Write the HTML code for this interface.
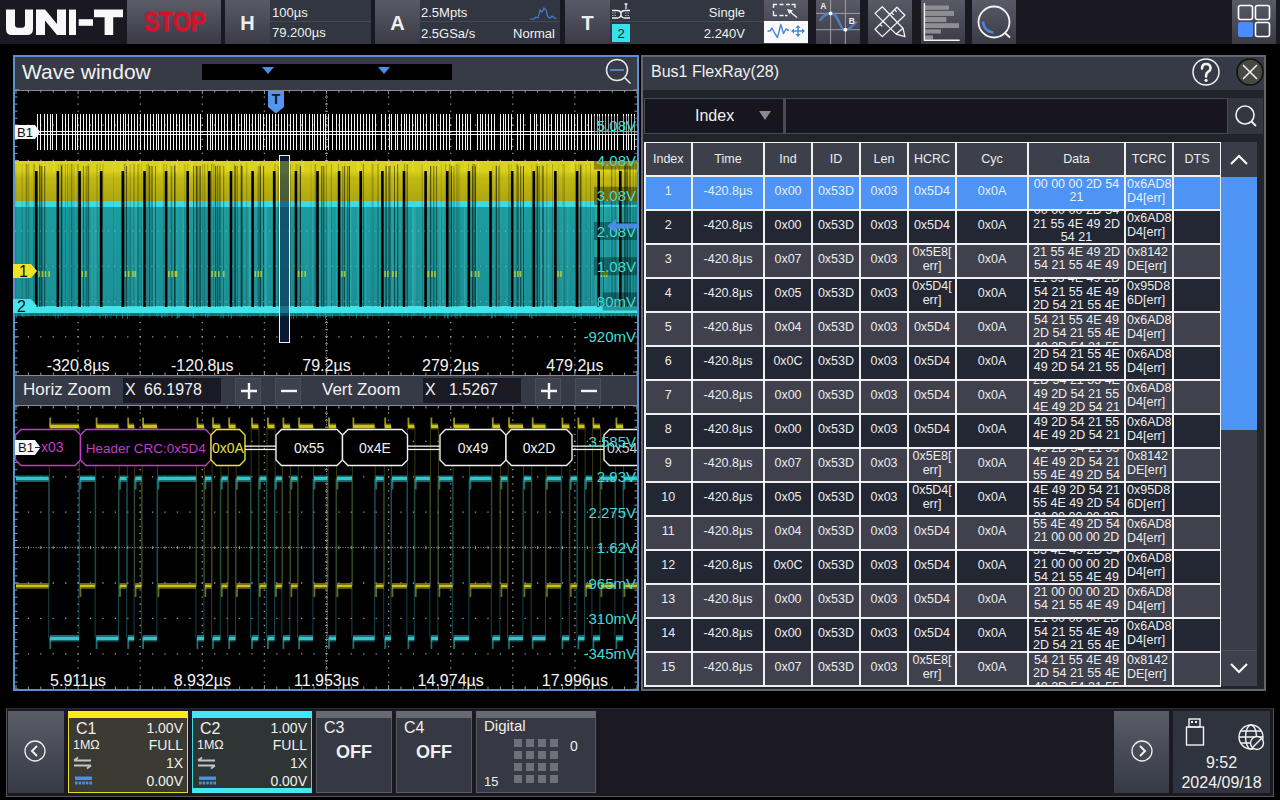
<!DOCTYPE html><html><head><meta charset="utf-8"><style>
*{margin:0;padding:0;box-sizing:border-box}
html,body{width:1280px;height:800px;overflow:hidden;background:#000;font-family:"Liberation Sans",sans-serif;color:#fff}
.a{position:absolute}
.t{position:absolute;white-space:nowrap;line-height:1}
</style></head><body>
<div class="a" style="left:0;top:0;width:1280px;height:44px;background:#1a1820"></div>
<svg class="a" style="left:0;top:0" width="130" height="44" viewBox="0 0 130 44">
<g fill="#f8f8f8">
<path d="M6 9.6h9v15q0 3.2 3 3.2h4q3 0 3-3.2V9.6h8V29q0 6-6 6H12q-6 0-6-6z"/>
<path d="M36 9.6h9l12 14.5V9.6h9V35h-9L45 20.5V35h-9z"/>
<rect x="69" y="9.6" width="7" height="25.4"/>
<rect x="78.7" y="19.2" width="14.3" height="6.6"/>
<path d="M94 9.6h29v7.6h-9.8V35h-8.6V17.2H94z"/>
</g></svg>
<div class="a" style="left:127px;top:0;width:94px;height:44px;background:linear-gradient(#5c5c68,#3a3a46)"></div>
<div class="t" style="left:144px;top:8.5px;font-size:27px;font-weight:bold;color:#d0142c;-webkit-text-stroke:0.9px #d0142c;transform:scaleX(0.85);transform-origin:0 0">STOP</div>
<div class="a" style="left:225px;top:0;width:45px;height:44px;background:linear-gradient(#5a5a66,#3a3b46)"></div>
<div class="t" style="left:225px;width:45px;text-align:center;top:13px;font-size:20px;font-weight:bold;color:#eee">H</div>
<div class="a" style="left:270px;top:0;width:101px;height:44px;background:#323641"></div>
<div class="a" style="left:270px;top:21px;width:101px;height:1px;background:#454954"></div>
<div class="t" style="left:272px;top:6px;font-size:13px;color:#f0f0f0">100µs</div>
<div class="t" style="left:272px;top:26px;font-size:13px;color:#f0f0f0">79.200µs</div>
<div class="a" style="left:375px;top:0;width:45px;height:44px;background:linear-gradient(#5a5a66,#3a3b46)"></div>
<div class="t" style="left:375px;width:45px;text-align:center;top:13px;font-size:20px;font-weight:bold;color:#eee">A</div>
<div class="a" style="left:420px;top:0;width:140px;height:44px;background:#323641"></div>
<div class="a" style="left:420px;top:21px;width:140px;height:1px;background:#454954"></div>
<div class="t" style="left:421px;top:6px;font-size:13px;color:#f0f0f0">2.5Mpts</div>
<div class="t" style="left:421px;top:27px;font-size:13px;color:#f0f0f0">2.5GSa/s</div>
<div class="t" style="left:484px;width:71px;text-align:right;top:27px;font-size:13px;color:#f0f0f0">Normal</div>
<svg class="a" style="left:529px;top:4px" width="28" height="16"><polyline points="1,15 5,15 7,13 9,14 11,6 13,8 15,4 17,6 19,13 21,14 23,12 27,15" fill="none" stroke="#3f7fd8" stroke-width="1.2"/></svg>
<div class="a" style="left:565px;top:0;width:45px;height:44px;background:linear-gradient(#5a5a66,#3a3b46)"></div>
<div class="t" style="left:565px;width:45px;text-align:center;top:13px;font-size:20px;font-weight:bold;color:#eee">T</div>
<div class="a" style="left:610px;top:0;width:184px;height:44px;background:#323641"></div>
<div class="a" style="left:610px;top:21px;width:184px;height:1px;background:#454954"></div>
<div class="t" style="left:560px;width:185px;text-align:right;top:6px;font-size:13px;color:#f0f0f0">Single</div>
<div class="t" style="left:560px;width:185px;text-align:right;top:27px;font-size:13px;color:#f0f0f0">2.240V</div>
<svg class="a" style="left:610px;top:0" width="22" height="22" viewBox="0 0 22 22"><g fill="none" stroke="#f0f0f0" stroke-width="1.3">
<path d="M2 10.5h5q4 0 4 3.75T7 18H2M20 10.5h-5q-4 0-4 3.75T15 18h5M14.5 4h3M16 4v5"/></g>
<path d="M2 13h5M2 15.5h5M15 13h5M15 15.5h5" stroke="#c8c8c8" stroke-width="0.8" stroke-dasharray="1.5,1"/></svg>
<div class="a" style="left:612px;top:24px;width:18px;height:18px;background:#38e0ec"></div>
<div class="t" style="left:612px;width:18px;text-align:center;top:27px;font-size:13px;color:#102020">2</div>
<div class="a" style="left:764px;top:0;width:44px;height:44px;background:linear-gradient(#5a5a66,#3a3b46)"></div>
<div class="a" style="left:816px;top:0;width:44px;height:44px;background:linear-gradient(#5a5a66,#3a3b46)"></div>
<div class="a" style="left:868px;top:0;width:44px;height:44px;background:linear-gradient(#5a5a66,#3a3b46)"></div>
<div class="a" style="left:921px;top:0;width:44px;height:44px;background:linear-gradient(#5a5a66,#3a3b46)"></div>
<div class="a" style="left:972px;top:0;width:44px;height:44px;background:linear-gradient(#5a5a66,#3a3b46)"></div>
<div class="a" style="left:764px;top:21px;width:44px;height:22px;background:#fafafa"></div>
<svg class="a" style="left:764px;top:0" width="44" height="44" viewBox="0 0 44 44"><g fill="none" stroke="#f4f4f4" stroke-width="1.3">
<path d="M9.5 8V4.5H13M15.5 4.5h4M22 4.5h4M27.5 4.5h3.5V8M9.5 11v4.5H13M15.5 15.5h4M21 15.5h2.5"/>
<path d="M24.5 10.5l8.5 7"/></g><path d="M23 9l6 1.2-3.8 3.8z" fill="#f4f4f4"/>
<g fill="none" stroke="#4a86d8" stroke-width="1.4" stroke-linejoin="round"><polyline points="3.5,31 6,31 8,28 10.5,33 13.5,37.5 16.8,24.5 19.5,33.5 22,29 25,30.5"/>
<path d="M28 31h12M34 26v10"/></g>
<g fill="#4a86d8"><path d="M27 31l3-2.5v5z"/><path d="M41 31l-3-2.5v5z"/><path d="M34 25l-2.5 3h5z"/><path d="M34 37l-2.5-3h5z"/></g></svg>
<svg class="a" style="left:816px;top:0" width="44" height="44" viewBox="0 0 44 44">
<g stroke="#a8a8b0" stroke-width="0.9"><path d="M14.6 0v44M29.4 0v44M0 13.4h44M0 29.7h44"/></g>
<path d="M3.8 20.7C7 16 10 13.4 14.6 13.4S21 18 24 24 27 29.7 29.4 29.7 36 27 40.7 21.5" fill="none" stroke="#4f86d0" stroke-width="2.6" opacity="0.85"/>
<circle cx="14.6" cy="13.4" r="1.9" fill="#fff"/><circle cx="29.4" cy="29.7" r="1.9" fill="#fff"/>
<text x="4.3" y="8.8" font-size="8.5" font-weight="bold" fill="#eee" font-family="Liberation Sans">A</text>
<text x="32.8" y="24.3" font-size="8.5" font-weight="bold" fill="#eee" font-family="Liberation Sans">B</text></svg>
<svg class="a" style="left:868px;top:0" width="44" height="44" viewBox="0 0 44 44"><g fill="none" stroke="#f2f2f2" stroke-width="1.3" stroke-linejoin="round">
<path d="M7 13.4L14.3 6.7 35 28.2 36.9 36.6 28.2 34.1 7 13.4z"/><path d="M28.2 34.1L35 28.2"/>
<path d="M7 29.3L28.9 7.3 36.9 15.2 14.3 36.6z"/>
<path d="M23.5 12.7l2.2 2.2M26.5 9.7l2.2 2.2M12 24.2l2.2 2.2M15 21.2l2.2 2.2"/></g></svg>
<svg class="a" style="left:921px;top:0" width="44" height="44" viewBox="0 0 44 44"><g fill="#8e8e94">
<rect x="4" y="5.5" width="24" height="4.3"/><rect x="4" y="11" width="29" height="4.9"/><rect x="4" y="17" width="21.3" height="5"/>
<rect x="4" y="23.2" width="34" height="4.8"/><rect x="4" y="29.3" width="16" height="4.2"/><rect x="4" y="35.4" width="8" height="4.2"/></g>
<path d="M3.4 3v37.2h35.3" fill="none" stroke="#f4f4f4" stroke-width="1.4"/></svg>
<svg class="a" style="left:972px;top:0" width="44" height="44" viewBox="0 0 44 44">
<circle cx="22" cy="22" r="15.5" fill="none" stroke="#f4f4f4" stroke-width="1.8"/>
<path d="M33 33l5 4.5" stroke="#f4f4f4" stroke-width="1.8"/>
<path d="M11 21.5A11 11 0 0 0 21.5 32.5" fill="none" stroke="#4a86d8" stroke-width="2.6"/></svg>
<div class="a" style="left:1232px;top:0;width:44px;height:44px;background:linear-gradient(#5a5a66,#3a3b46)"></div>
<svg class="a" style="left:1232px;top:0" width="44" height="44" viewBox="0 0 44 44"><g fill="none" stroke="#fff" stroke-width="1.6">
<rect x="6.5" y="5.5" width="14" height="14" rx="2"/><rect x="23.5" y="5.5" width="14" height="14" rx="2"/><rect x="23.5" y="22.5" width="14" height="14" rx="2"/></g>
<rect x="6" y="22" width="15" height="15" rx="2" fill="#4a8cff"/></svg>
<div class="a" style="left:13px;top:55px;width:626px;height:636px;border:2px solid #5a8fd6;background:#000"></div>
<div class="a" style="left:15px;top:57px;width:622px;height:33px;background:#373b45"></div>
<div class="t" style="left:22px;top:61px;font-size:21px;color:#f2f2f2">Wave window</div>
<div class="a" style="left:202px;top:64px;width:250px;height:16px;background:#000"></div>
<div class="a" style="left:15px;top:90px;width:622px;height:1px;background:#8a8a90"></div>
<svg class="a" style="left:0;top:0" width="640" height="100"><g fill="#4a8ee8"><path d="M262 67h12l-6 7z"/><path d="M378 67h12l-6 7z"/></g>
<circle cx="617" cy="70" r="10.5" fill="none" stroke="#e8e8e8" stroke-width="1.5"/><path d="M610 70h14" stroke="#6a9ae0" stroke-width="1.5"/><path d="M624.5 77.5l6 6" stroke="#e8e8e8" stroke-width="1.6"/></svg>
<svg class="a" style="left:0;top:0" width="640" height="380"><line x1="78.1" y1="90" x2="78.1" y2="375" stroke="#9a9a9a" stroke-width="1.3" stroke-dasharray="1.3,5.75" stroke-dashoffset="0.65"/><line x1="140.2" y1="90" x2="140.2" y2="375" stroke="#9a9a9a" stroke-width="1.3" stroke-dasharray="1.3,5.75" stroke-dashoffset="0.65"/><line x1="202.3" y1="90" x2="202.3" y2="375" stroke="#9a9a9a" stroke-width="1.3" stroke-dasharray="1.3,5.75" stroke-dashoffset="0.65"/><line x1="264.4" y1="90" x2="264.4" y2="375" stroke="#9a9a9a" stroke-width="1.3" stroke-dasharray="1.3,5.75" stroke-dashoffset="0.65"/><line x1="326.5" y1="90" x2="326.5" y2="375" stroke="#9a9a9a" stroke-width="1" stroke-dasharray="1,1.6"/><rect x="325.0" y="96.5" width="3" height="1" fill="#9a9a9a"/><rect x="325.0" y="103.6" width="3" height="1" fill="#9a9a9a"/><rect x="325.0" y="110.7" width="3" height="1" fill="#9a9a9a"/><rect x="325.0" y="117.7" width="3" height="1" fill="#9a9a9a"/><rect x="325.0" y="124.8" width="3" height="1" fill="#9a9a9a"/><rect x="325.0" y="131.8" width="3" height="1" fill="#9a9a9a"/><rect x="325.0" y="138.8" width="3" height="1" fill="#9a9a9a"/><rect x="325.0" y="145.9" width="3" height="1" fill="#9a9a9a"/><rect x="325.0" y="152.9" width="3" height="1" fill="#9a9a9a"/><rect x="325.0" y="160.0" width="3" height="1" fill="#9a9a9a"/><rect x="325.0" y="167.1" width="3" height="1" fill="#9a9a9a"/><rect x="325.0" y="174.1" width="3" height="1" fill="#9a9a9a"/><rect x="325.0" y="181.1" width="3" height="1" fill="#9a9a9a"/><rect x="325.0" y="188.2" width="3" height="1" fill="#9a9a9a"/><rect x="325.0" y="195.2" width="3" height="1" fill="#9a9a9a"/><rect x="325.0" y="202.3" width="3" height="1" fill="#9a9a9a"/><rect x="325.0" y="209.3" width="3" height="1" fill="#9a9a9a"/><rect x="325.0" y="216.4" width="3" height="1" fill="#9a9a9a"/><rect x="325.0" y="223.4" width="3" height="1" fill="#9a9a9a"/><rect x="325.0" y="230.5" width="3" height="1" fill="#9a9a9a"/><rect x="325.0" y="237.5" width="3" height="1" fill="#9a9a9a"/><rect x="325.0" y="244.6" width="3" height="1" fill="#9a9a9a"/><rect x="325.0" y="251.7" width="3" height="1" fill="#9a9a9a"/><rect x="325.0" y="258.7" width="3" height="1" fill="#9a9a9a"/><rect x="325.0" y="265.8" width="3" height="1" fill="#9a9a9a"/><rect x="325.0" y="272.8" width="3" height="1" fill="#9a9a9a"/><rect x="325.0" y="279.9" width="3" height="1" fill="#9a9a9a"/><rect x="325.0" y="286.9" width="3" height="1" fill="#9a9a9a"/><rect x="325.0" y="293.9" width="3" height="1" fill="#9a9a9a"/><rect x="325.0" y="301.0" width="3" height="1" fill="#9a9a9a"/><rect x="325.0" y="308.0" width="3" height="1" fill="#9a9a9a"/><rect x="325.0" y="315.1" width="3" height="1" fill="#9a9a9a"/><rect x="325.0" y="322.1" width="3" height="1" fill="#9a9a9a"/><rect x="325.0" y="329.2" width="3" height="1" fill="#9a9a9a"/><rect x="325.0" y="336.2" width="3" height="1" fill="#9a9a9a"/><rect x="325.0" y="343.3" width="3" height="1" fill="#9a9a9a"/><rect x="325.0" y="350.3" width="3" height="1" fill="#9a9a9a"/><rect x="325.0" y="357.4" width="3" height="1" fill="#9a9a9a"/><rect x="325.0" y="364.4" width="3" height="1" fill="#9a9a9a"/><rect x="325.0" y="371.5" width="3" height="1" fill="#9a9a9a"/><line x1="388.6" y1="90" x2="388.6" y2="375" stroke="#9a9a9a" stroke-width="1.3" stroke-dasharray="1.3,5.75" stroke-dashoffset="0.65"/><line x1="450.7" y1="90" x2="450.7" y2="375" stroke="#9a9a9a" stroke-width="1.3" stroke-dasharray="1.3,5.75" stroke-dashoffset="0.65"/><line x1="512.8" y1="90" x2="512.8" y2="375" stroke="#9a9a9a" stroke-width="1.3" stroke-dasharray="1.3,5.75" stroke-dashoffset="0.65"/><line x1="574.9" y1="90" x2="574.9" y2="375" stroke="#9a9a9a" stroke-width="1.3" stroke-dasharray="1.3,5.75" stroke-dashoffset="0.65"/><line x1="15" y1="125.2" x2="637" y2="125.2" stroke="#9a9a9a" stroke-width="1.3" stroke-dasharray="1.3,11.12" stroke-dashoffset="-12.77"/><line x1="15" y1="160.5" x2="637" y2="160.5" stroke="#9a9a9a" stroke-width="1.3" stroke-dasharray="1.3,11.12" stroke-dashoffset="-12.77"/><line x1="15" y1="195.8" x2="637" y2="195.8" stroke="#9a9a9a" stroke-width="1.3" stroke-dasharray="1.3,11.12" stroke-dashoffset="-12.77"/><line x1="15" y1="231.0" x2="637" y2="231.0" stroke="#9a9a9a" stroke-width="1" stroke-dasharray="1,1.6"/><rect x="27.9" y="229.5" width="1" height="3" fill="#9a9a9a"/><rect x="40.3" y="229.5" width="1" height="3" fill="#9a9a9a"/><rect x="52.8" y="229.5" width="1" height="3" fill="#9a9a9a"/><rect x="65.2" y="229.5" width="1" height="3" fill="#9a9a9a"/><rect x="77.6" y="229.5" width="1" height="3" fill="#9a9a9a"/><rect x="90.0" y="229.5" width="1" height="3" fill="#9a9a9a"/><rect x="102.4" y="229.5" width="1" height="3" fill="#9a9a9a"/><rect x="114.9" y="229.5" width="1" height="3" fill="#9a9a9a"/><rect x="127.3" y="229.5" width="1" height="3" fill="#9a9a9a"/><rect x="139.7" y="229.5" width="1" height="3" fill="#9a9a9a"/><rect x="152.1" y="229.5" width="1" height="3" fill="#9a9a9a"/><rect x="164.5" y="229.5" width="1" height="3" fill="#9a9a9a"/><rect x="177.0" y="229.5" width="1" height="3" fill="#9a9a9a"/><rect x="189.4" y="229.5" width="1" height="3" fill="#9a9a9a"/><rect x="201.8" y="229.5" width="1" height="3" fill="#9a9a9a"/><rect x="214.2" y="229.5" width="1" height="3" fill="#9a9a9a"/><rect x="226.6" y="229.5" width="1" height="3" fill="#9a9a9a"/><rect x="239.1" y="229.5" width="1" height="3" fill="#9a9a9a"/><rect x="251.5" y="229.5" width="1" height="3" fill="#9a9a9a"/><rect x="263.9" y="229.5" width="1" height="3" fill="#9a9a9a"/><rect x="276.3" y="229.5" width="1" height="3" fill="#9a9a9a"/><rect x="288.7" y="229.5" width="1" height="3" fill="#9a9a9a"/><rect x="301.2" y="229.5" width="1" height="3" fill="#9a9a9a"/><rect x="313.6" y="229.5" width="1" height="3" fill="#9a9a9a"/><rect x="326.0" y="229.5" width="1" height="3" fill="#9a9a9a"/><rect x="338.4" y="229.5" width="1" height="3" fill="#9a9a9a"/><rect x="350.8" y="229.5" width="1" height="3" fill="#9a9a9a"/><rect x="363.3" y="229.5" width="1" height="3" fill="#9a9a9a"/><rect x="375.7" y="229.5" width="1" height="3" fill="#9a9a9a"/><rect x="388.1" y="229.5" width="1" height="3" fill="#9a9a9a"/><rect x="400.5" y="229.5" width="1" height="3" fill="#9a9a9a"/><rect x="412.9" y="229.5" width="1" height="3" fill="#9a9a9a"/><rect x="425.4" y="229.5" width="1" height="3" fill="#9a9a9a"/><rect x="437.8" y="229.5" width="1" height="3" fill="#9a9a9a"/><rect x="450.2" y="229.5" width="1" height="3" fill="#9a9a9a"/><rect x="462.6" y="229.5" width="1" height="3" fill="#9a9a9a"/><rect x="475.0" y="229.5" width="1" height="3" fill="#9a9a9a"/><rect x="487.5" y="229.5" width="1" height="3" fill="#9a9a9a"/><rect x="499.9" y="229.5" width="1" height="3" fill="#9a9a9a"/><rect x="512.3" y="229.5" width="1" height="3" fill="#9a9a9a"/><rect x="524.7" y="229.5" width="1" height="3" fill="#9a9a9a"/><rect x="537.1" y="229.5" width="1" height="3" fill="#9a9a9a"/><rect x="549.6" y="229.5" width="1" height="3" fill="#9a9a9a"/><rect x="562.0" y="229.5" width="1" height="3" fill="#9a9a9a"/><rect x="574.4" y="229.5" width="1" height="3" fill="#9a9a9a"/><rect x="586.8" y="229.5" width="1" height="3" fill="#9a9a9a"/><rect x="599.2" y="229.5" width="1" height="3" fill="#9a9a9a"/><rect x="611.7" y="229.5" width="1" height="3" fill="#9a9a9a"/><rect x="624.1" y="229.5" width="1" height="3" fill="#9a9a9a"/><rect x="636.5" y="229.5" width="1" height="3" fill="#9a9a9a"/><line x1="15" y1="266.2" x2="637" y2="266.2" stroke="#9a9a9a" stroke-width="1.3" stroke-dasharray="1.3,11.12" stroke-dashoffset="-12.77"/><line x1="15" y1="301.5" x2="637" y2="301.5" stroke="#9a9a9a" stroke-width="1.3" stroke-dasharray="1.3,11.12" stroke-dashoffset="-12.77"/><line x1="15" y1="336.8" x2="637" y2="336.8" stroke="#9a9a9a" stroke-width="1.3" stroke-dasharray="1.3,11.12" stroke-dashoffset="-12.77"/><line x1="16.0" y1="90" x2="16.0" y2="94" stroke="#9a9a9a"/><line x1="16.0" y1="371" x2="16.0" y2="375" stroke="#9a9a9a"/><line x1="28.4" y1="90" x2="28.4" y2="92.5" stroke="#9a9a9a"/><line x1="28.4" y1="372.5" x2="28.4" y2="375" stroke="#9a9a9a"/><line x1="40.8" y1="90" x2="40.8" y2="92.5" stroke="#9a9a9a"/><line x1="40.8" y1="372.5" x2="40.8" y2="375" stroke="#9a9a9a"/><line x1="53.3" y1="90" x2="53.3" y2="92.5" stroke="#9a9a9a"/><line x1="53.3" y1="372.5" x2="53.3" y2="375" stroke="#9a9a9a"/><line x1="65.7" y1="90" x2="65.7" y2="92.5" stroke="#9a9a9a"/><line x1="65.7" y1="372.5" x2="65.7" y2="375" stroke="#9a9a9a"/><line x1="78.1" y1="90" x2="78.1" y2="94" stroke="#9a9a9a"/><line x1="78.1" y1="371" x2="78.1" y2="375" stroke="#9a9a9a"/><line x1="90.5" y1="90" x2="90.5" y2="92.5" stroke="#9a9a9a"/><line x1="90.5" y1="372.5" x2="90.5" y2="375" stroke="#9a9a9a"/><line x1="102.9" y1="90" x2="102.9" y2="92.5" stroke="#9a9a9a"/><line x1="102.9" y1="372.5" x2="102.9" y2="375" stroke="#9a9a9a"/><line x1="115.4" y1="90" x2="115.4" y2="92.5" stroke="#9a9a9a"/><line x1="115.4" y1="372.5" x2="115.4" y2="375" stroke="#9a9a9a"/><line x1="127.8" y1="90" x2="127.8" y2="92.5" stroke="#9a9a9a"/><line x1="127.8" y1="372.5" x2="127.8" y2="375" stroke="#9a9a9a"/><line x1="140.2" y1="90" x2="140.2" y2="94" stroke="#9a9a9a"/><line x1="140.2" y1="371" x2="140.2" y2="375" stroke="#9a9a9a"/><line x1="152.6" y1="90" x2="152.6" y2="92.5" stroke="#9a9a9a"/><line x1="152.6" y1="372.5" x2="152.6" y2="375" stroke="#9a9a9a"/><line x1="165.0" y1="90" x2="165.0" y2="92.5" stroke="#9a9a9a"/><line x1="165.0" y1="372.5" x2="165.0" y2="375" stroke="#9a9a9a"/><line x1="177.5" y1="90" x2="177.5" y2="92.5" stroke="#9a9a9a"/><line x1="177.5" y1="372.5" x2="177.5" y2="375" stroke="#9a9a9a"/><line x1="189.9" y1="90" x2="189.9" y2="92.5" stroke="#9a9a9a"/><line x1="189.9" y1="372.5" x2="189.9" y2="375" stroke="#9a9a9a"/><line x1="202.3" y1="90" x2="202.3" y2="94" stroke="#9a9a9a"/><line x1="202.3" y1="371" x2="202.3" y2="375" stroke="#9a9a9a"/><line x1="214.7" y1="90" x2="214.7" y2="92.5" stroke="#9a9a9a"/><line x1="214.7" y1="372.5" x2="214.7" y2="375" stroke="#9a9a9a"/><line x1="227.1" y1="90" x2="227.1" y2="92.5" stroke="#9a9a9a"/><line x1="227.1" y1="372.5" x2="227.1" y2="375" stroke="#9a9a9a"/><line x1="239.6" y1="90" x2="239.6" y2="92.5" stroke="#9a9a9a"/><line x1="239.6" y1="372.5" x2="239.6" y2="375" stroke="#9a9a9a"/><line x1="252.0" y1="90" x2="252.0" y2="92.5" stroke="#9a9a9a"/><line x1="252.0" y1="372.5" x2="252.0" y2="375" stroke="#9a9a9a"/><line x1="264.4" y1="90" x2="264.4" y2="94" stroke="#9a9a9a"/><line x1="264.4" y1="371" x2="264.4" y2="375" stroke="#9a9a9a"/><line x1="276.8" y1="90" x2="276.8" y2="92.5" stroke="#9a9a9a"/><line x1="276.8" y1="372.5" x2="276.8" y2="375" stroke="#9a9a9a"/><line x1="289.2" y1="90" x2="289.2" y2="92.5" stroke="#9a9a9a"/><line x1="289.2" y1="372.5" x2="289.2" y2="375" stroke="#9a9a9a"/><line x1="301.7" y1="90" x2="301.7" y2="92.5" stroke="#9a9a9a"/><line x1="301.7" y1="372.5" x2="301.7" y2="375" stroke="#9a9a9a"/><line x1="314.1" y1="90" x2="314.1" y2="92.5" stroke="#9a9a9a"/><line x1="314.1" y1="372.5" x2="314.1" y2="375" stroke="#9a9a9a"/><line x1="326.5" y1="90" x2="326.5" y2="94" stroke="#9a9a9a"/><line x1="326.5" y1="371" x2="326.5" y2="375" stroke="#9a9a9a"/><line x1="338.9" y1="90" x2="338.9" y2="92.5" stroke="#9a9a9a"/><line x1="338.9" y1="372.5" x2="338.9" y2="375" stroke="#9a9a9a"/><line x1="351.3" y1="90" x2="351.3" y2="92.5" stroke="#9a9a9a"/><line x1="351.3" y1="372.5" x2="351.3" y2="375" stroke="#9a9a9a"/><line x1="363.8" y1="90" x2="363.8" y2="92.5" stroke="#9a9a9a"/><line x1="363.8" y1="372.5" x2="363.8" y2="375" stroke="#9a9a9a"/><line x1="376.2" y1="90" x2="376.2" y2="92.5" stroke="#9a9a9a"/><line x1="376.2" y1="372.5" x2="376.2" y2="375" stroke="#9a9a9a"/><line x1="388.6" y1="90" x2="388.6" y2="94" stroke="#9a9a9a"/><line x1="388.6" y1="371" x2="388.6" y2="375" stroke="#9a9a9a"/><line x1="401.0" y1="90" x2="401.0" y2="92.5" stroke="#9a9a9a"/><line x1="401.0" y1="372.5" x2="401.0" y2="375" stroke="#9a9a9a"/><line x1="413.4" y1="90" x2="413.4" y2="92.5" stroke="#9a9a9a"/><line x1="413.4" y1="372.5" x2="413.4" y2="375" stroke="#9a9a9a"/><line x1="425.9" y1="90" x2="425.9" y2="92.5" stroke="#9a9a9a"/><line x1="425.9" y1="372.5" x2="425.9" y2="375" stroke="#9a9a9a"/><line x1="438.3" y1="90" x2="438.3" y2="92.5" stroke="#9a9a9a"/><line x1="438.3" y1="372.5" x2="438.3" y2="375" stroke="#9a9a9a"/><line x1="450.7" y1="90" x2="450.7" y2="94" stroke="#9a9a9a"/><line x1="450.7" y1="371" x2="450.7" y2="375" stroke="#9a9a9a"/><line x1="463.1" y1="90" x2="463.1" y2="92.5" stroke="#9a9a9a"/><line x1="463.1" y1="372.5" x2="463.1" y2="375" stroke="#9a9a9a"/><line x1="475.5" y1="90" x2="475.5" y2="92.5" stroke="#9a9a9a"/><line x1="475.5" y1="372.5" x2="475.5" y2="375" stroke="#9a9a9a"/><line x1="488.0" y1="90" x2="488.0" y2="92.5" stroke="#9a9a9a"/><line x1="488.0" y1="372.5" x2="488.0" y2="375" stroke="#9a9a9a"/><line x1="500.4" y1="90" x2="500.4" y2="92.5" stroke="#9a9a9a"/><line x1="500.4" y1="372.5" x2="500.4" y2="375" stroke="#9a9a9a"/><line x1="512.8" y1="90" x2="512.8" y2="94" stroke="#9a9a9a"/><line x1="512.8" y1="371" x2="512.8" y2="375" stroke="#9a9a9a"/><line x1="525.2" y1="90" x2="525.2" y2="92.5" stroke="#9a9a9a"/><line x1="525.2" y1="372.5" x2="525.2" y2="375" stroke="#9a9a9a"/><line x1="537.6" y1="90" x2="537.6" y2="92.5" stroke="#9a9a9a"/><line x1="537.6" y1="372.5" x2="537.6" y2="375" stroke="#9a9a9a"/><line x1="550.1" y1="90" x2="550.1" y2="92.5" stroke="#9a9a9a"/><line x1="550.1" y1="372.5" x2="550.1" y2="375" stroke="#9a9a9a"/><line x1="562.5" y1="90" x2="562.5" y2="92.5" stroke="#9a9a9a"/><line x1="562.5" y1="372.5" x2="562.5" y2="375" stroke="#9a9a9a"/><line x1="574.9" y1="90" x2="574.9" y2="94" stroke="#9a9a9a"/><line x1="574.9" y1="371" x2="574.9" y2="375" stroke="#9a9a9a"/><line x1="587.3" y1="90" x2="587.3" y2="92.5" stroke="#9a9a9a"/><line x1="587.3" y1="372.5" x2="587.3" y2="375" stroke="#9a9a9a"/><line x1="599.7" y1="90" x2="599.7" y2="92.5" stroke="#9a9a9a"/><line x1="599.7" y1="372.5" x2="599.7" y2="375" stroke="#9a9a9a"/><line x1="612.2" y1="90" x2="612.2" y2="92.5" stroke="#9a9a9a"/><line x1="612.2" y1="372.5" x2="612.2" y2="375" stroke="#9a9a9a"/><line x1="624.6" y1="90" x2="624.6" y2="92.5" stroke="#9a9a9a"/><line x1="624.6" y1="372.5" x2="624.6" y2="375" stroke="#9a9a9a"/><line x1="637.0" y1="90" x2="637.0" y2="94" stroke="#9a9a9a"/><line x1="637.0" y1="371" x2="637.0" y2="375" stroke="#9a9a9a"/><line x1="15" y1="90.0" x2="19" y2="90.0" stroke="#9a9a9a"/><line x1="633" y1="90.0" x2="637" y2="90.0" stroke="#9a9a9a"/><line x1="15" y1="97.0" x2="17.5" y2="97.0" stroke="#9a9a9a"/><line x1="634.5" y1="97.0" x2="637" y2="97.0" stroke="#9a9a9a"/><line x1="15" y1="104.1" x2="17.5" y2="104.1" stroke="#9a9a9a"/><line x1="634.5" y1="104.1" x2="637" y2="104.1" stroke="#9a9a9a"/><line x1="15" y1="111.2" x2="17.5" y2="111.2" stroke="#9a9a9a"/><line x1="634.5" y1="111.2" x2="637" y2="111.2" stroke="#9a9a9a"/><line x1="15" y1="118.2" x2="17.5" y2="118.2" stroke="#9a9a9a"/><line x1="634.5" y1="118.2" x2="637" y2="118.2" stroke="#9a9a9a"/><line x1="15" y1="125.2" x2="19" y2="125.2" stroke="#9a9a9a"/><line x1="633" y1="125.2" x2="637" y2="125.2" stroke="#9a9a9a"/><line x1="15" y1="132.3" x2="17.5" y2="132.3" stroke="#9a9a9a"/><line x1="634.5" y1="132.3" x2="637" y2="132.3" stroke="#9a9a9a"/><line x1="15" y1="139.3" x2="17.5" y2="139.3" stroke="#9a9a9a"/><line x1="634.5" y1="139.3" x2="637" y2="139.3" stroke="#9a9a9a"/><line x1="15" y1="146.4" x2="17.5" y2="146.4" stroke="#9a9a9a"/><line x1="634.5" y1="146.4" x2="637" y2="146.4" stroke="#9a9a9a"/><line x1="15" y1="153.4" x2="17.5" y2="153.4" stroke="#9a9a9a"/><line x1="634.5" y1="153.4" x2="637" y2="153.4" stroke="#9a9a9a"/><line x1="15" y1="160.5" x2="19" y2="160.5" stroke="#9a9a9a"/><line x1="633" y1="160.5" x2="637" y2="160.5" stroke="#9a9a9a"/><line x1="15" y1="167.6" x2="17.5" y2="167.6" stroke="#9a9a9a"/><line x1="634.5" y1="167.6" x2="637" y2="167.6" stroke="#9a9a9a"/><line x1="15" y1="174.6" x2="17.5" y2="174.6" stroke="#9a9a9a"/><line x1="634.5" y1="174.6" x2="637" y2="174.6" stroke="#9a9a9a"/><line x1="15" y1="181.6" x2="17.5" y2="181.6" stroke="#9a9a9a"/><line x1="634.5" y1="181.6" x2="637" y2="181.6" stroke="#9a9a9a"/><line x1="15" y1="188.7" x2="17.5" y2="188.7" stroke="#9a9a9a"/><line x1="634.5" y1="188.7" x2="637" y2="188.7" stroke="#9a9a9a"/><line x1="15" y1="195.8" x2="19" y2="195.8" stroke="#9a9a9a"/><line x1="633" y1="195.8" x2="637" y2="195.8" stroke="#9a9a9a"/><line x1="15" y1="202.8" x2="17.5" y2="202.8" stroke="#9a9a9a"/><line x1="634.5" y1="202.8" x2="637" y2="202.8" stroke="#9a9a9a"/><line x1="15" y1="209.8" x2="17.5" y2="209.8" stroke="#9a9a9a"/><line x1="634.5" y1="209.8" x2="637" y2="209.8" stroke="#9a9a9a"/><line x1="15" y1="216.9" x2="17.5" y2="216.9" stroke="#9a9a9a"/><line x1="634.5" y1="216.9" x2="637" y2="216.9" stroke="#9a9a9a"/><line x1="15" y1="223.9" x2="17.5" y2="223.9" stroke="#9a9a9a"/><line x1="634.5" y1="223.9" x2="637" y2="223.9" stroke="#9a9a9a"/><line x1="15" y1="231.0" x2="19" y2="231.0" stroke="#9a9a9a"/><line x1="633" y1="231.0" x2="637" y2="231.0" stroke="#9a9a9a"/><line x1="15" y1="238.0" x2="17.5" y2="238.0" stroke="#9a9a9a"/><line x1="634.5" y1="238.0" x2="637" y2="238.0" stroke="#9a9a9a"/><line x1="15" y1="245.1" x2="17.5" y2="245.1" stroke="#9a9a9a"/><line x1="634.5" y1="245.1" x2="637" y2="245.1" stroke="#9a9a9a"/><line x1="15" y1="252.2" x2="17.5" y2="252.2" stroke="#9a9a9a"/><line x1="634.5" y1="252.2" x2="637" y2="252.2" stroke="#9a9a9a"/><line x1="15" y1="259.2" x2="17.5" y2="259.2" stroke="#9a9a9a"/><line x1="634.5" y1="259.2" x2="637" y2="259.2" stroke="#9a9a9a"/><line x1="15" y1="266.2" x2="19" y2="266.2" stroke="#9a9a9a"/><line x1="633" y1="266.2" x2="637" y2="266.2" stroke="#9a9a9a"/><line x1="15" y1="273.3" x2="17.5" y2="273.3" stroke="#9a9a9a"/><line x1="634.5" y1="273.3" x2="637" y2="273.3" stroke="#9a9a9a"/><line x1="15" y1="280.4" x2="17.5" y2="280.4" stroke="#9a9a9a"/><line x1="634.5" y1="280.4" x2="637" y2="280.4" stroke="#9a9a9a"/><line x1="15" y1="287.4" x2="17.5" y2="287.4" stroke="#9a9a9a"/><line x1="634.5" y1="287.4" x2="637" y2="287.4" stroke="#9a9a9a"/><line x1="15" y1="294.4" x2="17.5" y2="294.4" stroke="#9a9a9a"/><line x1="634.5" y1="294.4" x2="637" y2="294.4" stroke="#9a9a9a"/><line x1="15" y1="301.5" x2="19" y2="301.5" stroke="#9a9a9a"/><line x1="633" y1="301.5" x2="637" y2="301.5" stroke="#9a9a9a"/><line x1="15" y1="308.5" x2="17.5" y2="308.5" stroke="#9a9a9a"/><line x1="634.5" y1="308.5" x2="637" y2="308.5" stroke="#9a9a9a"/><line x1="15" y1="315.6" x2="17.5" y2="315.6" stroke="#9a9a9a"/><line x1="634.5" y1="315.6" x2="637" y2="315.6" stroke="#9a9a9a"/><line x1="15" y1="322.6" x2="17.5" y2="322.6" stroke="#9a9a9a"/><line x1="634.5" y1="322.6" x2="637" y2="322.6" stroke="#9a9a9a"/><line x1="15" y1="329.7" x2="17.5" y2="329.7" stroke="#9a9a9a"/><line x1="634.5" y1="329.7" x2="637" y2="329.7" stroke="#9a9a9a"/><line x1="15" y1="336.8" x2="19" y2="336.8" stroke="#9a9a9a"/><line x1="633" y1="336.8" x2="637" y2="336.8" stroke="#9a9a9a"/><line x1="15" y1="343.8" x2="17.5" y2="343.8" stroke="#9a9a9a"/><line x1="634.5" y1="343.8" x2="637" y2="343.8" stroke="#9a9a9a"/><line x1="15" y1="350.8" x2="17.5" y2="350.8" stroke="#9a9a9a"/><line x1="634.5" y1="350.8" x2="637" y2="350.8" stroke="#9a9a9a"/><line x1="15" y1="357.9" x2="17.5" y2="357.9" stroke="#9a9a9a"/><line x1="634.5" y1="357.9" x2="637" y2="357.9" stroke="#9a9a9a"/><line x1="15" y1="364.9" x2="17.5" y2="364.9" stroke="#9a9a9a"/><line x1="634.5" y1="364.9" x2="637" y2="364.9" stroke="#9a9a9a"/><line x1="15" y1="372.0" x2="19" y2="372.0" stroke="#9a9a9a"/><line x1="633" y1="372.0" x2="637" y2="372.0" stroke="#9a9a9a"/><g shape-rendering="crispEdges" fill="#f4f4f4"><rect x="37" y="114" width="1" height="36"/><rect x="40" y="114" width="1" height="36"/><rect x="44" y="114" width="1" height="36"/><rect x="47" y="114" width="1" height="36"/><rect x="50" y="114" width="1" height="36"/><rect x="52" y="114" width="1" height="36"/><rect x="56" y="114" width="1" height="36"/><rect x="62" y="114" width="1" height="36"/><rect x="65" y="114" width="1" height="36"/><rect x="68" y="114" width="1" height="36"/><rect x="72" y="114" width="1" height="36"/><rect x="75" y="114" width="1" height="36"/><rect x="77" y="114" width="1" height="36"/><rect x="80" y="114" width="1" height="36"/><rect x="83" y="114" width="1" height="36"/><rect x="86" y="114" width="1" height="36"/><rect x="89" y="114" width="1" height="36"/><rect x="92" y="114" width="1" height="36"/><rect x="95" y="114" width="1" height="36"/><rect x="98" y="114" width="1" height="36"/><rect x="101" y="114" width="1" height="36"/><rect x="105" y="114" width="1" height="36"/><rect x="108" y="114" width="1" height="36"/><rect x="111" y="114" width="1" height="36"/><rect x="114" y="114" width="1" height="36"/><rect x="117" y="114" width="1" height="36"/><rect x="120" y="114" width="1" height="36"/><rect x="123" y="114" width="1" height="36"/><rect x="125" y="114" width="1" height="36"/><rect x="128" y="114" width="1" height="36"/><rect x="131" y="114" width="1" height="36"/><rect x="134" y="114" width="1" height="36"/><rect x="137" y="114" width="1" height="36"/><rect x="140" y="114" width="1" height="36"/><rect x="144" y="114" width="1" height="36"/><rect x="147" y="114" width="1" height="36"/><rect x="150" y="114" width="1" height="36"/><rect x="153" y="114" width="1" height="36"/><rect x="156" y="114" width="1" height="36"/><rect x="158" y="114" width="1" height="36"/><rect x="161" y="114" width="1" height="36"/><rect x="164" y="114" width="1" height="36"/><rect x="167" y="114" width="1" height="36"/><rect x="170" y="114" width="1" height="36"/><rect x="173" y="114" width="1" height="36"/><rect x="176" y="114" width="1" height="36"/><rect x="179" y="114" width="1" height="36"/><rect x="182" y="114" width="1" height="36"/><rect x="185" y="114" width="1" height="36"/><rect x="188" y="114" width="1" height="36"/><rect x="191" y="114" width="1" height="36"/><rect x="194" y="114" width="1" height="36"/><rect x="197" y="114" width="1" height="36"/><rect x="200" y="114" width="1" height="36"/><rect x="207" y="114" width="1" height="36"/><rect x="210" y="114" width="1" height="36"/><rect x="212" y="114" width="1" height="36"/><rect x="215" y="114" width="1" height="36"/><rect x="218" y="114" width="1" height="36"/><rect x="221" y="114" width="1" height="36"/><rect x="224" y="114" width="1" height="36"/><rect x="227" y="114" width="1" height="36"/><rect x="231" y="114" width="1" height="36"/><rect x="235" y="114" width="1" height="36"/><rect x="238" y="114" width="1" height="36"/><rect x="241" y="114" width="1" height="36"/><rect x="244" y="114" width="1" height="36"/><rect x="246" y="114" width="1" height="36"/><rect x="249" y="114" width="1" height="36"/><rect x="252" y="114" width="1" height="36"/><rect x="255" y="114" width="1" height="36"/><rect x="258" y="114" width="1" height="36"/><rect x="260" y="114" width="1" height="36"/><rect x="263" y="114" width="1" height="36"/><rect x="266" y="114" width="1" height="36"/><rect x="269" y="114" width="1" height="36"/><rect x="272" y="114" width="1" height="36"/><rect x="275" y="114" width="1" height="36"/><rect x="278" y="114" width="1" height="36"/><rect x="281" y="114" width="1" height="36"/><rect x="284" y="114" width="1" height="36"/><rect x="287" y="114" width="1" height="36"/><rect x="290" y="114" width="1" height="36"/><rect x="293" y="114" width="1" height="36"/><rect x="296" y="114" width="1" height="36"/><rect x="300" y="114" width="1" height="36"/><rect x="302" y="114" width="1" height="36"/><rect x="305" y="114" width="1" height="36"/><rect x="309" y="114" width="1" height="36"/><rect x="312" y="114" width="1" height="36"/><rect x="314" y="114" width="1" height="36"/><rect x="317" y="114" width="1" height="36"/><rect x="320" y="114" width="1" height="36"/><rect x="323" y="114" width="1" height="36"/><rect x="325" y="114" width="1" height="36"/><rect x="328" y="114" width="1" height="36"/><rect x="332" y="114" width="1" height="36"/><rect x="336" y="114" width="1" height="36"/><rect x="339" y="114" width="1" height="36"/><rect x="342" y="114" width="1" height="36"/><rect x="345" y="114" width="1" height="36"/><rect x="348" y="114" width="1" height="36"/><rect x="351" y="114" width="1" height="36"/><rect x="354" y="114" width="1" height="36"/><rect x="357" y="114" width="1" height="36"/><rect x="360" y="114" width="1" height="36"/><rect x="363" y="114" width="1" height="36"/><rect x="366" y="114" width="1" height="36"/><rect x="369" y="114" width="1" height="36"/><rect x="372" y="114" width="1" height="36"/><rect x="375" y="114" width="1" height="36"/><rect x="381" y="114" width="1" height="36"/><rect x="385" y="114" width="1" height="36"/><rect x="389" y="114" width="1" height="36"/><rect x="391" y="114" width="1" height="36"/><rect x="395" y="114" width="1" height="36"/><rect x="397" y="114" width="1" height="36"/><rect x="401" y="114" width="1" height="36"/><rect x="404" y="114" width="1" height="36"/><rect x="406" y="114" width="1" height="36"/><rect x="409" y="114" width="1" height="36"/><rect x="412" y="114" width="1" height="36"/><rect x="415" y="114" width="1" height="36"/><rect x="417" y="114" width="1" height="36"/><rect x="420" y="114" width="1" height="36"/><rect x="423" y="114" width="1" height="36"/><rect x="426" y="114" width="1" height="36"/><rect x="430" y="114" width="1" height="36"/><rect x="433" y="114" width="1" height="36"/><rect x="436" y="114" width="1" height="36"/><rect x="440" y="114" width="1" height="36"/><rect x="443" y="114" width="1" height="36"/><rect x="446" y="114" width="1" height="36"/><rect x="449" y="114" width="1" height="36"/><rect x="456" y="114" width="1" height="36"/><rect x="459" y="114" width="1" height="36"/><rect x="462" y="114" width="1" height="36"/><rect x="465" y="114" width="1" height="36"/><rect x="467" y="114" width="1" height="36"/><rect x="470" y="114" width="1" height="36"/><rect x="477" y="114" width="1" height="36"/><rect x="480" y="114" width="1" height="36"/><rect x="482" y="114" width="1" height="36"/><rect x="485" y="114" width="1" height="36"/><rect x="488" y="114" width="1" height="36"/><rect x="491" y="114" width="1" height="36"/><rect x="494" y="114" width="1" height="36"/><rect x="500" y="114" width="1" height="36"/><rect x="503" y="114" width="1" height="36"/><rect x="505" y="114" width="1" height="36"/><rect x="508" y="114" width="1" height="36"/><rect x="511" y="114" width="1" height="36"/><rect x="517" y="114" width="1" height="36"/><rect x="520" y="114" width="1" height="36"/><rect x="523" y="114" width="1" height="36"/><rect x="530" y="114" width="1" height="36"/><rect x="534" y="114" width="1" height="36"/><rect x="536" y="114" width="1" height="36"/><rect x="540" y="114" width="1" height="36"/><rect x="543" y="114" width="1" height="36"/><rect x="545" y="114" width="1" height="36"/><rect x="548" y="114" width="1" height="36"/><rect x="551" y="114" width="1" height="36"/><rect x="555" y="114" width="1" height="36"/><rect x="557" y="114" width="1" height="36"/><rect x="560" y="114" width="1" height="36"/><rect x="562" y="114" width="1" height="36"/><rect x="565" y="114" width="1" height="36"/><rect x="568" y="114" width="1" height="36"/><rect x="571" y="114" width="1" height="36"/><rect x="574" y="114" width="1" height="36"/><rect x="577" y="114" width="1" height="36"/><rect x="581" y="114" width="1" height="36"/><rect x="585" y="114" width="1" height="36"/><rect x="588" y="114" width="1" height="36"/><rect x="591" y="114" width="1" height="36"/><rect x="594" y="114" width="1" height="36"/><rect x="597" y="114" width="1" height="36"/><rect x="599" y="114" width="1" height="36"/><rect x="602" y="114" width="1" height="36"/><rect x="605" y="114" width="1" height="36"/><rect x="608" y="114" width="1" height="36"/><rect x="611" y="114" width="1" height="36"/><rect x="614" y="114" width="1" height="36"/><rect x="617" y="114" width="1" height="36"/><rect x="623" y="114" width="1" height="36"/><rect x="626" y="114" width="1" height="36"/><rect x="628" y="114" width="1" height="36"/><rect x="631" y="114" width="1" height="36"/><rect x="634" y="114" width="1" height="36"/><rect x="37" y="131" width="600" height="1"/><rect x="37" y="134" width="600" height="1"/></g><defs><linearGradient id="yg" x1="0" y1="0" x2="0" y2="1">
<stop offset="0" stop-color="#dcd41a"/><stop offset="0.25" stop-color="#d8d01a"/><stop offset="0.4" stop-color="#c2ba12"/><stop offset="1" stop-color="#aca512"/></linearGradient>
<linearGradient id="cg" x1="0" y1="0" x2="0" y2="1">
<stop offset="0" stop-color="#1c9c9e"/><stop offset="1" stop-color="#1b9096"/></linearGradient></defs><rect x="15" y="161" width="622" height="41" fill="url(#yg)"/><rect x="15" y="201" width="622" height="6" fill="#3edbe2"/><rect x="15" y="207" width="622" height="100" fill="url(#cg)"/><rect x="15" y="306" width="622" height="7" fill="#42e4ec"/><rect x="15" y="313" width="622" height="3" fill="#127070"/><rect x="296.4" y="164" width="1" height="143" fill="#000" opacity="0.20"/><rect x="589.9" y="164" width="1" height="143" fill="#000" opacity="0.18"/><rect x="330.9" y="164" width="1" height="143" fill="#000" opacity="0.21"/><rect x="129.9" y="164" width="1" height="143" fill="#000" opacity="0.19"/><rect x="406.8" y="164" width="1" height="143" fill="#000" opacity="0.25"/><rect x="73.5" y="164" width="1" height="143" fill="#000" opacity="0.15"/><rect x="71.4" y="164" width="1" height="143" fill="#000" opacity="0.26"/><rect x="446.3" y="164" width="1" height="143" fill="#000" opacity="0.09"/><rect x="625.9" y="164" width="1" height="143" fill="#000" opacity="0.29"/><rect x="421.7" y="164" width="1" height="143" fill="#000" opacity="0.22"/><rect x="113.0" y="164" width="1" height="143" fill="#000" opacity="0.08"/><rect x="343.7" y="164" width="1" height="143" fill="#000" opacity="0.09"/><rect x="133.3" y="164" width="1" height="143" fill="#000" opacity="0.13"/><rect x="33.7" y="164" width="1" height="143" fill="#000" opacity="0.18"/><rect x="289.0" y="164" width="1" height="143" fill="#000" opacity="0.27"/><rect x="337.9" y="164" width="1" height="143" fill="#000" opacity="0.22"/><rect x="325.9" y="164" width="1" height="143" fill="#000" opacity="0.23"/><rect x="299.5" y="164" width="1" height="143" fill="#000" opacity="0.14"/><rect x="635.5" y="164" width="1" height="143" fill="#000" opacity="0.30"/><rect x="537.6" y="164" width="1" height="143" fill="#000" opacity="0.24"/><rect x="211.1" y="164" width="1" height="143" fill="#000" opacity="0.13"/><rect x="194.8" y="164" width="1" height="143" fill="#000" opacity="0.10"/><rect x="491.6" y="164" width="1" height="143" fill="#000" opacity="0.17"/><rect x="541.6" y="164" width="1" height="143" fill="#000" opacity="0.17"/><rect x="610.9" y="164" width="1" height="143" fill="#000" opacity="0.27"/><rect x="15.3" y="164" width="1" height="143" fill="#000" opacity="0.13"/><rect x="581.2" y="164" width="1" height="143" fill="#000" opacity="0.18"/><rect x="624.8" y="164" width="1" height="143" fill="#000" opacity="0.17"/><rect x="60.4" y="164" width="1" height="143" fill="#000" opacity="0.22"/><rect x="499.2" y="164" width="1" height="143" fill="#000" opacity="0.14"/><rect x="69.2" y="164" width="1" height="143" fill="#000" opacity="0.15"/><rect x="614.7" y="164" width="1" height="143" fill="#000" opacity="0.25"/><rect x="88.4" y="164" width="1" height="143" fill="#000" opacity="0.13"/><rect x="77.9" y="164" width="1" height="143" fill="#000" opacity="0.09"/><rect x="510.7" y="164" width="1" height="143" fill="#000" opacity="0.12"/><rect x="362.9" y="164" width="1" height="143" fill="#000" opacity="0.18"/><rect x="133.6" y="164" width="1" height="143" fill="#000" opacity="0.24"/><rect x="96.5" y="164" width="1" height="143" fill="#000" opacity="0.22"/><rect x="87.5" y="164" width="1" height="143" fill="#000" opacity="0.17"/><rect x="147.4" y="164" width="1" height="143" fill="#000" opacity="0.14"/><rect x="618.9" y="164" width="1" height="143" fill="#000" opacity="0.26"/><rect x="204.2" y="164" width="1" height="143" fill="#000" opacity="0.27"/><rect x="146.1" y="164" width="1" height="143" fill="#000" opacity="0.17"/><rect x="546.4" y="164" width="1" height="143" fill="#000" opacity="0.22"/><rect x="77.4" y="164" width="1" height="143" fill="#000" opacity="0.30"/><rect x="147.6" y="164" width="1" height="143" fill="#000" opacity="0.14"/><rect x="495.6" y="164" width="1" height="143" fill="#000" opacity="0.15"/><rect x="199.3" y="164" width="1" height="143" fill="#000" opacity="0.10"/><rect x="71.1" y="164" width="1" height="143" fill="#000" opacity="0.21"/><rect x="166.2" y="164" width="1" height="143" fill="#000" opacity="0.21"/><rect x="246.2" y="164" width="1" height="143" fill="#000" opacity="0.18"/><rect x="611.6" y="164" width="1" height="143" fill="#000" opacity="0.19"/><rect x="372.4" y="164" width="1" height="143" fill="#000" opacity="0.27"/><rect x="128.7" y="164" width="1" height="143" fill="#000" opacity="0.11"/><rect x="580.0" y="164" width="1" height="143" fill="#000" opacity="0.26"/><rect x="170.2" y="164" width="1" height="143" fill="#000" opacity="0.12"/><rect x="474.9" y="164" width="1" height="143" fill="#000" opacity="0.29"/><rect x="137.3" y="164" width="1" height="143" fill="#000" opacity="0.29"/><rect x="563.7" y="164" width="1" height="143" fill="#000" opacity="0.21"/><rect x="277.1" y="164" width="1" height="143" fill="#000" opacity="0.10"/><rect x="39.1" y="164" width="1" height="143" fill="#000" opacity="0.29"/><rect x="163.3" y="164" width="1" height="143" fill="#000" opacity="0.24"/><rect x="174.8" y="164" width="1" height="143" fill="#000" opacity="0.26"/><rect x="386.0" y="164" width="1" height="143" fill="#000" opacity="0.14"/><rect x="124.1" y="164" width="1" height="143" fill="#000" opacity="0.24"/><rect x="57.8" y="164" width="1" height="143" fill="#000" opacity="0.13"/><rect x="362.9" y="164" width="1" height="143" fill="#000" opacity="0.27"/><rect x="397.1" y="164" width="1" height="143" fill="#000" opacity="0.14"/><rect x="585.6" y="164" width="1" height="143" fill="#000" opacity="0.12"/><rect x="25.3" y="164" width="1" height="143" fill="#000" opacity="0.14"/><rect x="292.2" y="164" width="1" height="143" fill="#000" opacity="0.09"/><rect x="124.6" y="164" width="1" height="143" fill="#000" opacity="0.16"/><rect x="370.9" y="164" width="1" height="143" fill="#000" opacity="0.11"/><rect x="240.3" y="164" width="1" height="143" fill="#000" opacity="0.28"/><rect x="624.9" y="164" width="1" height="143" fill="#000" opacity="0.22"/><rect x="444.9" y="164" width="1" height="143" fill="#000" opacity="0.21"/><rect x="102.3" y="164" width="1" height="143" fill="#000" opacity="0.09"/><rect x="26.1" y="164" width="1" height="143" fill="#000" opacity="0.28"/><rect x="451.0" y="164" width="1" height="143" fill="#000" opacity="0.29"/><rect x="28.2" y="164" width="1" height="143" fill="#000" opacity="0.22"/><rect x="315.0" y="164" width="1" height="143" fill="#000" opacity="0.24"/><rect x="213.4" y="164" width="1" height="143" fill="#000" opacity="0.30"/><rect x="61.8" y="164" width="1" height="143" fill="#000" opacity="0.20"/><rect x="473.4" y="164" width="1" height="143" fill="#000" opacity="0.28"/><rect x="473.5" y="164" width="1" height="143" fill="#000" opacity="0.23"/><rect x="508.4" y="164" width="1" height="143" fill="#000" opacity="0.28"/><rect x="233.8" y="164" width="1" height="143" fill="#000" opacity="0.23"/><rect x="575.3" y="164" width="1" height="143" fill="#000" opacity="0.27"/><rect x="274.5" y="164" width="1" height="143" fill="#000" opacity="0.25"/><rect x="552.1" y="164" width="1" height="143" fill="#000" opacity="0.21"/><rect x="403.7" y="164" width="1" height="143" fill="#000" opacity="0.16"/><rect x="377.4" y="164" width="1" height="143" fill="#000" opacity="0.21"/><rect x="64.9" y="164" width="1" height="143" fill="#000" opacity="0.22"/><rect x="632.8" y="164" width="1" height="143" fill="#000" opacity="0.27"/><rect x="467.9" y="164" width="1" height="143" fill="#000" opacity="0.17"/><rect x="472.2" y="164" width="1" height="143" fill="#000" opacity="0.21"/><rect x="289.0" y="164" width="1" height="143" fill="#000" opacity="0.26"/><rect x="67.1" y="164" width="1" height="143" fill="#000" opacity="0.25"/><rect x="33.5" y="164" width="1" height="143" fill="#000" opacity="0.21"/><rect x="314.2" y="164" width="1" height="143" fill="#000" opacity="0.13"/><rect x="449.4" y="164" width="1" height="143" fill="#000" opacity="0.19"/><rect x="397.2" y="164" width="1" height="143" fill="#000" opacity="0.28"/><rect x="174.1" y="164" width="1" height="143" fill="#000" opacity="0.08"/><rect x="202.2" y="164" width="1" height="143" fill="#000" opacity="0.23"/><rect x="141.0" y="164" width="1" height="143" fill="#000" opacity="0.12"/><rect x="578.4" y="164" width="1" height="143" fill="#000" opacity="0.23"/><rect x="289.9" y="164" width="1" height="143" fill="#000" opacity="0.28"/><rect x="218.4" y="164" width="1" height="143" fill="#000" opacity="0.23"/><rect x="138.5" y="164" width="1" height="143" fill="#000" opacity="0.17"/><rect x="516.3" y="164" width="1" height="143" fill="#000" opacity="0.28"/><rect x="562.5" y="164" width="1" height="143" fill="#000" opacity="0.16"/><rect x="377.7" y="164" width="1" height="143" fill="#000" opacity="0.15"/><rect x="99.7" y="164" width="1" height="143" fill="#000" opacity="0.19"/><rect x="535.7" y="164" width="1" height="143" fill="#000" opacity="0.27"/><rect x="457.4" y="164" width="1" height="143" fill="#000" opacity="0.29"/><rect x="187.2" y="164" width="1" height="143" fill="#000" opacity="0.12"/><rect x="295.3" y="164" width="1" height="143" fill="#000" opacity="0.14"/><rect x="148.2" y="164" width="1" height="143" fill="#000" opacity="0.17"/><rect x="404.2" y="164" width="1" height="143" fill="#000" opacity="0.19"/><rect x="211.2" y="164" width="1" height="143" fill="#000" opacity="0.26"/><rect x="625.8" y="164" width="1" height="143" fill="#000" opacity="0.18"/><rect x="61.5" y="164" width="1" height="143" fill="#000" opacity="0.09"/><rect x="557.9" y="164" width="1" height="143" fill="#000" opacity="0.09"/><rect x="455.8" y="164" width="1" height="143" fill="#000" opacity="0.21"/><rect x="207.2" y="164" width="1" height="143" fill="#000" opacity="0.25"/><rect x="26.9" y="164" width="1" height="143" fill="#000" opacity="0.11"/><rect x="297.9" y="164" width="1" height="143" fill="#000" opacity="0.09"/><rect x="531.1" y="164" width="1" height="143" fill="#000" opacity="0.13"/><rect x="102.6" y="164" width="1" height="143" fill="#000" opacity="0.09"/><rect x="406.4" y="164" width="1" height="143" fill="#000" opacity="0.18"/><rect x="406.8" y="164" width="1" height="143" fill="#000" opacity="0.22"/><rect x="517.2" y="164" width="1" height="143" fill="#000" opacity="0.29"/><rect x="440.8" y="164" width="1" height="143" fill="#000" opacity="0.12"/><rect x="310.5" y="164" width="1" height="143" fill="#000" opacity="0.12"/><rect x="21.7" y="164" width="1" height="143" fill="#000" opacity="0.18"/><rect x="459.2" y="164" width="1" height="143" fill="#000" opacity="0.12"/><rect x="184.4" y="164" width="1" height="143" fill="#000" opacity="0.16"/><rect x="448.7" y="164" width="1" height="143" fill="#000" opacity="0.19"/><rect x="397.2" y="164" width="1" height="143" fill="#000" opacity="0.25"/><rect x="259.8" y="164" width="1" height="143" fill="#000" opacity="0.25"/><rect x="578.7" y="207" width="1.5" height="100" fill="#6ae0e0" opacity="0.11"/><rect x="595.1" y="207" width="1.5" height="100" fill="#6ae0e0" opacity="0.21"/><rect x="95.8" y="207" width="1.5" height="100" fill="#6ae0e0" opacity="0.17"/><rect x="404.1" y="207" width="1.5" height="100" fill="#6ae0e0" opacity="0.24"/><rect x="249.4" y="207" width="1.5" height="100" fill="#6ae0e0" opacity="0.19"/><rect x="561.9" y="207" width="1.5" height="100" fill="#6ae0e0" opacity="0.22"/><rect x="602.3" y="207" width="1.5" height="100" fill="#6ae0e0" opacity="0.17"/><rect x="420.1" y="207" width="1.5" height="100" fill="#6ae0e0" opacity="0.13"/><rect x="464.0" y="207" width="1.5" height="100" fill="#6ae0e0" opacity="0.22"/><rect x="414.1" y="207" width="1.5" height="100" fill="#6ae0e0" opacity="0.21"/><rect x="147.7" y="207" width="1.5" height="100" fill="#6ae0e0" opacity="0.23"/><rect x="624.9" y="207" width="1.5" height="100" fill="#6ae0e0" opacity="0.25"/><rect x="349.0" y="207" width="1.5" height="100" fill="#6ae0e0" opacity="0.22"/><rect x="214.3" y="207" width="1.5" height="100" fill="#6ae0e0" opacity="0.24"/><rect x="547.3" y="207" width="1.5" height="100" fill="#6ae0e0" opacity="0.15"/><rect x="66.5" y="207" width="1.5" height="100" fill="#6ae0e0" opacity="0.17"/><rect x="357.3" y="207" width="1.5" height="100" fill="#6ae0e0" opacity="0.22"/><rect x="318.2" y="207" width="1.5" height="100" fill="#6ae0e0" opacity="0.10"/><rect x="518.3" y="207" width="1.5" height="100" fill="#6ae0e0" opacity="0.11"/><rect x="512.5" y="207" width="1.5" height="100" fill="#6ae0e0" opacity="0.13"/><rect x="223.4" y="207" width="1.5" height="100" fill="#6ae0e0" opacity="0.22"/><rect x="102.4" y="207" width="1.5" height="100" fill="#6ae0e0" opacity="0.12"/><rect x="336.3" y="207" width="1.5" height="100" fill="#6ae0e0" opacity="0.21"/><rect x="537.5" y="207" width="1.5" height="100" fill="#6ae0e0" opacity="0.20"/><rect x="603.3" y="207" width="1.5" height="100" fill="#6ae0e0" opacity="0.17"/><rect x="605.4" y="207" width="1.5" height="100" fill="#6ae0e0" opacity="0.11"/><rect x="152.7" y="207" width="1.5" height="100" fill="#6ae0e0" opacity="0.18"/><rect x="195.5" y="207" width="1.5" height="100" fill="#6ae0e0" opacity="0.21"/><rect x="412.4" y="207" width="1.5" height="100" fill="#6ae0e0" opacity="0.18"/><rect x="539.7" y="207" width="1.5" height="100" fill="#6ae0e0" opacity="0.18"/><rect x="208.9" y="207" width="1.5" height="100" fill="#6ae0e0" opacity="0.16"/><rect x="540.8" y="207" width="1.5" height="100" fill="#6ae0e0" opacity="0.24"/><rect x="144.5" y="207" width="1.5" height="100" fill="#6ae0e0" opacity="0.23"/><rect x="617.4" y="207" width="1.5" height="100" fill="#6ae0e0" opacity="0.18"/><rect x="371.4" y="207" width="1.5" height="100" fill="#6ae0e0" opacity="0.13"/><rect x="348.3" y="207" width="1.5" height="100" fill="#6ae0e0" opacity="0.18"/><rect x="391.5" y="207" width="1.5" height="100" fill="#6ae0e0" opacity="0.10"/><rect x="618.0" y="207" width="1.5" height="100" fill="#6ae0e0" opacity="0.18"/><rect x="264.2" y="207" width="1.5" height="100" fill="#6ae0e0" opacity="0.22"/><rect x="365.1" y="207" width="1.5" height="100" fill="#6ae0e0" opacity="0.17"/><rect x="444.8" y="207" width="1.5" height="100" fill="#6ae0e0" opacity="0.11"/><rect x="350.1" y="207" width="1.5" height="100" fill="#6ae0e0" opacity="0.16"/><rect x="610.2" y="207" width="1.5" height="100" fill="#6ae0e0" opacity="0.24"/><rect x="182.5" y="207" width="1.5" height="100" fill="#6ae0e0" opacity="0.17"/><rect x="94.0" y="207" width="1.5" height="100" fill="#6ae0e0" opacity="0.17"/><rect x="522.4" y="207" width="1.5" height="100" fill="#6ae0e0" opacity="0.24"/><rect x="311.4" y="207" width="1.5" height="100" fill="#6ae0e0" opacity="0.15"/><rect x="134.1" y="207" width="1.5" height="100" fill="#6ae0e0" opacity="0.19"/><rect x="590.5" y="207" width="1.5" height="100" fill="#6ae0e0" opacity="0.12"/><rect x="499.7" y="207" width="1.5" height="100" fill="#6ae0e0" opacity="0.10"/><rect x="135.7" y="207" width="1.5" height="100" fill="#6ae0e0" opacity="0.13"/><rect x="442.3" y="207" width="1.5" height="100" fill="#6ae0e0" opacity="0.15"/><rect x="236.0" y="207" width="1.5" height="100" fill="#6ae0e0" opacity="0.19"/><rect x="80.2" y="207" width="1.5" height="100" fill="#6ae0e0" opacity="0.21"/><rect x="91.4" y="207" width="1.5" height="100" fill="#6ae0e0" opacity="0.18"/><rect x="170.8" y="207" width="1.5" height="100" fill="#6ae0e0" opacity="0.13"/><rect x="344.9" y="207" width="1.5" height="100" fill="#6ae0e0" opacity="0.17"/><rect x="248.7" y="207" width="1.5" height="100" fill="#6ae0e0" opacity="0.16"/><rect x="344.3" y="207" width="1.5" height="100" fill="#6ae0e0" opacity="0.12"/><rect x="142.1" y="207" width="1.5" height="100" fill="#6ae0e0" opacity="0.19"/><rect x="412.1" y="207" width="1.5" height="100" fill="#6ae0e0" opacity="0.18"/><rect x="544.5" y="207" width="1.5" height="100" fill="#6ae0e0" opacity="0.19"/><rect x="547.9" y="207" width="1.5" height="100" fill="#6ae0e0" opacity="0.13"/><rect x="475.8" y="207" width="1.5" height="100" fill="#6ae0e0" opacity="0.22"/><rect x="576.5" y="207" width="1.5" height="100" fill="#6ae0e0" opacity="0.15"/><rect x="210.9" y="207" width="1.5" height="100" fill="#6ae0e0" opacity="0.24"/><rect x="150.7" y="207" width="1.5" height="100" fill="#6ae0e0" opacity="0.25"/><rect x="567.1" y="207" width="1.5" height="100" fill="#6ae0e0" opacity="0.12"/><rect x="163.9" y="207" width="1.5" height="100" fill="#6ae0e0" opacity="0.21"/><rect x="176.4" y="207" width="1.5" height="100" fill="#6ae0e0" opacity="0.11"/><rect x="532.6" y="207" width="1.5" height="100" fill="#6ae0e0" opacity="0.16"/><rect x="506.3" y="207" width="1.5" height="100" fill="#6ae0e0" opacity="0.12"/><rect x="265.5" y="207" width="1.5" height="100" fill="#6ae0e0" opacity="0.20"/><rect x="26.0" y="207" width="1.5" height="100" fill="#6ae0e0" opacity="0.13"/><rect x="439.4" y="207" width="1.5" height="100" fill="#6ae0e0" opacity="0.24"/><rect x="617.3" y="207" width="1.5" height="100" fill="#6ae0e0" opacity="0.12"/><rect x="329.5" y="207" width="1.5" height="100" fill="#6ae0e0" opacity="0.21"/><rect x="327.7" y="207" width="1.5" height="100" fill="#6ae0e0" opacity="0.20"/><rect x="132.6" y="207" width="1.5" height="100" fill="#6ae0e0" opacity="0.11"/><rect x="81.0" y="207" width="1.5" height="100" fill="#6ae0e0" opacity="0.11"/><rect x="358.1" y="162" width="1.2" height="10" fill="#fff080" opacity="0.25"/><rect x="368.8" y="162" width="1.2" height="10" fill="#fff080" opacity="0.18"/><rect x="129.8" y="162" width="1.2" height="10" fill="#fff080" opacity="0.19"/><rect x="537.6" y="162" width="1.2" height="10" fill="#fff080" opacity="0.35"/><rect x="591.5" y="162" width="1.2" height="10" fill="#fff080" opacity="0.17"/><rect x="53.5" y="162" width="1.2" height="10" fill="#fff080" opacity="0.34"/><rect x="302.4" y="162" width="1.2" height="10" fill="#fff080" opacity="0.30"/><rect x="218.3" y="162" width="1.2" height="10" fill="#fff080" opacity="0.24"/><rect x="335.5" y="162" width="1.2" height="10" fill="#fff080" opacity="0.24"/><rect x="388.8" y="162" width="1.2" height="10" fill="#fff080" opacity="0.15"/><rect x="451.0" y="162" width="1.2" height="10" fill="#fff080" opacity="0.32"/><rect x="127.7" y="162" width="1.2" height="10" fill="#fff080" opacity="0.24"/><rect x="474.9" y="162" width="1.2" height="10" fill="#fff080" opacity="0.23"/><rect x="136.4" y="162" width="1.2" height="10" fill="#fff080" opacity="0.18"/><rect x="333.8" y="162" width="1.2" height="10" fill="#fff080" opacity="0.15"/><rect x="570.6" y="162" width="1.2" height="10" fill="#fff080" opacity="0.31"/><rect x="453.3" y="162" width="1.2" height="10" fill="#fff080" opacity="0.32"/><rect x="406.5" y="162" width="1.2" height="10" fill="#fff080" opacity="0.23"/><rect x="388.0" y="162" width="1.2" height="10" fill="#fff080" opacity="0.25"/><rect x="626.2" y="162" width="1.2" height="10" fill="#fff080" opacity="0.31"/><rect x="175.6" y="162" width="1.2" height="10" fill="#fff080" opacity="0.33"/><rect x="478.0" y="162" width="1.2" height="10" fill="#fff080" opacity="0.31"/><rect x="521.7" y="162" width="1.2" height="10" fill="#fff080" opacity="0.23"/><rect x="572.7" y="162" width="1.2" height="10" fill="#fff080" opacity="0.33"/><rect x="447.2" y="162" width="1.2" height="10" fill="#fff080" opacity="0.30"/><rect x="491.0" y="162" width="1.2" height="10" fill="#fff080" opacity="0.23"/><rect x="464.5" y="162" width="1.2" height="10" fill="#fff080" opacity="0.16"/><rect x="227.5" y="162" width="1.2" height="10" fill="#fff080" opacity="0.24"/><rect x="21.6" y="162" width="1.2" height="10" fill="#fff080" opacity="0.22"/><rect x="412.3" y="162" width="1.2" height="10" fill="#fff080" opacity="0.27"/><rect x="159.4" y="162" width="1.2" height="10" fill="#fff080" opacity="0.34"/><rect x="429.3" y="162" width="1.2" height="10" fill="#fff080" opacity="0.22"/><rect x="425.4" y="162" width="1.2" height="10" fill="#fff080" opacity="0.26"/><rect x="346.6" y="162" width="1.2" height="10" fill="#fff080" opacity="0.23"/><rect x="636.9" y="162" width="1.2" height="10" fill="#fff080" opacity="0.28"/><rect x="451.2" y="162" width="1.2" height="10" fill="#fff080" opacity="0.30"/><rect x="624.6" y="162" width="1.2" height="10" fill="#fff080" opacity="0.15"/><rect x="397.8" y="162" width="1.2" height="10" fill="#fff080" opacity="0.30"/><rect x="174.6" y="162" width="1.2" height="10" fill="#fff080" opacity="0.23"/><rect x="46.4" y="162" width="1.2" height="10" fill="#fff080" opacity="0.19"/><rect x="248.7" y="162" width="1.2" height="10" fill="#fff080" opacity="0.17"/><rect x="171.1" y="162" width="1.2" height="10" fill="#fff080" opacity="0.33"/><rect x="357.1" y="162" width="1.2" height="10" fill="#fff080" opacity="0.25"/><rect x="616.6" y="162" width="1.2" height="10" fill="#fff080" opacity="0.26"/><rect x="634.0" y="162" width="1.2" height="10" fill="#fff080" opacity="0.28"/><rect x="518.5" y="162" width="1.2" height="10" fill="#fff080" opacity="0.17"/><rect x="386.7" y="162" width="1.2" height="10" fill="#fff080" opacity="0.30"/><rect x="43.1" y="162" width="1.2" height="10" fill="#fff080" opacity="0.34"/><rect x="114.5" y="162" width="1.2" height="10" fill="#fff080" opacity="0.24"/><rect x="120.2" y="162" width="1.2" height="10" fill="#fff080" opacity="0.25"/><rect x="395.1" y="162" width="1.2" height="10" fill="#fff080" opacity="0.16"/><rect x="603.0" y="162" width="1.2" height="10" fill="#fff080" opacity="0.23"/><rect x="342.6" y="162" width="1.2" height="10" fill="#fff080" opacity="0.27"/><rect x="242.4" y="162" width="1.2" height="10" fill="#fff080" opacity="0.21"/><rect x="422.5" y="162" width="1.2" height="10" fill="#fff080" opacity="0.26"/><rect x="191.4" y="162" width="1.2" height="10" fill="#fff080" opacity="0.29"/><rect x="199.1" y="162" width="1.2" height="10" fill="#fff080" opacity="0.15"/><rect x="167.4" y="162" width="1.2" height="10" fill="#fff080" opacity="0.16"/><rect x="112.4" y="162" width="1.2" height="10" fill="#fff080" opacity="0.30"/><rect x="257.6" y="162" width="1.2" height="10" fill="#fff080" opacity="0.33"/><rect x="35.0" y="171" width="2.6" height="136" fill="#000"/><rect x="39.4" y="166" width="1" height="141" fill="#000" opacity="0.68"/><rect x="41.3" y="166" width="1" height="141" fill="#000" opacity="0.67"/><rect x="44.2" y="166" width="1" height="141" fill="#000" opacity="0.52"/><rect x="56.6" y="171" width="2.6" height="136" fill="#000"/><rect x="61.0" y="166" width="1" height="141" fill="#000" opacity="0.63"/><rect x="78.3" y="171" width="2.6" height="136" fill="#000"/><rect x="82.9" y="166" width="1" height="141" fill="#000" opacity="0.44"/><rect x="85.7" y="166" width="1" height="141" fill="#000" opacity="0.37"/><rect x="87.7" y="166" width="1" height="141" fill="#000" opacity="0.39"/><rect x="99.9" y="171" width="2.6" height="136" fill="#000"/><rect x="121.5" y="171" width="2.6" height="136" fill="#000"/><rect x="126.1" y="166" width="1" height="141" fill="#000" opacity="0.58"/><rect x="143.2" y="171" width="2.6" height="136" fill="#000"/><rect x="149.2" y="166" width="1" height="141" fill="#000" opacity="0.59"/><rect x="151.5" y="166" width="1" height="141" fill="#000" opacity="0.61"/><rect x="155.0" y="166" width="1" height="141" fill="#000" opacity="0.40"/><rect x="164.8" y="171" width="2.6" height="136" fill="#000"/><rect x="171.2" y="166" width="1" height="141" fill="#000" opacity="0.39"/><rect x="174.2" y="166" width="1" height="141" fill="#000" opacity="0.62"/><rect x="186.4" y="171" width="2.6" height="136" fill="#000"/><rect x="193.1" y="166" width="1" height="141" fill="#000" opacity="0.56"/><rect x="196.0" y="166" width="1" height="141" fill="#000" opacity="0.59"/><rect x="197.3" y="166" width="1" height="141" fill="#000" opacity="0.45"/><rect x="199.6" y="166" width="1" height="141" fill="#000" opacity="0.68"/><rect x="208.0" y="171" width="2.6" height="136" fill="#000"/><rect x="215.2" y="166" width="1" height="141" fill="#000" opacity="0.66"/><rect x="217.0" y="166" width="1" height="141" fill="#000" opacity="0.37"/><rect x="219.5" y="166" width="1" height="141" fill="#000" opacity="0.50"/><rect x="223.2" y="166" width="1" height="141" fill="#000" opacity="0.39"/><rect x="229.7" y="171" width="2.6" height="136" fill="#000"/><rect x="234.7" y="166" width="1" height="141" fill="#000" opacity="0.67"/><rect x="236.7" y="166" width="1" height="141" fill="#000" opacity="0.43"/><rect x="241.1" y="166" width="1" height="141" fill="#000" opacity="0.52"/><rect x="241.6" y="166" width="1" height="141" fill="#000" opacity="0.47"/><rect x="251.3" y="171" width="2.6" height="136" fill="#000"/><rect x="257.7" y="166" width="1" height="141" fill="#000" opacity="0.38"/><rect x="259.7" y="166" width="1" height="141" fill="#000" opacity="0.63"/><rect x="263.1" y="166" width="1" height="141" fill="#000" opacity="0.62"/><rect x="272.9" y="171" width="2.6" height="136" fill="#000"/><rect x="278.5" y="166" width="1" height="141" fill="#000" opacity="0.49"/><rect x="294.6" y="171" width="2.6" height="136" fill="#000"/><rect x="299.9" y="166" width="1" height="141" fill="#000" opacity="0.70"/><rect x="316.2" y="171" width="2.6" height="136" fill="#000"/><rect x="321.3" y="166" width="1" height="141" fill="#000" opacity="0.64"/><rect x="323.3" y="166" width="1" height="141" fill="#000" opacity="0.58"/><rect x="337.8" y="171" width="2.6" height="136" fill="#000"/><rect x="342.3" y="166" width="1" height="141" fill="#000" opacity="0.38"/><rect x="344.2" y="166" width="1" height="141" fill="#000" opacity="0.55"/><rect x="347.3" y="166" width="1" height="141" fill="#000" opacity="0.59"/><rect x="349.0" y="166" width="1" height="141" fill="#000" opacity="0.62"/><rect x="359.4" y="171" width="2.6" height="136" fill="#000"/><rect x="381.1" y="171" width="2.6" height="136" fill="#000"/><rect x="385.5" y="166" width="1" height="141" fill="#000" opacity="0.60"/><rect x="388.3" y="166" width="1" height="141" fill="#000" opacity="0.45"/><rect x="389.5" y="166" width="1" height="141" fill="#000" opacity="0.48"/><rect x="394.0" y="166" width="1" height="141" fill="#000" opacity="0.48"/><rect x="402.7" y="171" width="2.6" height="136" fill="#000"/><rect x="424.3" y="171" width="2.6" height="136" fill="#000"/><rect x="430.2" y="166" width="1" height="141" fill="#000" opacity="0.68"/><rect x="433.3" y="166" width="1" height="141" fill="#000" opacity="0.50"/><rect x="436.1" y="166" width="1" height="141" fill="#000" opacity="0.46"/><rect x="446.0" y="171" width="2.6" height="136" fill="#000"/><rect x="450.8" y="166" width="1" height="141" fill="#000" opacity="0.61"/><rect x="453.4" y="166" width="1" height="141" fill="#000" opacity="0.38"/><rect x="467.6" y="171" width="2.6" height="136" fill="#000"/><rect x="471.9" y="166" width="1" height="141" fill="#000" opacity="0.55"/><rect x="474.8" y="166" width="1" height="141" fill="#000" opacity="0.61"/><rect x="489.2" y="171" width="2.6" height="136" fill="#000"/><rect x="495.8" y="166" width="1" height="141" fill="#000" opacity="0.64"/><rect x="498.4" y="166" width="1" height="141" fill="#000" opacity="0.41"/><rect x="510.9" y="171" width="2.6" height="136" fill="#000"/><rect x="517.7" y="166" width="1" height="141" fill="#000" opacity="0.36"/><rect x="520.2" y="166" width="1" height="141" fill="#000" opacity="0.54"/><rect x="522.9" y="166" width="1" height="141" fill="#000" opacity="0.69"/><rect x="532.5" y="171" width="2.6" height="136" fill="#000"/><rect x="536.9" y="166" width="1" height="141" fill="#000" opacity="0.63"/><rect x="538.8" y="166" width="1" height="141" fill="#000" opacity="0.38"/><rect x="542.5" y="166" width="1" height="141" fill="#000" opacity="0.66"/><rect x="554.1" y="171" width="2.6" height="136" fill="#000"/><rect x="575.8" y="171" width="2.6" height="136" fill="#000"/><rect x="580.2" y="166" width="1" height="141" fill="#000" opacity="0.50"/><rect x="597.4" y="171" width="2.6" height="136" fill="#000"/><rect x="603.0" y="166" width="1" height="141" fill="#000" opacity="0.47"/><rect x="619.0" y="171" width="2.6" height="136" fill="#000"/><rect x="624.4" y="166" width="1" height="141" fill="#000" opacity="0.69"/><rect x="627.1" y="166" width="1" height="141" fill="#000" opacity="0.52"/><rect x="629.5" y="166" width="1" height="141" fill="#000" opacity="0.60"/><rect x="455.5" y="313" width="1" height="5.7" fill="#20a0a8" opacity="0.46"/><rect x="528.9" y="313" width="1" height="4.7" fill="#20a0a8" opacity="0.64"/><rect x="516.3" y="313" width="1" height="5.3" fill="#20a0a8" opacity="0.66"/><rect x="610.7" y="313" width="1" height="4.6" fill="#20a0a8" opacity="0.51"/><rect x="456.7" y="313" width="1" height="5.2" fill="#20a0a8" opacity="0.47"/><rect x="276.5" y="313" width="1" height="2.6" fill="#20a0a8" opacity="0.60"/><rect x="631.4" y="313" width="1" height="3.5" fill="#20a0a8" opacity="0.37"/><rect x="142.1" y="313" width="1" height="3.7" fill="#20a0a8" opacity="0.42"/><rect x="618.2" y="313" width="1" height="2.2" fill="#20a0a8" opacity="0.42"/><rect x="86.4" y="313" width="1" height="4.6" fill="#20a0a8" opacity="0.61"/><rect x="126.6" y="313" width="1" height="2.2" fill="#20a0a8" opacity="0.48"/><rect x="378.3" y="313" width="1" height="5.6" fill="#20a0a8" opacity="0.31"/><rect x="82.6" y="313" width="1" height="2.7" fill="#20a0a8" opacity="0.39"/><rect x="161.4" y="313" width="1" height="4.9" fill="#20a0a8" opacity="0.54"/><rect x="154.3" y="313" width="1" height="2.7" fill="#20a0a8" opacity="0.41"/><rect x="122.3" y="313" width="1" height="5.0" fill="#20a0a8" opacity="0.42"/><rect x="356.0" y="313" width="1" height="5.3" fill="#20a0a8" opacity="0.49"/><rect x="177.0" y="313" width="1" height="5.5" fill="#20a0a8" opacity="0.67"/><rect x="227.8" y="313" width="1" height="4.2" fill="#20a0a8" opacity="0.68"/><rect x="315.2" y="313" width="1" height="2.9" fill="#20a0a8" opacity="0.32"/><rect x="604.4" y="313" width="1" height="5.2" fill="#20a0a8" opacity="0.45"/><rect x="343.2" y="313" width="1" height="4.1" fill="#20a0a8" opacity="0.41"/><rect x="630.9" y="313" width="1" height="4.6" fill="#20a0a8" opacity="0.40"/><rect x="21.8" y="313" width="1" height="3.9" fill="#20a0a8" opacity="0.45"/><rect x="510.6" y="313" width="1" height="4.9" fill="#20a0a8" opacity="0.54"/><rect x="112.8" y="313" width="1" height="2.6" fill="#20a0a8" opacity="0.43"/><rect x="176.4" y="313" width="1" height="5.5" fill="#20a0a8" opacity="0.51"/><rect x="411.2" y="313" width="1" height="6.0" fill="#20a0a8" opacity="0.41"/><rect x="347.5" y="313" width="1" height="2.6" fill="#20a0a8" opacity="0.61"/><rect x="15.8" y="313" width="1" height="5.3" fill="#20a0a8" opacity="0.64"/><rect x="526.3" y="313" width="1" height="2.3" fill="#20a0a8" opacity="0.41"/><rect x="460.7" y="313" width="1" height="2.4" fill="#20a0a8" opacity="0.49"/><rect x="306.5" y="313" width="1" height="5.8" fill="#20a0a8" opacity="0.53"/><rect x="548.3" y="313" width="1" height="3.2" fill="#20a0a8" opacity="0.62"/><rect x="274.4" y="313" width="1" height="5.7" fill="#20a0a8" opacity="0.34"/><rect x="529.0" y="313" width="1" height="2.8" fill="#20a0a8" opacity="0.52"/><rect x="342.0" y="313" width="1" height="2.6" fill="#20a0a8" opacity="0.63"/><rect x="208.7" y="313" width="1" height="3.2" fill="#20a0a8" opacity="0.33"/><rect x="205.1" y="313" width="1" height="3.9" fill="#20a0a8" opacity="0.59"/><rect x="238.7" y="313" width="1" height="4.7" fill="#20a0a8" opacity="0.34"/><rect x="260.2" y="313" width="1" height="3.8" fill="#20a0a8" opacity="0.69"/><rect x="531.1" y="313" width="1" height="4.6" fill="#20a0a8" opacity="0.30"/><rect x="249.6" y="313" width="1" height="4.8" fill="#20a0a8" opacity="0.39"/><rect x="365.9" y="313" width="1" height="3.8" fill="#20a0a8" opacity="0.30"/><rect x="631.8" y="313" width="1" height="5.2" fill="#20a0a8" opacity="0.38"/><rect x="398.2" y="313" width="1" height="3.2" fill="#20a0a8" opacity="0.45"/><rect x="350.7" y="313" width="1" height="3.2" fill="#20a0a8" opacity="0.43"/><rect x="258.9" y="313" width="1" height="4.7" fill="#20a0a8" opacity="0.40"/><rect x="139.4" y="313" width="1" height="4.9" fill="#20a0a8" opacity="0.43"/><rect x="602.8" y="313" width="1" height="4.3" fill="#20a0a8" opacity="0.59"/><rect x="221.3" y="313" width="1" height="5.3" fill="#20a0a8" opacity="0.34"/><rect x="102.6" y="313" width="1" height="2.4" fill="#20a0a8" opacity="0.57"/><rect x="455.6" y="313" width="1" height="2.7" fill="#20a0a8" opacity="0.46"/><rect x="535.6" y="313" width="1" height="4.4" fill="#20a0a8" opacity="0.34"/><rect x="155.9" y="313" width="1" height="2.6" fill="#20a0a8" opacity="0.35"/><rect x="268.1" y="313" width="1" height="2.3" fill="#20a0a8" opacity="0.67"/><rect x="280.6" y="313" width="1" height="4.0" fill="#20a0a8" opacity="0.56"/><rect x="492.0" y="313" width="1" height="5.3" fill="#20a0a8" opacity="0.45"/><rect x="221.1" y="313" width="1" height="3.6" fill="#20a0a8" opacity="0.31"/><rect x="264.2" y="313" width="1" height="4.8" fill="#20a0a8" opacity="0.69"/><rect x="506.2" y="313" width="1" height="4.6" fill="#20a0a8" opacity="0.54"/><rect x="26.5" y="313" width="1" height="3.3" fill="#20a0a8" opacity="0.44"/><rect x="419.7" y="313" width="1" height="2.4" fill="#20a0a8" opacity="0.45"/><rect x="331.8" y="313" width="1" height="5.2" fill="#20a0a8" opacity="0.63"/><rect x="395.3" y="313" width="1" height="2.6" fill="#20a0a8" opacity="0.61"/><rect x="576.7" y="313" width="1" height="4.2" fill="#20a0a8" opacity="0.44"/><rect x="326.3" y="313" width="1" height="2.6" fill="#20a0a8" opacity="0.59"/><rect x="628.8" y="313" width="1" height="4.1" fill="#20a0a8" opacity="0.59"/><rect x="534.7" y="313" width="1" height="2.8" fill="#20a0a8" opacity="0.68"/><rect x="405.1" y="313" width="1" height="2.8" fill="#20a0a8" opacity="0.33"/><rect x="167.1" y="313" width="1" height="4.3" fill="#20a0a8" opacity="0.58"/><rect x="219.8" y="313" width="1" height="5.7" fill="#20a0a8" opacity="0.44"/><rect x="303.0" y="313" width="1" height="2.5" fill="#20a0a8" opacity="0.69"/><rect x="99.3" y="313" width="1" height="5.6" fill="#20a0a8" opacity="0.52"/><rect x="363.8" y="313" width="1" height="4.2" fill="#20a0a8" opacity="0.41"/><rect x="580.6" y="313" width="1" height="6.0" fill="#20a0a8" opacity="0.63"/><rect x="389.1" y="313" width="1" height="2.5" fill="#20a0a8" opacity="0.63"/><rect x="194.5" y="313" width="1" height="5.6" fill="#20a0a8" opacity="0.40"/><rect x="371.8" y="313" width="1" height="5.3" fill="#20a0a8" opacity="0.37"/><rect x="355.8" y="313" width="1" height="2.3" fill="#20a0a8" opacity="0.31"/><rect x="127.0" y="313" width="1" height="5.9" fill="#20a0a8" opacity="0.68"/><rect x="424.5" y="313" width="1" height="3.2" fill="#20a0a8" opacity="0.57"/><rect x="473.8" y="313" width="1" height="3.5" fill="#20a0a8" opacity="0.54"/><rect x="515.0" y="313" width="1" height="2.1" fill="#20a0a8" opacity="0.38"/><rect x="306.1" y="313" width="1" height="2.6" fill="#20a0a8" opacity="0.45"/><rect x="369.2" y="313" width="1" height="2.7" fill="#20a0a8" opacity="0.51"/><rect x="179.0" y="313" width="1" height="4.3" fill="#20a0a8" opacity="0.43"/><rect x="414.1" y="313" width="1" height="2.2" fill="#20a0a8" opacity="0.57"/><rect x="105.0" y="313" width="1" height="5.8" fill="#20a0a8" opacity="0.54"/><rect x="307.3" y="313" width="1" height="3.6" fill="#20a0a8" opacity="0.55"/><rect x="443.8" y="313" width="1" height="5.0" fill="#20a0a8" opacity="0.60"/><rect x="317.2" y="313" width="1" height="6.0" fill="#20a0a8" opacity="0.64"/><rect x="546.8" y="313" width="1" height="3.6" fill="#20a0a8" opacity="0.47"/><rect x="367.0" y="313" width="1" height="5.6" fill="#20a0a8" opacity="0.51"/><rect x="341.6" y="313" width="1" height="3.7" fill="#20a0a8" opacity="0.66"/><rect x="214.5" y="313" width="1" height="2.2" fill="#20a0a8" opacity="0.59"/><rect x="574.9" y="313" width="1" height="4.9" fill="#20a0a8" opacity="0.54"/><rect x="482.7" y="313" width="1" height="3.2" fill="#20a0a8" opacity="0.54"/><rect x="58.4" y="313" width="1" height="2.5" fill="#20a0a8" opacity="0.48"/><rect x="327.6" y="313" width="1" height="3.6" fill="#20a0a8" opacity="0.32"/><rect x="447.2" y="313" width="1" height="4.1" fill="#20a0a8" opacity="0.40"/><rect x="205.5" y="313" width="1" height="3.6" fill="#20a0a8" opacity="0.39"/><rect x="57.6" y="313" width="1" height="5.6" fill="#20a0a8" opacity="0.69"/><rect x="429.1" y="313" width="1" height="5.5" fill="#20a0a8" opacity="0.47"/><rect x="515.9" y="313" width="1" height="2.9" fill="#20a0a8" opacity="0.60"/><rect x="367.6" y="313" width="1" height="5.6" fill="#20a0a8" opacity="0.34"/><rect x="507.8" y="313" width="1" height="2.5" fill="#20a0a8" opacity="0.52"/><rect x="606.5" y="313" width="1" height="2.0" fill="#20a0a8" opacity="0.40"/><rect x="201.1" y="313" width="1" height="3.3" fill="#20a0a8" opacity="0.33"/><rect x="571.8" y="313" width="1" height="5.3" fill="#20a0a8" opacity="0.46"/><rect x="236.7" y="313" width="1" height="4.3" fill="#20a0a8" opacity="0.32"/><rect x="34.4" y="313" width="1" height="5.6" fill="#20a0a8" opacity="0.42"/><rect x="325.0" y="313" width="1" height="5.7" fill="#20a0a8" opacity="0.69"/><rect x="309.0" y="313" width="1" height="2.8" fill="#20a0a8" opacity="0.42"/><rect x="588.9" y="313" width="1" height="5.6" fill="#20a0a8" opacity="0.38"/><rect x="536.2" y="313" width="1" height="3.4" fill="#20a0a8" opacity="0.49"/><rect x="121.9" y="313" width="1" height="5.5" fill="#20a0a8" opacity="0.70"/><rect x="140.7" y="313" width="1" height="4.5" fill="#20a0a8" opacity="0.38"/><rect x="562.5" y="313" width="1" height="2.2" fill="#20a0a8" opacity="0.34"/><rect x="466.4" y="313" width="1" height="3.3" fill="#20a0a8" opacity="0.66"/><rect x="555.9" y="313" width="1" height="4.9" fill="#20a0a8" opacity="0.35"/><rect x="447.9" y="313" width="1" height="5.8" fill="#20a0a8" opacity="0.48"/><rect x="64.1" y="313" width="1" height="2.9" fill="#20a0a8" opacity="0.42"/><rect x="457.0" y="313" width="1" height="2.8" fill="#20a0a8" opacity="0.37"/><rect x="161.4" y="313" width="1" height="4.7" fill="#20a0a8" opacity="0.62"/><rect x="246.7" y="313" width="1" height="4.6" fill="#20a0a8" opacity="0.65"/><rect x="381.9" y="313" width="1" height="2.9" fill="#20a0a8" opacity="0.42"/><rect x="591.4" y="313" width="1" height="4.7" fill="#20a0a8" opacity="0.41"/><rect x="413.0" y="313" width="1" height="2.4" fill="#20a0a8" opacity="0.69"/><rect x="288.9" y="313" width="1" height="4.1" fill="#20a0a8" opacity="0.51"/><rect x="43.2" y="313" width="1" height="4.4" fill="#20a0a8" opacity="0.41"/><rect x="171.1" y="313" width="1" height="5.2" fill="#20a0a8" opacity="0.33"/><rect x="192.4" y="313" width="1" height="5.0" fill="#20a0a8" opacity="0.40"/><rect x="188.6" y="313" width="1" height="4.2" fill="#20a0a8" opacity="0.37"/><rect x="573.0" y="313" width="1" height="6.0" fill="#20a0a8" opacity="0.31"/><rect x="302.1" y="313" width="1" height="5.0" fill="#20a0a8" opacity="0.45"/><rect x="593.0" y="313" width="1" height="4.0" fill="#20a0a8" opacity="0.37"/><rect x="360.8" y="313" width="1" height="4.6" fill="#20a0a8" opacity="0.44"/><rect x="424.4" y="313" width="1" height="5.1" fill="#20a0a8" opacity="0.51"/><rect x="329.5" y="313" width="1" height="5.4" fill="#20a0a8" opacity="0.57"/><rect x="338.8" y="313" width="1" height="5.8" fill="#20a0a8" opacity="0.37"/><rect x="499.9" y="313" width="1" height="2.7" fill="#20a0a8" opacity="0.54"/><rect x="161.4" y="313" width="1" height="3.8" fill="#20a0a8" opacity="0.61"/><rect x="504.2" y="313" width="1" height="5.2" fill="#20a0a8" opacity="0.39"/><rect x="319.2" y="313" width="1" height="2.9" fill="#20a0a8" opacity="0.53"/><rect x="325.4" y="313" width="1" height="2.1" fill="#20a0a8" opacity="0.54"/><rect x="459.6" y="313" width="1" height="4.3" fill="#20a0a8" opacity="0.65"/><rect x="127.0" y="313" width="1" height="2.6" fill="#20a0a8" opacity="0.31"/><rect x="323.6" y="313" width="1" height="3.7" fill="#20a0a8" opacity="0.48"/><rect x="178.6" y="313" width="1" height="5.2" fill="#20a0a8" opacity="0.33"/><rect x="579.3" y="313" width="1" height="4.3" fill="#20a0a8" opacity="0.52"/><rect x="507.4" y="313" width="1" height="3.0" fill="#20a0a8" opacity="0.36"/><rect x="208.4" y="313" width="1" height="2.2" fill="#20a0a8" opacity="0.43"/><rect x="401.4" y="313" width="1" height="4.1" fill="#20a0a8" opacity="0.41"/><rect x="381.2" y="313" width="1" height="2.4" fill="#20a0a8" opacity="0.63"/><rect x="121.7" y="313" width="1" height="3.0" fill="#20a0a8" opacity="0.36"/><rect x="444.6" y="313" width="1" height="5.3" fill="#20a0a8" opacity="0.61"/><rect x="53.0" y="313" width="1" height="3.6" fill="#20a0a8" opacity="0.45"/><rect x="149.6" y="313" width="1" height="5.9" fill="#20a0a8" opacity="0.32"/><rect x="319.5" y="313" width="1" height="5.0" fill="#20a0a8" opacity="0.69"/><rect x="104.9" y="313" width="1" height="3.8" fill="#20a0a8" opacity="0.60"/><rect x="39.4" y="313" width="1" height="3.0" fill="#20a0a8" opacity="0.66"/><rect x="103.0" y="313" width="1" height="3.6" fill="#20a0a8" opacity="0.42"/><rect x="279.0" y="313" width="1" height="2.3" fill="#20a0a8" opacity="0.31"/><rect x="634.6" y="313" width="1" height="5.1" fill="#20a0a8" opacity="0.59"/><rect x="158.0" y="313" width="1" height="3.0" fill="#20a0a8" opacity="0.52"/><rect x="165.3" y="313" width="1" height="3.8" fill="#20a0a8" opacity="0.67"/><rect x="241.4" y="313" width="1" height="3.3" fill="#20a0a8" opacity="0.69"/><rect x="395.0" y="313" width="1" height="2.2" fill="#20a0a8" opacity="0.46"/><rect x="419.2" y="313" width="1" height="2.2" fill="#20a0a8" opacity="0.44"/><rect x="447.1" y="313" width="1" height="5.5" fill="#20a0a8" opacity="0.54"/><rect x="566.3" y="313" width="1" height="3.9" fill="#20a0a8" opacity="0.46"/><rect x="539.4" y="313" width="1" height="3.5" fill="#20a0a8" opacity="0.61"/><rect x="149.0" y="313" width="1" height="3.4" fill="#20a0a8" opacity="0.37"/><rect x="356.8" y="313" width="1" height="2.7" fill="#20a0a8" opacity="0.38"/><rect x="148.4" y="313" width="1" height="3.9" fill="#20a0a8" opacity="0.42"/><rect x="293.1" y="313" width="1" height="6.0" fill="#20a0a8" opacity="0.57"/><rect x="551.6" y="313" width="1" height="2.8" fill="#20a0a8" opacity="0.45"/><rect x="60.3" y="313" width="1" height="4.8" fill="#20a0a8" opacity="0.45"/><rect x="185.8" y="313" width="1" height="2.1" fill="#20a0a8" opacity="0.37"/><rect x="178.2" y="313" width="1" height="3.6" fill="#20a0a8" opacity="0.67"/><rect x="459.8" y="313" width="1" height="3.1" fill="#20a0a8" opacity="0.44"/><rect x="110.5" y="313" width="1" height="5.7" fill="#20a0a8" opacity="0.44"/><rect x="491.3" y="313" width="1" height="4.9" fill="#20a0a8" opacity="0.66"/><rect x="27.7" y="313" width="1" height="3.3" fill="#20a0a8" opacity="0.45"/><rect x="66.7" y="313" width="1" height="5.5" fill="#20a0a8" opacity="0.43"/><rect x="494.4" y="313" width="1" height="4.1" fill="#20a0a8" opacity="0.32"/><rect x="260.1" y="313" width="1" height="3.0" fill="#20a0a8" opacity="0.32"/><rect x="108.8" y="313" width="1" height="4.4" fill="#20a0a8" opacity="0.31"/><rect x="209.2" y="313" width="1" height="3.7" fill="#20a0a8" opacity="0.52"/><rect x="99.6" y="313" width="1" height="4.8" fill="#20a0a8" opacity="0.40"/><rect x="466.2" y="313" width="1" height="4.7" fill="#20a0a8" opacity="0.36"/><rect x="142.4" y="313" width="1" height="3.1" fill="#20a0a8" opacity="0.59"/><rect x="267.1" y="313" width="1" height="3.5" fill="#20a0a8" opacity="0.65"/><rect x="155.6" y="313" width="1" height="3.2" fill="#20a0a8" opacity="0.44"/><rect x="149.2" y="313" width="1" height="2.2" fill="#20a0a8" opacity="0.31"/><rect x="407.1" y="313" width="1" height="4.3" fill="#20a0a8" opacity="0.62"/><rect x="621.8" y="313" width="1" height="3.2" fill="#20a0a8" opacity="0.57"/><rect x="586.7" y="313" width="1" height="2.9" fill="#20a0a8" opacity="0.58"/><rect x="429.6" y="313" width="1" height="5.8" fill="#20a0a8" opacity="0.65"/><rect x="160.9" y="313" width="1" height="4.5" fill="#20a0a8" opacity="0.34"/><rect x="281.0" y="313" width="1" height="3.6" fill="#20a0a8" opacity="0.32"/><rect x="253.4" y="313" width="1" height="3.3" fill="#20a0a8" opacity="0.50"/><rect x="189.0" y="313" width="1" height="2.6" fill="#20a0a8" opacity="0.46"/><rect x="310.6" y="313" width="1" height="2.7" fill="#20a0a8" opacity="0.57"/><rect x="164.2" y="313" width="1" height="2.4" fill="#20a0a8" opacity="0.44"/><rect x="277.7" y="313" width="1" height="2.6" fill="#20a0a8" opacity="0.53"/><rect x="451.3" y="313" width="1" height="4.2" fill="#20a0a8" opacity="0.58"/><rect x="29.3" y="313" width="1" height="3.6" fill="#20a0a8" opacity="0.45"/><rect x="54.1" y="313" width="1" height="3.6" fill="#20a0a8" opacity="0.32"/><rect x="323.2" y="313" width="1" height="4.3" fill="#20a0a8" opacity="0.49"/><rect x="217.5" y="313" width="1" height="3.0" fill="#20a0a8" opacity="0.31"/><rect x="230.9" y="313" width="1" height="5.6" fill="#20a0a8" opacity="0.53"/><rect x="177.9" y="313" width="1" height="4.7" fill="#20a0a8" opacity="0.37"/><rect x="306.9" y="313" width="1" height="4.5" fill="#20a0a8" opacity="0.68"/><rect x="240.6" y="313" width="1" height="4.3" fill="#20a0a8" opacity="0.68"/><rect x="494.9" y="313" width="1" height="4.5" fill="#20a0a8" opacity="0.55"/><rect x="270.6" y="313" width="1" height="3.7" fill="#20a0a8" opacity="0.41"/><rect x="531.0" y="313" width="1" height="5.5" fill="#20a0a8" opacity="0.45"/><rect x="580.8" y="313" width="1" height="2.2" fill="#20a0a8" opacity="0.35"/><rect x="330.4" y="313" width="1" height="3.2" fill="#20a0a8" opacity="0.44"/><rect x="622.7" y="313" width="1" height="2.6" fill="#20a0a8" opacity="0.38"/><rect x="157.1" y="313" width="1" height="4.7" fill="#20a0a8" opacity="0.39"/><rect x="15.6" y="313" width="1" height="4.2" fill="#20a0a8" opacity="0.46"/><rect x="163.9" y="313" width="1" height="4.0" fill="#20a0a8" opacity="0.56"/><rect x="355.9" y="313" width="1" height="4.5" fill="#20a0a8" opacity="0.52"/><rect x="531.9" y="313" width="1" height="5.9" fill="#20a0a8" opacity="0.43"/><rect x="230.6" y="313" width="1" height="5.5" fill="#20a0a8" opacity="0.43"/><rect x="460.3" y="313" width="1" height="4.8" fill="#20a0a8" opacity="0.57"/><rect x="614.6" y="313" width="1" height="5.3" fill="#20a0a8" opacity="0.36"/><rect x="401.6" y="313" width="1" height="4.0" fill="#20a0a8" opacity="0.53"/><rect x="244.8" y="313" width="1" height="3.1" fill="#20a0a8" opacity="0.60"/><rect x="347.1" y="313" width="1" height="2.9" fill="#20a0a8" opacity="0.40"/><rect x="217.1" y="313" width="1" height="2.7" fill="#20a0a8" opacity="0.51"/><rect x="93.4" y="313" width="1" height="2.3" fill="#20a0a8" opacity="0.33"/><rect x="78.6" y="313" width="1" height="4.8" fill="#20a0a8" opacity="0.35"/><rect x="295.9" y="313" width="1" height="5.1" fill="#20a0a8" opacity="0.49"/><rect x="116.1" y="313" width="1" height="5.5" fill="#20a0a8" opacity="0.65"/><rect x="48.2" y="313" width="1" height="3.0" fill="#20a0a8" opacity="0.50"/><rect x="510.4" y="313" width="1" height="3.6" fill="#20a0a8" opacity="0.59"/><rect x="171.6" y="313" width="1" height="4.9" fill="#20a0a8" opacity="0.43"/><rect x="222.6" y="313" width="1" height="5.0" fill="#20a0a8" opacity="0.64"/><rect x="530.4" y="313" width="1" height="4.3" fill="#20a0a8" opacity="0.47"/><rect x="454.7" y="313" width="1" height="4.5" fill="#20a0a8" opacity="0.63"/><rect x="513.4" y="313" width="1" height="2.5" fill="#20a0a8" opacity="0.45"/><rect x="431.3" y="313" width="1" height="2.9" fill="#20a0a8" opacity="0.37"/><rect x="23.5" y="313" width="1" height="4.3" fill="#20a0a8" opacity="0.68"/><rect x="618.6" y="313" width="1" height="2.5" fill="#20a0a8" opacity="0.58"/><rect x="275.8" y="313" width="1" height="4.5" fill="#20a0a8" opacity="0.46"/><rect x="595.6" y="313" width="1" height="6.0" fill="#20a0a8" opacity="0.32"/><rect x="458.7" y="313" width="1" height="2.5" fill="#20a0a8" opacity="0.32"/><rect x="192.9" y="313" width="1" height="4.9" fill="#20a0a8" opacity="0.70"/><rect x="89.7" y="313" width="1" height="3.3" fill="#20a0a8" opacity="0.31"/><rect x="352.5" y="313" width="1" height="3.9" fill="#20a0a8" opacity="0.45"/><rect x="207.3" y="313" width="1" height="5.2" fill="#20a0a8" opacity="0.64"/><rect x="191.5" y="313" width="1" height="3.6" fill="#20a0a8" opacity="0.55"/><rect x="491.1" y="313" width="1" height="5.9" fill="#20a0a8" opacity="0.46"/><rect x="446.7" y="313" width="1" height="4.2" fill="#20a0a8" opacity="0.62"/><rect x="106.4" y="313" width="1" height="2.7" fill="#20a0a8" opacity="0.34"/><rect x="595.7" y="313" width="1" height="3.0" fill="#20a0a8" opacity="0.50"/><rect x="89.9" y="313" width="1" height="3.3" fill="#20a0a8" opacity="0.31"/><rect x="367.0" y="313" width="1" height="2.6" fill="#20a0a8" opacity="0.55"/><rect x="185.4" y="313" width="1" height="2.9" fill="#20a0a8" opacity="0.49"/><rect x="242.6" y="313" width="1" height="3.0" fill="#20a0a8" opacity="0.32"/><rect x="55.0" y="313" width="1" height="5.6" fill="#20a0a8" opacity="0.42"/><rect x="63.8" y="313" width="1" height="2.7" fill="#20a0a8" opacity="0.49"/><rect x="635.2" y="313" width="1" height="2.8" fill="#20a0a8" opacity="0.65"/><rect x="316.2" y="313" width="1" height="3.7" fill="#20a0a8" opacity="0.62"/><rect x="261.3" y="313" width="1" height="2.2" fill="#20a0a8" opacity="0.52"/><rect x="423.6" y="313" width="1" height="4.5" fill="#20a0a8" opacity="0.41"/><rect x="599.0" y="313" width="1" height="5.5" fill="#20a0a8" opacity="0.70"/><rect x="290.7" y="313" width="1" height="5.3" fill="#20a0a8" opacity="0.59"/><rect x="124.4" y="313" width="1" height="2.1" fill="#20a0a8" opacity="0.37"/><rect x="88.9" y="313" width="1" height="2.3" fill="#20a0a8" opacity="0.44"/><rect x="483.7" y="313" width="1" height="3.2" fill="#20a0a8" opacity="0.51"/><rect x="21.5" y="313" width="1" height="2.8" fill="#20a0a8" opacity="0.68"/><rect x="21.9" y="313" width="1" height="4.1" fill="#20a0a8" opacity="0.62"/><rect x="507.8" y="313" width="1" height="4.9" fill="#20a0a8" opacity="0.46"/><rect x="514.5" y="313" width="1" height="5.3" fill="#20a0a8" opacity="0.61"/><rect x="628.3" y="313" width="1" height="2.4" fill="#20a0a8" opacity="0.68"/><rect x="265.2" y="313" width="1" height="4.8" fill="#20a0a8" opacity="0.40"/><rect x="580.8" y="313" width="1" height="2.1" fill="#20a0a8" opacity="0.53"/><rect x="156.3" y="313" width="1" height="3.6" fill="#20a0a8" opacity="0.45"/><rect x="423.6" y="313" width="1" height="5.2" fill="#20a0a8" opacity="0.45"/><rect x="411.9" y="313" width="1" height="3.4" fill="#20a0a8" opacity="0.41"/><rect x="578.0" y="313" width="1" height="3.3" fill="#20a0a8" opacity="0.34"/><rect x="223.2" y="313" width="1" height="5.0" fill="#20a0a8" opacity="0.38"/><rect x="477.3" y="313" width="1" height="4.2" fill="#20a0a8" opacity="0.57"/><rect x="125.3" y="313" width="1" height="2.4" fill="#20a0a8" opacity="0.36"/><rect x="232.9" y="313" width="1" height="3.7" fill="#20a0a8" opacity="0.30"/><rect x="327.6" y="313" width="1" height="3.6" fill="#20a0a8" opacity="0.43"/><rect x="349.1" y="313" width="1" height="5.8" fill="#20a0a8" opacity="0.38"/><rect x="562.7" y="313" width="1" height="3.3" fill="#20a0a8" opacity="0.60"/><rect x="82.4" y="313" width="1" height="6.0" fill="#20a0a8" opacity="0.47"/><rect x="613.8" y="313" width="1" height="2.9" fill="#20a0a8" opacity="0.46"/><rect x="454.2" y="313" width="1" height="2.7" fill="#20a0a8" opacity="0.41"/><rect x="436.2" y="313" width="1" height="5.8" fill="#20a0a8" opacity="0.43"/><rect x="129.1" y="313" width="1" height="3.4" fill="#20a0a8" opacity="0.70"/><rect x="107.1" y="313" width="1" height="4.5" fill="#20a0a8" opacity="0.45"/><rect x="415.5" y="313" width="1" height="2.8" fill="#20a0a8" opacity="0.55"/><rect x="38.2" y="271" width="1.6" height="6" fill="#c8d830" opacity="0.8"/><rect x="41.6" y="271" width="1.6" height="6" fill="#c8d830" opacity="0.8"/><rect x="44.7" y="271" width="1.6" height="6" fill="#c8d830" opacity="0.8"/><rect x="48.3" y="271" width="1.6" height="6" fill="#c8d830" opacity="0.8"/><rect x="81.5" y="271" width="1.6" height="6" fill="#c8d830" opacity="0.8"/><rect x="85.1" y="271" width="1.6" height="6" fill="#c8d830" opacity="0.8"/><rect x="124.7" y="271" width="1.6" height="6" fill="#c8d830" opacity="0.8"/><rect x="127.9" y="271" width="1.6" height="6" fill="#c8d830" opacity="0.8"/><rect x="132.2" y="271" width="1.6" height="6" fill="#c8d830" opacity="0.8"/><rect x="134.5" y="271" width="1.6" height="6" fill="#c8d830" opacity="0.8"/><rect x="168.0" y="271" width="1.6" height="6" fill="#c8d830" opacity="0.8"/><rect x="171.3" y="271" width="1.6" height="6" fill="#c8d830" opacity="0.8"/><rect x="174.5" y="271" width="1.6" height="6" fill="#c8d830" opacity="0.8"/><rect x="175.6" y="271" width="1.6" height="6" fill="#c8d830" opacity="0.8"/><rect x="211.2" y="271" width="1.6" height="6" fill="#c8d830" opacity="0.8"/><rect x="214.6" y="271" width="1.6" height="6" fill="#c8d830" opacity="0.8"/><rect x="218.0" y="271" width="1.6" height="6" fill="#c8d830" opacity="0.8"/><rect x="222.9" y="271" width="1.6" height="6" fill="#c8d830" opacity="0.8"/><rect x="254.5" y="271" width="1.6" height="6" fill="#c8d830" opacity="0.8"/><rect x="257.5" y="271" width="1.6" height="6" fill="#c8d830" opacity="0.8"/><rect x="260.3" y="271" width="1.6" height="6" fill="#c8d830" opacity="0.8"/><rect x="297.8" y="271" width="1.6" height="6" fill="#c8d830" opacity="0.8"/><rect x="301.0" y="271" width="1.6" height="6" fill="#c8d830" opacity="0.8"/><rect x="304.4" y="271" width="1.6" height="6" fill="#c8d830" opacity="0.8"/><rect x="341.0" y="271" width="1.6" height="6" fill="#c8d830" opacity="0.8"/><rect x="343.7" y="271" width="1.6" height="6" fill="#c8d830" opacity="0.8"/><rect x="384.3" y="271" width="1.6" height="6" fill="#c8d830" opacity="0.8"/><rect x="387.1" y="271" width="1.6" height="6" fill="#c8d830" opacity="0.8"/><rect x="392.1" y="271" width="1.6" height="6" fill="#c8d830" opacity="0.8"/><rect x="395.3" y="271" width="1.6" height="6" fill="#c8d830" opacity="0.8"/><rect x="427.5" y="271" width="1.6" height="6" fill="#c8d830" opacity="0.8"/><rect x="431.2" y="271" width="1.6" height="6" fill="#c8d830" opacity="0.8"/><rect x="434.1" y="271" width="1.6" height="6" fill="#c8d830" opacity="0.8"/><rect x="470.8" y="271" width="1.6" height="6" fill="#c8d830" opacity="0.8"/><rect x="474.6" y="271" width="1.6" height="6" fill="#c8d830" opacity="0.8"/><rect x="477.9" y="271" width="1.6" height="6" fill="#c8d830" opacity="0.8"/><rect x="514.1" y="271" width="1.6" height="6" fill="#c8d830" opacity="0.8"/><rect x="517.1" y="271" width="1.6" height="6" fill="#c8d830" opacity="0.8"/><rect x="519.7" y="271" width="1.6" height="6" fill="#c8d830" opacity="0.8"/><rect x="557.3" y="271" width="1.6" height="6" fill="#c8d830" opacity="0.8"/><rect x="560.1" y="271" width="1.6" height="6" fill="#c8d830" opacity="0.8"/><rect x="600.6" y="271" width="1.6" height="6" fill="#c8d830" opacity="0.8"/><rect x="603.4" y="271" width="1.6" height="6" fill="#c8d830" opacity="0.8"/><rect x="605.9" y="271" width="1.6" height="6" fill="#c8d830" opacity="0.8"/><line x1="15" y1="231.0" x2="637" y2="231.0" stroke="#c8e8e8" stroke-width="1" stroke-dasharray="1,5.2" opacity="0.5"/><line x1="15" y1="266.2" x2="637" y2="266.2" stroke="#c8e8e8" stroke-width="1" stroke-dasharray="1,5.2" opacity="0.5"/><line x1="15" y1="301.5" x2="637" y2="301.5" stroke="#c8e8e8" stroke-width="1" stroke-dasharray="1,5.2" opacity="0.5"/><rect x="279.5" y="155.5" width="10" height="187" fill="#0a2a50" fill-opacity="0.62" stroke="#f0f0f0" stroke-width="1"/><path d="M268 91h16v16l-8 6.6-8-6.6z" fill="#5496ee"/><text x="276" y="104" font-size="14" font-weight="bold" fill="#101828" text-anchor="middle" font-family="Liberation Sans">T</text><path d="M15 125h20l5 7-5 7H15z" fill="#f8f8f8"/><text x="17" y="137" font-size="13" fill="#111" font-family="Liberation Sans">B1</text><path d="M13 264h18l6 7-6 7H13z" fill="#f0e224"/><text x="19" y="277" font-size="16" fill="#111" font-family="Liberation Sans">1</text><path d="M13 299h18l6 7-6 7H13z" fill="#44e6f0"/><text x="17" y="312" font-size="16" fill="#111" font-family="Liberation Sans">2</text><rect x="594.0" y="116.2" width="43.0" height="18" fill="#000" opacity="0.35"/><text x="636" y="130.8" font-size="15" fill="#40dcd8" text-anchor="end" font-family="Liberation Sans">5.08V</text><rect x="594.0" y="151.5" width="43.0" height="18" fill="#000" opacity="0.35"/><text x="636" y="166.0" font-size="15" fill="#40dcd8" text-anchor="end" font-family="Liberation Sans">4.08V</text><rect x="594.0" y="186.8" width="43.0" height="18" fill="#000" opacity="0.35"/><text x="636" y="201.2" font-size="15" fill="#40dcd8" text-anchor="end" font-family="Liberation Sans">3.08V</text><rect x="594.0" y="222.0" width="43.0" height="18" fill="#000" opacity="0.35"/><text x="636" y="236.5" font-size="15" fill="#40dcd8" text-anchor="end" font-family="Liberation Sans">2.08V</text><rect x="594.0" y="257.2" width="43.0" height="18" fill="#000" opacity="0.35"/><text x="636" y="271.8" font-size="15" fill="#40dcd8" text-anchor="end" font-family="Liberation Sans">1.08V</text><rect x="602.6" y="292.5" width="34.4" height="18" fill="#000" opacity="0.35"/><text x="636" y="307.0" font-size="15" fill="#40dcd8" text-anchor="end" font-family="Liberation Sans">80mV</text><rect x="585.4" y="327.8" width="51.6" height="18" fill="#000" opacity="0.35"/><text x="636" y="342.2" font-size="15" fill="#40dcd8" text-anchor="end" font-family="Liberation Sans">-920mV</text><path d="M607 226l9-7v4.5h21v5h-21v4.5z" fill="#4a8ee8" opacity="0.95"/><text x="78.1" y="371" font-size="16" fill="#f4f4f4" text-anchor="middle" font-family="Liberation Sans">-320.8µs</text><text x="202.3" y="371" font-size="16" fill="#f4f4f4" text-anchor="middle" font-family="Liberation Sans">-120.8µs</text><text x="326.5" y="371" font-size="16" fill="#f4f4f4" text-anchor="middle" font-family="Liberation Sans">79.2µs</text><text x="450.7" y="371" font-size="16" fill="#f4f4f4" text-anchor="middle" font-family="Liberation Sans">279.2µs</text><text x="574.9" y="371" font-size="16" fill="#f4f4f4" text-anchor="middle" font-family="Liberation Sans">479.2µs</text></svg>
<div class="a" style="left:15px;top:375px;width:622px;height:31px;background:#363a46;border-top:1px solid #8a8a90;border-bottom:1px solid #8a8a90"></div>
<div class="t" style="left:23px;top:381px;font-size:17px;color:#f0f0f0">Horiz Zoom</div>
<div class="a" style="left:123px;top:378px;width:98px;height:25px;background:#1a1a24"></div>
<div class="t" style="left:125px;top:382px;font-size:16px;color:#f0f0f0">X</div>
<div class="t" style="left:144px;top:382px;font-size:16px;color:#f0f0f0">66.1978</div>
<div class="a" style="left:235px;top:378px;width:26px;height:26px;background:#3e424e;border:1px solid #4a4e5a"></div>
<div class="a" style="left:275px;top:378px;width:26px;height:26px;background:#3e424e;border:1px solid #4a4e5a"></div>
<svg class="a" style="left:235px;top:378px" width="26" height="26"><path d="M6 13h16M14 5v16" stroke="#f4f4f4" stroke-width="2.4"/></svg>
<svg class="a" style="left:275px;top:378px" width="26" height="26"><path d="M6 13h16" stroke="#f4f4f4" stroke-width="2.4"/></svg>
<div class="t" style="left:322px;top:381px;font-size:17px;color:#f0f0f0">Vert Zoom</div>
<div class="a" style="left:423px;top:378px;width:98px;height:25px;background:#1a1a24"></div>
<div class="t" style="left:425px;top:382px;font-size:16px;color:#f0f0f0">X</div>
<div class="t" style="left:449px;top:382px;font-size:16px;color:#f0f0f0">1.5267</div>
<div class="a" style="left:535px;top:378px;width:26px;height:26px;background:#3e424e;border:1px solid #4a4e5a"></div>
<div class="a" style="left:575px;top:378px;width:26px;height:26px;background:#3e424e;border:1px solid #4a4e5a"></div>
<svg class="a" style="left:535px;top:378px" width="26" height="26"><path d="M6 13h16M14 5v16" stroke="#f4f4f4" stroke-width="2.4"/></svg>
<svg class="a" style="left:575px;top:378px" width="26" height="26"><path d="M6 13h16" stroke="#f4f4f4" stroke-width="2.4"/></svg>
<svg class="a" style="left:0;top:0" width="640" height="700"><clipPath id="lc"><rect x="15" y="406" width="622" height="283"/></clipPath><g clip-path="url(#lc)"><line x1="78.1" y1="406" x2="78.1" y2="689" stroke="#9a9a9a" stroke-width="1.3" stroke-dasharray="1.3,5.78" stroke-dashoffset="0.65"/><line x1="140.2" y1="406" x2="140.2" y2="689" stroke="#9a9a9a" stroke-width="1.3" stroke-dasharray="1.3,5.78" stroke-dashoffset="0.65"/><line x1="202.3" y1="406" x2="202.3" y2="689" stroke="#9a9a9a" stroke-width="1.3" stroke-dasharray="1.3,5.78" stroke-dashoffset="0.65"/><line x1="264.4" y1="406" x2="264.4" y2="689" stroke="#9a9a9a" stroke-width="1.3" stroke-dasharray="1.3,5.78" stroke-dashoffset="0.65"/><line x1="326.5" y1="406" x2="326.5" y2="689" stroke="#9a9a9a" stroke-width="1" stroke-dasharray="1,1.6"/><rect x="325.0" y="412.6" width="3" height="1" fill="#9a9a9a"/><rect x="325.0" y="419.7" width="3" height="1" fill="#9a9a9a"/><rect x="325.0" y="426.7" width="3" height="1" fill="#9a9a9a"/><rect x="325.0" y="433.8" width="3" height="1" fill="#9a9a9a"/><rect x="325.0" y="440.9" width="3" height="1" fill="#9a9a9a"/><rect x="325.0" y="448.0" width="3" height="1" fill="#9a9a9a"/><rect x="325.0" y="455.1" width="3" height="1" fill="#9a9a9a"/><rect x="325.0" y="462.1" width="3" height="1" fill="#9a9a9a"/><rect x="325.0" y="469.2" width="3" height="1" fill="#9a9a9a"/><rect x="325.0" y="476.3" width="3" height="1" fill="#9a9a9a"/><rect x="325.0" y="483.4" width="3" height="1" fill="#9a9a9a"/><rect x="325.0" y="490.5" width="3" height="1" fill="#9a9a9a"/><rect x="325.0" y="497.5" width="3" height="1" fill="#9a9a9a"/><rect x="325.0" y="504.6" width="3" height="1" fill="#9a9a9a"/><rect x="325.0" y="511.7" width="3" height="1" fill="#9a9a9a"/><rect x="325.0" y="518.8" width="3" height="1" fill="#9a9a9a"/><rect x="325.0" y="525.9" width="3" height="1" fill="#9a9a9a"/><rect x="325.0" y="532.9" width="3" height="1" fill="#9a9a9a"/><rect x="325.0" y="540.0" width="3" height="1" fill="#9a9a9a"/><rect x="325.0" y="547.1" width="3" height="1" fill="#9a9a9a"/><rect x="325.0" y="554.2" width="3" height="1" fill="#9a9a9a"/><rect x="325.0" y="561.3" width="3" height="1" fill="#9a9a9a"/><rect x="325.0" y="568.3" width="3" height="1" fill="#9a9a9a"/><rect x="325.0" y="575.4" width="3" height="1" fill="#9a9a9a"/><rect x="325.0" y="582.5" width="3" height="1" fill="#9a9a9a"/><rect x="325.0" y="589.6" width="3" height="1" fill="#9a9a9a"/><rect x="325.0" y="596.7" width="3" height="1" fill="#9a9a9a"/><rect x="325.0" y="603.7" width="3" height="1" fill="#9a9a9a"/><rect x="325.0" y="610.8" width="3" height="1" fill="#9a9a9a"/><rect x="325.0" y="617.9" width="3" height="1" fill="#9a9a9a"/><rect x="325.0" y="625.0" width="3" height="1" fill="#9a9a9a"/><rect x="325.0" y="632.1" width="3" height="1" fill="#9a9a9a"/><rect x="325.0" y="639.1" width="3" height="1" fill="#9a9a9a"/><rect x="325.0" y="646.2" width="3" height="1" fill="#9a9a9a"/><rect x="325.0" y="653.3" width="3" height="1" fill="#9a9a9a"/><rect x="325.0" y="660.4" width="3" height="1" fill="#9a9a9a"/><rect x="325.0" y="667.5" width="3" height="1" fill="#9a9a9a"/><rect x="325.0" y="674.5" width="3" height="1" fill="#9a9a9a"/><rect x="325.0" y="681.6" width="3" height="1" fill="#9a9a9a"/><rect x="325.0" y="688.7" width="3" height="1" fill="#9a9a9a"/><line x1="388.6" y1="406" x2="388.6" y2="689" stroke="#9a9a9a" stroke-width="1.3" stroke-dasharray="1.3,5.78" stroke-dashoffset="0.65"/><line x1="450.7" y1="406" x2="450.7" y2="689" stroke="#9a9a9a" stroke-width="1.3" stroke-dasharray="1.3,5.78" stroke-dashoffset="0.65"/><line x1="512.8" y1="406" x2="512.8" y2="689" stroke="#9a9a9a" stroke-width="1.3" stroke-dasharray="1.3,5.78" stroke-dashoffset="0.65"/><line x1="574.9" y1="406" x2="574.9" y2="689" stroke="#9a9a9a" stroke-width="1.3" stroke-dasharray="1.3,5.78" stroke-dashoffset="0.65"/><line x1="15" y1="441.4" x2="637" y2="441.4" stroke="#9a9a9a" stroke-width="1.3" stroke-dasharray="1.3,11.12" stroke-dashoffset="-12.77"/><line x1="15" y1="476.8" x2="637" y2="476.8" stroke="#9a9a9a" stroke-width="1.3" stroke-dasharray="1.3,11.12" stroke-dashoffset="-12.77"/><line x1="15" y1="512.2" x2="637" y2="512.2" stroke="#9a9a9a" stroke-width="1.3" stroke-dasharray="1.3,11.12" stroke-dashoffset="-12.77"/><line x1="15" y1="547.6" x2="637" y2="547.6" stroke="#9a9a9a" stroke-width="1" stroke-dasharray="1,1.6"/><rect x="27.9" y="546.1" width="1" height="3" fill="#9a9a9a"/><rect x="40.3" y="546.1" width="1" height="3" fill="#9a9a9a"/><rect x="52.8" y="546.1" width="1" height="3" fill="#9a9a9a"/><rect x="65.2" y="546.1" width="1" height="3" fill="#9a9a9a"/><rect x="77.6" y="546.1" width="1" height="3" fill="#9a9a9a"/><rect x="90.0" y="546.1" width="1" height="3" fill="#9a9a9a"/><rect x="102.4" y="546.1" width="1" height="3" fill="#9a9a9a"/><rect x="114.9" y="546.1" width="1" height="3" fill="#9a9a9a"/><rect x="127.3" y="546.1" width="1" height="3" fill="#9a9a9a"/><rect x="139.7" y="546.1" width="1" height="3" fill="#9a9a9a"/><rect x="152.1" y="546.1" width="1" height="3" fill="#9a9a9a"/><rect x="164.5" y="546.1" width="1" height="3" fill="#9a9a9a"/><rect x="177.0" y="546.1" width="1" height="3" fill="#9a9a9a"/><rect x="189.4" y="546.1" width="1" height="3" fill="#9a9a9a"/><rect x="201.8" y="546.1" width="1" height="3" fill="#9a9a9a"/><rect x="214.2" y="546.1" width="1" height="3" fill="#9a9a9a"/><rect x="226.6" y="546.1" width="1" height="3" fill="#9a9a9a"/><rect x="239.1" y="546.1" width="1" height="3" fill="#9a9a9a"/><rect x="251.5" y="546.1" width="1" height="3" fill="#9a9a9a"/><rect x="263.9" y="546.1" width="1" height="3" fill="#9a9a9a"/><rect x="276.3" y="546.1" width="1" height="3" fill="#9a9a9a"/><rect x="288.7" y="546.1" width="1" height="3" fill="#9a9a9a"/><rect x="301.2" y="546.1" width="1" height="3" fill="#9a9a9a"/><rect x="313.6" y="546.1" width="1" height="3" fill="#9a9a9a"/><rect x="326.0" y="546.1" width="1" height="3" fill="#9a9a9a"/><rect x="338.4" y="546.1" width="1" height="3" fill="#9a9a9a"/><rect x="350.8" y="546.1" width="1" height="3" fill="#9a9a9a"/><rect x="363.3" y="546.1" width="1" height="3" fill="#9a9a9a"/><rect x="375.7" y="546.1" width="1" height="3" fill="#9a9a9a"/><rect x="388.1" y="546.1" width="1" height="3" fill="#9a9a9a"/><rect x="400.5" y="546.1" width="1" height="3" fill="#9a9a9a"/><rect x="412.9" y="546.1" width="1" height="3" fill="#9a9a9a"/><rect x="425.4" y="546.1" width="1" height="3" fill="#9a9a9a"/><rect x="437.8" y="546.1" width="1" height="3" fill="#9a9a9a"/><rect x="450.2" y="546.1" width="1" height="3" fill="#9a9a9a"/><rect x="462.6" y="546.1" width="1" height="3" fill="#9a9a9a"/><rect x="475.0" y="546.1" width="1" height="3" fill="#9a9a9a"/><rect x="487.5" y="546.1" width="1" height="3" fill="#9a9a9a"/><rect x="499.9" y="546.1" width="1" height="3" fill="#9a9a9a"/><rect x="512.3" y="546.1" width="1" height="3" fill="#9a9a9a"/><rect x="524.7" y="546.1" width="1" height="3" fill="#9a9a9a"/><rect x="537.1" y="546.1" width="1" height="3" fill="#9a9a9a"/><rect x="549.6" y="546.1" width="1" height="3" fill="#9a9a9a"/><rect x="562.0" y="546.1" width="1" height="3" fill="#9a9a9a"/><rect x="574.4" y="546.1" width="1" height="3" fill="#9a9a9a"/><rect x="586.8" y="546.1" width="1" height="3" fill="#9a9a9a"/><rect x="599.2" y="546.1" width="1" height="3" fill="#9a9a9a"/><rect x="611.7" y="546.1" width="1" height="3" fill="#9a9a9a"/><rect x="624.1" y="546.1" width="1" height="3" fill="#9a9a9a"/><rect x="636.5" y="546.1" width="1" height="3" fill="#9a9a9a"/><line x1="15" y1="583.0" x2="637" y2="583.0" stroke="#9a9a9a" stroke-width="1.3" stroke-dasharray="1.3,11.12" stroke-dashoffset="-12.77"/><line x1="15" y1="618.4" x2="637" y2="618.4" stroke="#9a9a9a" stroke-width="1.3" stroke-dasharray="1.3,11.12" stroke-dashoffset="-12.77"/><line x1="15" y1="653.8" x2="637" y2="653.8" stroke="#9a9a9a" stroke-width="1.3" stroke-dasharray="1.3,11.12" stroke-dashoffset="-12.77"/><line x1="16.0" y1="406" x2="16.0" y2="410" stroke="#9a9a9a"/><line x1="16.0" y1="685" x2="16.0" y2="689" stroke="#9a9a9a"/><line x1="28.4" y1="406" x2="28.4" y2="408.5" stroke="#9a9a9a"/><line x1="28.4" y1="686.5" x2="28.4" y2="689" stroke="#9a9a9a"/><line x1="40.8" y1="406" x2="40.8" y2="408.5" stroke="#9a9a9a"/><line x1="40.8" y1="686.5" x2="40.8" y2="689" stroke="#9a9a9a"/><line x1="53.3" y1="406" x2="53.3" y2="408.5" stroke="#9a9a9a"/><line x1="53.3" y1="686.5" x2="53.3" y2="689" stroke="#9a9a9a"/><line x1="65.7" y1="406" x2="65.7" y2="408.5" stroke="#9a9a9a"/><line x1="65.7" y1="686.5" x2="65.7" y2="689" stroke="#9a9a9a"/><line x1="78.1" y1="406" x2="78.1" y2="410" stroke="#9a9a9a"/><line x1="78.1" y1="685" x2="78.1" y2="689" stroke="#9a9a9a"/><line x1="90.5" y1="406" x2="90.5" y2="408.5" stroke="#9a9a9a"/><line x1="90.5" y1="686.5" x2="90.5" y2="689" stroke="#9a9a9a"/><line x1="102.9" y1="406" x2="102.9" y2="408.5" stroke="#9a9a9a"/><line x1="102.9" y1="686.5" x2="102.9" y2="689" stroke="#9a9a9a"/><line x1="115.4" y1="406" x2="115.4" y2="408.5" stroke="#9a9a9a"/><line x1="115.4" y1="686.5" x2="115.4" y2="689" stroke="#9a9a9a"/><line x1="127.8" y1="406" x2="127.8" y2="408.5" stroke="#9a9a9a"/><line x1="127.8" y1="686.5" x2="127.8" y2="689" stroke="#9a9a9a"/><line x1="140.2" y1="406" x2="140.2" y2="410" stroke="#9a9a9a"/><line x1="140.2" y1="685" x2="140.2" y2="689" stroke="#9a9a9a"/><line x1="152.6" y1="406" x2="152.6" y2="408.5" stroke="#9a9a9a"/><line x1="152.6" y1="686.5" x2="152.6" y2="689" stroke="#9a9a9a"/><line x1="165.0" y1="406" x2="165.0" y2="408.5" stroke="#9a9a9a"/><line x1="165.0" y1="686.5" x2="165.0" y2="689" stroke="#9a9a9a"/><line x1="177.5" y1="406" x2="177.5" y2="408.5" stroke="#9a9a9a"/><line x1="177.5" y1="686.5" x2="177.5" y2="689" stroke="#9a9a9a"/><line x1="189.9" y1="406" x2="189.9" y2="408.5" stroke="#9a9a9a"/><line x1="189.9" y1="686.5" x2="189.9" y2="689" stroke="#9a9a9a"/><line x1="202.3" y1="406" x2="202.3" y2="410" stroke="#9a9a9a"/><line x1="202.3" y1="685" x2="202.3" y2="689" stroke="#9a9a9a"/><line x1="214.7" y1="406" x2="214.7" y2="408.5" stroke="#9a9a9a"/><line x1="214.7" y1="686.5" x2="214.7" y2="689" stroke="#9a9a9a"/><line x1="227.1" y1="406" x2="227.1" y2="408.5" stroke="#9a9a9a"/><line x1="227.1" y1="686.5" x2="227.1" y2="689" stroke="#9a9a9a"/><line x1="239.6" y1="406" x2="239.6" y2="408.5" stroke="#9a9a9a"/><line x1="239.6" y1="686.5" x2="239.6" y2="689" stroke="#9a9a9a"/><line x1="252.0" y1="406" x2="252.0" y2="408.5" stroke="#9a9a9a"/><line x1="252.0" y1="686.5" x2="252.0" y2="689" stroke="#9a9a9a"/><line x1="264.4" y1="406" x2="264.4" y2="410" stroke="#9a9a9a"/><line x1="264.4" y1="685" x2="264.4" y2="689" stroke="#9a9a9a"/><line x1="276.8" y1="406" x2="276.8" y2="408.5" stroke="#9a9a9a"/><line x1="276.8" y1="686.5" x2="276.8" y2="689" stroke="#9a9a9a"/><line x1="289.2" y1="406" x2="289.2" y2="408.5" stroke="#9a9a9a"/><line x1="289.2" y1="686.5" x2="289.2" y2="689" stroke="#9a9a9a"/><line x1="301.7" y1="406" x2="301.7" y2="408.5" stroke="#9a9a9a"/><line x1="301.7" y1="686.5" x2="301.7" y2="689" stroke="#9a9a9a"/><line x1="314.1" y1="406" x2="314.1" y2="408.5" stroke="#9a9a9a"/><line x1="314.1" y1="686.5" x2="314.1" y2="689" stroke="#9a9a9a"/><line x1="326.5" y1="406" x2="326.5" y2="410" stroke="#9a9a9a"/><line x1="326.5" y1="685" x2="326.5" y2="689" stroke="#9a9a9a"/><line x1="338.9" y1="406" x2="338.9" y2="408.5" stroke="#9a9a9a"/><line x1="338.9" y1="686.5" x2="338.9" y2="689" stroke="#9a9a9a"/><line x1="351.3" y1="406" x2="351.3" y2="408.5" stroke="#9a9a9a"/><line x1="351.3" y1="686.5" x2="351.3" y2="689" stroke="#9a9a9a"/><line x1="363.8" y1="406" x2="363.8" y2="408.5" stroke="#9a9a9a"/><line x1="363.8" y1="686.5" x2="363.8" y2="689" stroke="#9a9a9a"/><line x1="376.2" y1="406" x2="376.2" y2="408.5" stroke="#9a9a9a"/><line x1="376.2" y1="686.5" x2="376.2" y2="689" stroke="#9a9a9a"/><line x1="388.6" y1="406" x2="388.6" y2="410" stroke="#9a9a9a"/><line x1="388.6" y1="685" x2="388.6" y2="689" stroke="#9a9a9a"/><line x1="401.0" y1="406" x2="401.0" y2="408.5" stroke="#9a9a9a"/><line x1="401.0" y1="686.5" x2="401.0" y2="689" stroke="#9a9a9a"/><line x1="413.4" y1="406" x2="413.4" y2="408.5" stroke="#9a9a9a"/><line x1="413.4" y1="686.5" x2="413.4" y2="689" stroke="#9a9a9a"/><line x1="425.9" y1="406" x2="425.9" y2="408.5" stroke="#9a9a9a"/><line x1="425.9" y1="686.5" x2="425.9" y2="689" stroke="#9a9a9a"/><line x1="438.3" y1="406" x2="438.3" y2="408.5" stroke="#9a9a9a"/><line x1="438.3" y1="686.5" x2="438.3" y2="689" stroke="#9a9a9a"/><line x1="450.7" y1="406" x2="450.7" y2="410" stroke="#9a9a9a"/><line x1="450.7" y1="685" x2="450.7" y2="689" stroke="#9a9a9a"/><line x1="463.1" y1="406" x2="463.1" y2="408.5" stroke="#9a9a9a"/><line x1="463.1" y1="686.5" x2="463.1" y2="689" stroke="#9a9a9a"/><line x1="475.5" y1="406" x2="475.5" y2="408.5" stroke="#9a9a9a"/><line x1="475.5" y1="686.5" x2="475.5" y2="689" stroke="#9a9a9a"/><line x1="488.0" y1="406" x2="488.0" y2="408.5" stroke="#9a9a9a"/><line x1="488.0" y1="686.5" x2="488.0" y2="689" stroke="#9a9a9a"/><line x1="500.4" y1="406" x2="500.4" y2="408.5" stroke="#9a9a9a"/><line x1="500.4" y1="686.5" x2="500.4" y2="689" stroke="#9a9a9a"/><line x1="512.8" y1="406" x2="512.8" y2="410" stroke="#9a9a9a"/><line x1="512.8" y1="685" x2="512.8" y2="689" stroke="#9a9a9a"/><line x1="525.2" y1="406" x2="525.2" y2="408.5" stroke="#9a9a9a"/><line x1="525.2" y1="686.5" x2="525.2" y2="689" stroke="#9a9a9a"/><line x1="537.6" y1="406" x2="537.6" y2="408.5" stroke="#9a9a9a"/><line x1="537.6" y1="686.5" x2="537.6" y2="689" stroke="#9a9a9a"/><line x1="550.1" y1="406" x2="550.1" y2="408.5" stroke="#9a9a9a"/><line x1="550.1" y1="686.5" x2="550.1" y2="689" stroke="#9a9a9a"/><line x1="562.5" y1="406" x2="562.5" y2="408.5" stroke="#9a9a9a"/><line x1="562.5" y1="686.5" x2="562.5" y2="689" stroke="#9a9a9a"/><line x1="574.9" y1="406" x2="574.9" y2="410" stroke="#9a9a9a"/><line x1="574.9" y1="685" x2="574.9" y2="689" stroke="#9a9a9a"/><line x1="587.3" y1="406" x2="587.3" y2="408.5" stroke="#9a9a9a"/><line x1="587.3" y1="686.5" x2="587.3" y2="689" stroke="#9a9a9a"/><line x1="599.7" y1="406" x2="599.7" y2="408.5" stroke="#9a9a9a"/><line x1="599.7" y1="686.5" x2="599.7" y2="689" stroke="#9a9a9a"/><line x1="612.2" y1="406" x2="612.2" y2="408.5" stroke="#9a9a9a"/><line x1="612.2" y1="686.5" x2="612.2" y2="689" stroke="#9a9a9a"/><line x1="624.6" y1="406" x2="624.6" y2="408.5" stroke="#9a9a9a"/><line x1="624.6" y1="686.5" x2="624.6" y2="689" stroke="#9a9a9a"/><line x1="637.0" y1="406" x2="637.0" y2="410" stroke="#9a9a9a"/><line x1="637.0" y1="685" x2="637.0" y2="689" stroke="#9a9a9a"/><line x1="15" y1="406.0" x2="19" y2="406.0" stroke="#9a9a9a"/><line x1="633" y1="406.0" x2="637" y2="406.0" stroke="#9a9a9a"/><line x1="15" y1="413.1" x2="17.5" y2="413.1" stroke="#9a9a9a"/><line x1="634.5" y1="413.1" x2="637" y2="413.1" stroke="#9a9a9a"/><line x1="15" y1="420.2" x2="17.5" y2="420.2" stroke="#9a9a9a"/><line x1="634.5" y1="420.2" x2="637" y2="420.2" stroke="#9a9a9a"/><line x1="15" y1="427.2" x2="17.5" y2="427.2" stroke="#9a9a9a"/><line x1="634.5" y1="427.2" x2="637" y2="427.2" stroke="#9a9a9a"/><line x1="15" y1="434.3" x2="17.5" y2="434.3" stroke="#9a9a9a"/><line x1="634.5" y1="434.3" x2="637" y2="434.3" stroke="#9a9a9a"/><line x1="15" y1="441.4" x2="19" y2="441.4" stroke="#9a9a9a"/><line x1="633" y1="441.4" x2="637" y2="441.4" stroke="#9a9a9a"/><line x1="15" y1="448.5" x2="17.5" y2="448.5" stroke="#9a9a9a"/><line x1="634.5" y1="448.5" x2="637" y2="448.5" stroke="#9a9a9a"/><line x1="15" y1="455.6" x2="17.5" y2="455.6" stroke="#9a9a9a"/><line x1="634.5" y1="455.6" x2="637" y2="455.6" stroke="#9a9a9a"/><line x1="15" y1="462.6" x2="17.5" y2="462.6" stroke="#9a9a9a"/><line x1="634.5" y1="462.6" x2="637" y2="462.6" stroke="#9a9a9a"/><line x1="15" y1="469.7" x2="17.5" y2="469.7" stroke="#9a9a9a"/><line x1="634.5" y1="469.7" x2="637" y2="469.7" stroke="#9a9a9a"/><line x1="15" y1="476.8" x2="19" y2="476.8" stroke="#9a9a9a"/><line x1="633" y1="476.8" x2="637" y2="476.8" stroke="#9a9a9a"/><line x1="15" y1="483.9" x2="17.5" y2="483.9" stroke="#9a9a9a"/><line x1="634.5" y1="483.9" x2="637" y2="483.9" stroke="#9a9a9a"/><line x1="15" y1="491.0" x2="17.5" y2="491.0" stroke="#9a9a9a"/><line x1="634.5" y1="491.0" x2="637" y2="491.0" stroke="#9a9a9a"/><line x1="15" y1="498.0" x2="17.5" y2="498.0" stroke="#9a9a9a"/><line x1="634.5" y1="498.0" x2="637" y2="498.0" stroke="#9a9a9a"/><line x1="15" y1="505.1" x2="17.5" y2="505.1" stroke="#9a9a9a"/><line x1="634.5" y1="505.1" x2="637" y2="505.1" stroke="#9a9a9a"/><line x1="15" y1="512.2" x2="19" y2="512.2" stroke="#9a9a9a"/><line x1="633" y1="512.2" x2="637" y2="512.2" stroke="#9a9a9a"/><line x1="15" y1="519.3" x2="17.5" y2="519.3" stroke="#9a9a9a"/><line x1="634.5" y1="519.3" x2="637" y2="519.3" stroke="#9a9a9a"/><line x1="15" y1="526.4" x2="17.5" y2="526.4" stroke="#9a9a9a"/><line x1="634.5" y1="526.4" x2="637" y2="526.4" stroke="#9a9a9a"/><line x1="15" y1="533.4" x2="17.5" y2="533.4" stroke="#9a9a9a"/><line x1="634.5" y1="533.4" x2="637" y2="533.4" stroke="#9a9a9a"/><line x1="15" y1="540.5" x2="17.5" y2="540.5" stroke="#9a9a9a"/><line x1="634.5" y1="540.5" x2="637" y2="540.5" stroke="#9a9a9a"/><line x1="15" y1="547.6" x2="19" y2="547.6" stroke="#9a9a9a"/><line x1="633" y1="547.6" x2="637" y2="547.6" stroke="#9a9a9a"/><line x1="15" y1="554.7" x2="17.5" y2="554.7" stroke="#9a9a9a"/><line x1="634.5" y1="554.7" x2="637" y2="554.7" stroke="#9a9a9a"/><line x1="15" y1="561.8" x2="17.5" y2="561.8" stroke="#9a9a9a"/><line x1="634.5" y1="561.8" x2="637" y2="561.8" stroke="#9a9a9a"/><line x1="15" y1="568.8" x2="17.5" y2="568.8" stroke="#9a9a9a"/><line x1="634.5" y1="568.8" x2="637" y2="568.8" stroke="#9a9a9a"/><line x1="15" y1="575.9" x2="17.5" y2="575.9" stroke="#9a9a9a"/><line x1="634.5" y1="575.9" x2="637" y2="575.9" stroke="#9a9a9a"/><line x1="15" y1="583.0" x2="19" y2="583.0" stroke="#9a9a9a"/><line x1="633" y1="583.0" x2="637" y2="583.0" stroke="#9a9a9a"/><line x1="15" y1="590.1" x2="17.5" y2="590.1" stroke="#9a9a9a"/><line x1="634.5" y1="590.1" x2="637" y2="590.1" stroke="#9a9a9a"/><line x1="15" y1="597.2" x2="17.5" y2="597.2" stroke="#9a9a9a"/><line x1="634.5" y1="597.2" x2="637" y2="597.2" stroke="#9a9a9a"/><line x1="15" y1="604.2" x2="17.5" y2="604.2" stroke="#9a9a9a"/><line x1="634.5" y1="604.2" x2="637" y2="604.2" stroke="#9a9a9a"/><line x1="15" y1="611.3" x2="17.5" y2="611.3" stroke="#9a9a9a"/><line x1="634.5" y1="611.3" x2="637" y2="611.3" stroke="#9a9a9a"/><line x1="15" y1="618.4" x2="19" y2="618.4" stroke="#9a9a9a"/><line x1="633" y1="618.4" x2="637" y2="618.4" stroke="#9a9a9a"/><line x1="15" y1="625.5" x2="17.5" y2="625.5" stroke="#9a9a9a"/><line x1="634.5" y1="625.5" x2="637" y2="625.5" stroke="#9a9a9a"/><line x1="15" y1="632.6" x2="17.5" y2="632.6" stroke="#9a9a9a"/><line x1="634.5" y1="632.6" x2="637" y2="632.6" stroke="#9a9a9a"/><line x1="15" y1="639.6" x2="17.5" y2="639.6" stroke="#9a9a9a"/><line x1="634.5" y1="639.6" x2="637" y2="639.6" stroke="#9a9a9a"/><line x1="15" y1="646.7" x2="17.5" y2="646.7" stroke="#9a9a9a"/><line x1="634.5" y1="646.7" x2="637" y2="646.7" stroke="#9a9a9a"/><line x1="15" y1="653.8" x2="19" y2="653.8" stroke="#9a9a9a"/><line x1="633" y1="653.8" x2="637" y2="653.8" stroke="#9a9a9a"/><line x1="15" y1="660.9" x2="17.5" y2="660.9" stroke="#9a9a9a"/><line x1="634.5" y1="660.9" x2="637" y2="660.9" stroke="#9a9a9a"/><line x1="15" y1="668.0" x2="17.5" y2="668.0" stroke="#9a9a9a"/><line x1="634.5" y1="668.0" x2="637" y2="668.0" stroke="#9a9a9a"/><line x1="15" y1="675.0" x2="17.5" y2="675.0" stroke="#9a9a9a"/><line x1="634.5" y1="675.0" x2="637" y2="675.0" stroke="#9a9a9a"/><line x1="15" y1="682.1" x2="17.5" y2="682.1" stroke="#9a9a9a"/><line x1="634.5" y1="682.1" x2="637" y2="682.1" stroke="#9a9a9a"/><line x1="15" y1="689.2" x2="19" y2="689.2" stroke="#9a9a9a"/><line x1="633" y1="689.2" x2="637" y2="689.2" stroke="#9a9a9a"/><rect x="16.0" y="584.5" width="32.8" height="3" fill="#cac41a"/><rect x="16.0" y="583" width="32.8" height="1.5" fill="#8a8412" opacity="0.8"/><rect x="16.0" y="587.5" width="32.8" height="1.5" fill="#6a6410" opacity="0.8"/><rect x="16.0" y="477.0" width="32.8" height="3.5" fill="#34c4ca"/><rect x="16.0" y="475.5" width="32.8" height="1.5" fill="#1a8a90" opacity="0.8"/><rect x="16.0" y="480.5" width="32.8" height="1.5" fill="#1a7a80" opacity="0.8"/><rect x="49.8" y="425.0" width="29.2" height="3" fill="#cac41a"/><rect x="49.8" y="423.5" width="29.2" height="1.5" fill="#8a8412" opacity="0.8"/><rect x="49.8" y="428.0" width="29.2" height="1.5" fill="#6a6410" opacity="0.8"/><rect x="49.8" y="636.5" width="29.2" height="3.5" fill="#34c4ca"/><rect x="49.8" y="635" width="29.2" height="1.5" fill="#1a8a90" opacity="0.8"/><rect x="49.8" y="640" width="29.2" height="1.5" fill="#1a7a80" opacity="0.8"/><rect x="49.3" y="417.5" width="1.8" height="9" fill="#c8c020" opacity="0.75"/><rect x="49.3" y="638" width="1.8" height="11" fill="#30b8c0" opacity="0.6"/><rect x="80.0" y="584.5" width="15.2" height="3" fill="#cac41a"/><rect x="80.0" y="583" width="15.2" height="1.5" fill="#8a8412" opacity="0.8"/><rect x="80.0" y="587.5" width="15.2" height="1.5" fill="#6a6410" opacity="0.8"/><rect x="80.0" y="477.0" width="15.2" height="3.5" fill="#34c4ca"/><rect x="80.0" y="475.5" width="15.2" height="1.5" fill="#1a8a90" opacity="0.8"/><rect x="80.0" y="480.5" width="15.2" height="1.5" fill="#1a7a80" opacity="0.8"/><rect x="79.5" y="586" width="1.8" height="11" fill="#b8b020" opacity="0.6"/><rect x="79.5" y="478.5" width="1.8" height="11" fill="#30b8c0" opacity="0.6"/><rect x="96.2" y="425.0" width="22.4" height="3" fill="#cac41a"/><rect x="96.2" y="423.5" width="22.4" height="1.5" fill="#8a8412" opacity="0.8"/><rect x="96.2" y="428.0" width="22.4" height="1.5" fill="#6a6410" opacity="0.8"/><rect x="96.2" y="636.5" width="22.4" height="3.5" fill="#34c4ca"/><rect x="96.2" y="635" width="22.4" height="1.5" fill="#1a8a90" opacity="0.8"/><rect x="96.2" y="640" width="22.4" height="1.5" fill="#1a7a80" opacity="0.8"/><rect x="95.7" y="417.5" width="1.8" height="9" fill="#c8c020" opacity="0.75"/><rect x="95.7" y="638" width="1.8" height="11" fill="#30b8c0" opacity="0.6"/><rect x="119.6" y="584.5" width="7.2" height="3" fill="#cac41a"/><rect x="119.6" y="583" width="7.2" height="1.5" fill="#8a8412" opacity="0.8"/><rect x="119.6" y="587.5" width="7.2" height="1.5" fill="#6a6410" opacity="0.8"/><rect x="119.6" y="477.0" width="7.2" height="3.5" fill="#34c4ca"/><rect x="119.6" y="475.5" width="7.2" height="1.5" fill="#1a8a90" opacity="0.8"/><rect x="119.6" y="480.5" width="7.2" height="1.5" fill="#1a7a80" opacity="0.8"/><rect x="119.1" y="586" width="1.8" height="11" fill="#b8b020" opacity="0.6"/><rect x="119.1" y="478.5" width="1.8" height="11" fill="#30b8c0" opacity="0.6"/><rect x="127.8" y="425.0" width="6.4" height="3" fill="#cac41a"/><rect x="127.8" y="423.5" width="6.4" height="1.5" fill="#8a8412" opacity="0.8"/><rect x="127.8" y="428.0" width="6.4" height="1.5" fill="#6a6410" opacity="0.8"/><rect x="127.8" y="636.5" width="6.4" height="3.5" fill="#34c4ca"/><rect x="127.8" y="635" width="6.4" height="1.5" fill="#1a8a90" opacity="0.8"/><rect x="127.8" y="640" width="6.4" height="1.5" fill="#1a7a80" opacity="0.8"/><rect x="127.3" y="417.5" width="1.8" height="9" fill="#c8c020" opacity="0.75"/><rect x="127.3" y="638" width="1.8" height="11" fill="#30b8c0" opacity="0.6"/><rect x="135.2" y="584.5" width="6.5" height="3" fill="#cac41a"/><rect x="135.2" y="583" width="6.5" height="1.5" fill="#8a8412" opacity="0.8"/><rect x="135.2" y="587.5" width="6.5" height="1.5" fill="#6a6410" opacity="0.8"/><rect x="135.2" y="477.0" width="6.5" height="3.5" fill="#34c4ca"/><rect x="135.2" y="475.5" width="6.5" height="1.5" fill="#1a8a90" opacity="0.8"/><rect x="135.2" y="480.5" width="6.5" height="1.5" fill="#1a7a80" opacity="0.8"/><rect x="134.7" y="586" width="1.8" height="11" fill="#b8b020" opacity="0.6"/><rect x="134.7" y="478.5" width="1.8" height="11" fill="#30b8c0" opacity="0.6"/><rect x="142.7" y="425.0" width="14.3" height="3" fill="#cac41a"/><rect x="142.7" y="423.5" width="14.3" height="1.5" fill="#8a8412" opacity="0.8"/><rect x="142.7" y="428.0" width="14.3" height="1.5" fill="#6a6410" opacity="0.8"/><rect x="142.7" y="636.5" width="14.3" height="3.5" fill="#34c4ca"/><rect x="142.7" y="635" width="14.3" height="1.5" fill="#1a8a90" opacity="0.8"/><rect x="142.7" y="640" width="14.3" height="1.5" fill="#1a7a80" opacity="0.8"/><rect x="142.2" y="417.5" width="1.8" height="9" fill="#c8c020" opacity="0.75"/><rect x="142.2" y="638" width="1.8" height="11" fill="#30b8c0" opacity="0.6"/><rect x="158.0" y="584.5" width="38.0" height="3" fill="#cac41a"/><rect x="158.0" y="583" width="38.0" height="1.5" fill="#8a8412" opacity="0.8"/><rect x="158.0" y="587.5" width="38.0" height="1.5" fill="#6a6410" opacity="0.8"/><rect x="158.0" y="477.0" width="38.0" height="3.5" fill="#34c4ca"/><rect x="158.0" y="475.5" width="38.0" height="1.5" fill="#1a8a90" opacity="0.8"/><rect x="158.0" y="480.5" width="38.0" height="1.5" fill="#1a7a80" opacity="0.8"/><rect x="157.5" y="586" width="1.8" height="11" fill="#b8b020" opacity="0.6"/><rect x="157.5" y="478.5" width="1.8" height="11" fill="#30b8c0" opacity="0.6"/><rect x="197.0" y="425.0" width="7.0" height="3" fill="#cac41a"/><rect x="197.0" y="423.5" width="7.0" height="1.5" fill="#8a8412" opacity="0.8"/><rect x="197.0" y="428.0" width="7.0" height="1.5" fill="#6a6410" opacity="0.8"/><rect x="197.0" y="636.5" width="7.0" height="3.5" fill="#34c4ca"/><rect x="197.0" y="635" width="7.0" height="1.5" fill="#1a8a90" opacity="0.8"/><rect x="197.0" y="640" width="7.0" height="1.5" fill="#1a7a80" opacity="0.8"/><rect x="196.5" y="417.5" width="1.8" height="9" fill="#c8c020" opacity="0.75"/><rect x="196.5" y="638" width="1.8" height="11" fill="#30b8c0" opacity="0.6"/><rect x="205.0" y="584.5" width="6.6" height="3" fill="#cac41a"/><rect x="205.0" y="583" width="6.6" height="1.5" fill="#8a8412" opacity="0.8"/><rect x="205.0" y="587.5" width="6.6" height="1.5" fill="#6a6410" opacity="0.8"/><rect x="205.0" y="477.0" width="6.6" height="3.5" fill="#34c4ca"/><rect x="205.0" y="475.5" width="6.6" height="1.5" fill="#1a8a90" opacity="0.8"/><rect x="205.0" y="480.5" width="6.6" height="1.5" fill="#1a7a80" opacity="0.8"/><rect x="204.5" y="586" width="1.8" height="11" fill="#b8b020" opacity="0.6"/><rect x="204.5" y="478.5" width="1.8" height="11" fill="#30b8c0" opacity="0.6"/><rect x="212.6" y="425.0" width="7.8" height="3" fill="#cac41a"/><rect x="212.6" y="423.5" width="7.8" height="1.5" fill="#8a8412" opacity="0.8"/><rect x="212.6" y="428.0" width="7.8" height="1.5" fill="#6a6410" opacity="0.8"/><rect x="212.6" y="636.5" width="7.8" height="3.5" fill="#34c4ca"/><rect x="212.6" y="635" width="7.8" height="1.5" fill="#1a8a90" opacity="0.8"/><rect x="212.6" y="640" width="7.8" height="1.5" fill="#1a7a80" opacity="0.8"/><rect x="212.1" y="417.5" width="1.8" height="9" fill="#c8c020" opacity="0.75"/><rect x="212.1" y="638" width="1.8" height="11" fill="#30b8c0" opacity="0.6"/><rect x="221.4" y="584.5" width="6.4" height="3" fill="#cac41a"/><rect x="221.4" y="583" width="6.4" height="1.5" fill="#8a8412" opacity="0.8"/><rect x="221.4" y="587.5" width="6.4" height="1.5" fill="#6a6410" opacity="0.8"/><rect x="221.4" y="477.0" width="6.4" height="3.5" fill="#34c4ca"/><rect x="221.4" y="475.5" width="6.4" height="1.5" fill="#1a8a90" opacity="0.8"/><rect x="221.4" y="480.5" width="6.4" height="1.5" fill="#1a7a80" opacity="0.8"/><rect x="220.9" y="586" width="1.8" height="11" fill="#b8b020" opacity="0.6"/><rect x="220.9" y="478.5" width="1.8" height="11" fill="#30b8c0" opacity="0.6"/><rect x="228.8" y="425.0" width="6.8" height="3" fill="#cac41a"/><rect x="228.8" y="423.5" width="6.8" height="1.5" fill="#8a8412" opacity="0.8"/><rect x="228.8" y="428.0" width="6.8" height="1.5" fill="#6a6410" opacity="0.8"/><rect x="228.8" y="636.5" width="6.8" height="3.5" fill="#34c4ca"/><rect x="228.8" y="635" width="6.8" height="1.5" fill="#1a8a90" opacity="0.8"/><rect x="228.8" y="640" width="6.8" height="1.5" fill="#1a7a80" opacity="0.8"/><rect x="228.3" y="417.5" width="1.8" height="9" fill="#c8c020" opacity="0.75"/><rect x="228.3" y="638" width="1.8" height="11" fill="#30b8c0" opacity="0.6"/><rect x="236.6" y="584.5" width="14.0" height="3" fill="#cac41a"/><rect x="236.6" y="583" width="14.0" height="1.5" fill="#8a8412" opacity="0.8"/><rect x="236.6" y="587.5" width="14.0" height="1.5" fill="#6a6410" opacity="0.8"/><rect x="236.6" y="477.0" width="14.0" height="3.5" fill="#34c4ca"/><rect x="236.6" y="475.5" width="14.0" height="1.5" fill="#1a8a90" opacity="0.8"/><rect x="236.6" y="480.5" width="14.0" height="1.5" fill="#1a7a80" opacity="0.8"/><rect x="236.1" y="586" width="1.8" height="11" fill="#b8b020" opacity="0.6"/><rect x="236.1" y="478.5" width="1.8" height="11" fill="#30b8c0" opacity="0.6"/><rect x="251.6" y="425.0" width="6.8" height="3" fill="#cac41a"/><rect x="251.6" y="423.5" width="6.8" height="1.5" fill="#8a8412" opacity="0.8"/><rect x="251.6" y="428.0" width="6.8" height="1.5" fill="#6a6410" opacity="0.8"/><rect x="251.6" y="636.5" width="6.8" height="3.5" fill="#34c4ca"/><rect x="251.6" y="635" width="6.8" height="1.5" fill="#1a8a90" opacity="0.8"/><rect x="251.6" y="640" width="6.8" height="1.5" fill="#1a7a80" opacity="0.8"/><rect x="251.1" y="417.5" width="1.8" height="9" fill="#c8c020" opacity="0.75"/><rect x="251.1" y="638" width="1.8" height="11" fill="#30b8c0" opacity="0.6"/><rect x="259.4" y="584.5" width="7.1" height="3" fill="#cac41a"/><rect x="259.4" y="583" width="7.1" height="1.5" fill="#8a8412" opacity="0.8"/><rect x="259.4" y="587.5" width="7.1" height="1.5" fill="#6a6410" opacity="0.8"/><rect x="259.4" y="477.0" width="7.1" height="3.5" fill="#34c4ca"/><rect x="259.4" y="475.5" width="7.1" height="1.5" fill="#1a8a90" opacity="0.8"/><rect x="259.4" y="480.5" width="7.1" height="1.5" fill="#1a7a80" opacity="0.8"/><rect x="258.9" y="586" width="1.8" height="11" fill="#b8b020" opacity="0.6"/><rect x="258.9" y="478.5" width="1.8" height="11" fill="#30b8c0" opacity="0.6"/><rect x="267.5" y="425.0" width="7.1" height="3" fill="#cac41a"/><rect x="267.5" y="423.5" width="7.1" height="1.5" fill="#8a8412" opacity="0.8"/><rect x="267.5" y="428.0" width="7.1" height="1.5" fill="#6a6410" opacity="0.8"/><rect x="267.5" y="636.5" width="7.1" height="3.5" fill="#34c4ca"/><rect x="267.5" y="635" width="7.1" height="1.5" fill="#1a8a90" opacity="0.8"/><rect x="267.5" y="640" width="7.1" height="1.5" fill="#1a7a80" opacity="0.8"/><rect x="267.0" y="417.5" width="1.8" height="9" fill="#c8c020" opacity="0.75"/><rect x="267.0" y="638" width="1.8" height="11" fill="#30b8c0" opacity="0.6"/><rect x="275.6" y="584.5" width="6.4" height="3" fill="#cac41a"/><rect x="275.6" y="583" width="6.4" height="1.5" fill="#8a8412" opacity="0.8"/><rect x="275.6" y="587.5" width="6.4" height="1.5" fill="#6a6410" opacity="0.8"/><rect x="275.6" y="477.0" width="6.4" height="3.5" fill="#34c4ca"/><rect x="275.6" y="475.5" width="6.4" height="1.5" fill="#1a8a90" opacity="0.8"/><rect x="275.6" y="480.5" width="6.4" height="1.5" fill="#1a7a80" opacity="0.8"/><rect x="275.1" y="586" width="1.8" height="11" fill="#b8b020" opacity="0.6"/><rect x="275.1" y="478.5" width="1.8" height="11" fill="#30b8c0" opacity="0.6"/><rect x="283.0" y="425.0" width="7.0" height="3" fill="#cac41a"/><rect x="283.0" y="423.5" width="7.0" height="1.5" fill="#8a8412" opacity="0.8"/><rect x="283.0" y="428.0" width="7.0" height="1.5" fill="#6a6410" opacity="0.8"/><rect x="283.0" y="636.5" width="7.0" height="3.5" fill="#34c4ca"/><rect x="283.0" y="635" width="7.0" height="1.5" fill="#1a8a90" opacity="0.8"/><rect x="283.0" y="640" width="7.0" height="1.5" fill="#1a7a80" opacity="0.8"/><rect x="282.5" y="417.5" width="1.8" height="9" fill="#c8c020" opacity="0.75"/><rect x="282.5" y="638" width="1.8" height="11" fill="#30b8c0" opacity="0.6"/><rect x="291.0" y="584.5" width="6.7" height="3" fill="#cac41a"/><rect x="291.0" y="583" width="6.7" height="1.5" fill="#8a8412" opacity="0.8"/><rect x="291.0" y="587.5" width="6.7" height="1.5" fill="#6a6410" opacity="0.8"/><rect x="291.0" y="477.0" width="6.7" height="3.5" fill="#34c4ca"/><rect x="291.0" y="475.5" width="6.7" height="1.5" fill="#1a8a90" opacity="0.8"/><rect x="291.0" y="480.5" width="6.7" height="1.5" fill="#1a7a80" opacity="0.8"/><rect x="290.5" y="586" width="1.8" height="11" fill="#b8b020" opacity="0.6"/><rect x="290.5" y="478.5" width="1.8" height="11" fill="#30b8c0" opacity="0.6"/><rect x="298.7" y="425.0" width="14.3" height="3" fill="#cac41a"/><rect x="298.7" y="423.5" width="14.3" height="1.5" fill="#8a8412" opacity="0.8"/><rect x="298.7" y="428.0" width="14.3" height="1.5" fill="#6a6410" opacity="0.8"/><rect x="298.7" y="636.5" width="14.3" height="3.5" fill="#34c4ca"/><rect x="298.7" y="635" width="14.3" height="1.5" fill="#1a8a90" opacity="0.8"/><rect x="298.7" y="640" width="14.3" height="1.5" fill="#1a7a80" opacity="0.8"/><rect x="298.2" y="417.5" width="1.8" height="9" fill="#c8c020" opacity="0.75"/><rect x="298.2" y="638" width="1.8" height="11" fill="#30b8c0" opacity="0.6"/><rect x="314.0" y="584.5" width="13.6" height="3" fill="#cac41a"/><rect x="314.0" y="583" width="13.6" height="1.5" fill="#8a8412" opacity="0.8"/><rect x="314.0" y="587.5" width="13.6" height="1.5" fill="#6a6410" opacity="0.8"/><rect x="314.0" y="477.0" width="13.6" height="3.5" fill="#34c4ca"/><rect x="314.0" y="475.5" width="13.6" height="1.5" fill="#1a8a90" opacity="0.8"/><rect x="314.0" y="480.5" width="13.6" height="1.5" fill="#1a7a80" opacity="0.8"/><rect x="313.5" y="586" width="1.8" height="11" fill="#b8b020" opacity="0.6"/><rect x="313.5" y="478.5" width="1.8" height="11" fill="#30b8c0" opacity="0.6"/><rect x="328.6" y="425.0" width="7.4" height="3" fill="#cac41a"/><rect x="328.6" y="423.5" width="7.4" height="1.5" fill="#8a8412" opacity="0.8"/><rect x="328.6" y="428.0" width="7.4" height="1.5" fill="#6a6410" opacity="0.8"/><rect x="328.6" y="636.5" width="7.4" height="3.5" fill="#34c4ca"/><rect x="328.6" y="635" width="7.4" height="1.5" fill="#1a8a90" opacity="0.8"/><rect x="328.6" y="640" width="7.4" height="1.5" fill="#1a7a80" opacity="0.8"/><rect x="328.1" y="417.5" width="1.8" height="9" fill="#c8c020" opacity="0.75"/><rect x="328.1" y="638" width="1.8" height="11" fill="#30b8c0" opacity="0.6"/><rect x="337.0" y="584.5" width="15.0" height="3" fill="#cac41a"/><rect x="337.0" y="583" width="15.0" height="1.5" fill="#8a8412" opacity="0.8"/><rect x="337.0" y="587.5" width="15.0" height="1.5" fill="#6a6410" opacity="0.8"/><rect x="337.0" y="477.0" width="15.0" height="3.5" fill="#34c4ca"/><rect x="337.0" y="475.5" width="15.0" height="1.5" fill="#1a8a90" opacity="0.8"/><rect x="337.0" y="480.5" width="15.0" height="1.5" fill="#1a7a80" opacity="0.8"/><rect x="336.5" y="586" width="1.8" height="11" fill="#b8b020" opacity="0.6"/><rect x="336.5" y="478.5" width="1.8" height="11" fill="#30b8c0" opacity="0.6"/><rect x="353.0" y="425.0" width="21.7" height="3" fill="#cac41a"/><rect x="353.0" y="423.5" width="21.7" height="1.5" fill="#8a8412" opacity="0.8"/><rect x="353.0" y="428.0" width="21.7" height="1.5" fill="#6a6410" opacity="0.8"/><rect x="353.0" y="636.5" width="21.7" height="3.5" fill="#34c4ca"/><rect x="353.0" y="635" width="21.7" height="1.5" fill="#1a8a90" opacity="0.8"/><rect x="353.0" y="640" width="21.7" height="1.5" fill="#1a7a80" opacity="0.8"/><rect x="352.5" y="417.5" width="1.8" height="9" fill="#c8c020" opacity="0.75"/><rect x="352.5" y="638" width="1.8" height="11" fill="#30b8c0" opacity="0.6"/><rect x="375.7" y="584.5" width="8.1" height="3" fill="#cac41a"/><rect x="375.7" y="583" width="8.1" height="1.5" fill="#8a8412" opacity="0.8"/><rect x="375.7" y="587.5" width="8.1" height="1.5" fill="#6a6410" opacity="0.8"/><rect x="375.7" y="477.0" width="8.1" height="3.5" fill="#34c4ca"/><rect x="375.7" y="475.5" width="8.1" height="1.5" fill="#1a8a90" opacity="0.8"/><rect x="375.7" y="480.5" width="8.1" height="1.5" fill="#1a7a80" opacity="0.8"/><rect x="375.2" y="586" width="1.8" height="11" fill="#b8b020" opacity="0.6"/><rect x="375.2" y="478.5" width="1.8" height="11" fill="#30b8c0" opacity="0.6"/><rect x="384.8" y="425.0" width="6.2" height="3" fill="#cac41a"/><rect x="384.8" y="423.5" width="6.2" height="1.5" fill="#8a8412" opacity="0.8"/><rect x="384.8" y="428.0" width="6.2" height="1.5" fill="#6a6410" opacity="0.8"/><rect x="384.8" y="636.5" width="6.2" height="3.5" fill="#34c4ca"/><rect x="384.8" y="635" width="6.2" height="1.5" fill="#1a8a90" opacity="0.8"/><rect x="384.8" y="640" width="6.2" height="1.5" fill="#1a7a80" opacity="0.8"/><rect x="384.3" y="417.5" width="1.8" height="9" fill="#c8c020" opacity="0.75"/><rect x="384.3" y="638" width="1.8" height="11" fill="#30b8c0" opacity="0.6"/><rect x="392.0" y="584.5" width="15.0" height="3" fill="#cac41a"/><rect x="392.0" y="583" width="15.0" height="1.5" fill="#8a8412" opacity="0.8"/><rect x="392.0" y="587.5" width="15.0" height="1.5" fill="#6a6410" opacity="0.8"/><rect x="392.0" y="477.0" width="15.0" height="3.5" fill="#34c4ca"/><rect x="392.0" y="475.5" width="15.0" height="1.5" fill="#1a8a90" opacity="0.8"/><rect x="392.0" y="480.5" width="15.0" height="1.5" fill="#1a7a80" opacity="0.8"/><rect x="391.5" y="586" width="1.8" height="11" fill="#b8b020" opacity="0.6"/><rect x="391.5" y="478.5" width="1.8" height="11" fill="#30b8c0" opacity="0.6"/><rect x="408.0" y="425.0" width="6.4" height="3" fill="#cac41a"/><rect x="408.0" y="423.5" width="6.4" height="1.5" fill="#8a8412" opacity="0.8"/><rect x="408.0" y="428.0" width="6.4" height="1.5" fill="#6a6410" opacity="0.8"/><rect x="408.0" y="636.5" width="6.4" height="3.5" fill="#34c4ca"/><rect x="408.0" y="635" width="6.4" height="1.5" fill="#1a8a90" opacity="0.8"/><rect x="408.0" y="640" width="6.4" height="1.5" fill="#1a7a80" opacity="0.8"/><rect x="407.5" y="417.5" width="1.8" height="9" fill="#c8c020" opacity="0.75"/><rect x="407.5" y="638" width="1.8" height="11" fill="#30b8c0" opacity="0.6"/><rect x="415.4" y="584.5" width="14.6" height="3" fill="#cac41a"/><rect x="415.4" y="583" width="14.6" height="1.5" fill="#8a8412" opacity="0.8"/><rect x="415.4" y="587.5" width="14.6" height="1.5" fill="#6a6410" opacity="0.8"/><rect x="415.4" y="477.0" width="14.6" height="3.5" fill="#34c4ca"/><rect x="415.4" y="475.5" width="14.6" height="1.5" fill="#1a8a90" opacity="0.8"/><rect x="415.4" y="480.5" width="14.6" height="1.5" fill="#1a7a80" opacity="0.8"/><rect x="414.9" y="586" width="1.8" height="11" fill="#b8b020" opacity="0.6"/><rect x="414.9" y="478.5" width="1.8" height="11" fill="#30b8c0" opacity="0.6"/><rect x="431.0" y="425.0" width="7.0" height="3" fill="#cac41a"/><rect x="431.0" y="423.5" width="7.0" height="1.5" fill="#8a8412" opacity="0.8"/><rect x="431.0" y="428.0" width="7.0" height="1.5" fill="#6a6410" opacity="0.8"/><rect x="431.0" y="636.5" width="7.0" height="3.5" fill="#34c4ca"/><rect x="431.0" y="635" width="7.0" height="1.5" fill="#1a8a90" opacity="0.8"/><rect x="431.0" y="640" width="7.0" height="1.5" fill="#1a7a80" opacity="0.8"/><rect x="430.5" y="417.5" width="1.8" height="9" fill="#c8c020" opacity="0.75"/><rect x="430.5" y="638" width="1.8" height="11" fill="#30b8c0" opacity="0.6"/><rect x="439.0" y="584.5" width="13.7" height="3" fill="#cac41a"/><rect x="439.0" y="583" width="13.7" height="1.5" fill="#8a8412" opacity="0.8"/><rect x="439.0" y="587.5" width="13.7" height="1.5" fill="#6a6410" opacity="0.8"/><rect x="439.0" y="477.0" width="13.7" height="3.5" fill="#34c4ca"/><rect x="439.0" y="475.5" width="13.7" height="1.5" fill="#1a8a90" opacity="0.8"/><rect x="439.0" y="480.5" width="13.7" height="1.5" fill="#1a7a80" opacity="0.8"/><rect x="438.5" y="586" width="1.8" height="11" fill="#b8b020" opacity="0.6"/><rect x="438.5" y="478.5" width="1.8" height="11" fill="#30b8c0" opacity="0.6"/><rect x="453.7" y="425.0" width="15.3" height="3" fill="#cac41a"/><rect x="453.7" y="423.5" width="15.3" height="1.5" fill="#8a8412" opacity="0.8"/><rect x="453.7" y="428.0" width="15.3" height="1.5" fill="#6a6410" opacity="0.8"/><rect x="453.7" y="636.5" width="15.3" height="3.5" fill="#34c4ca"/><rect x="453.7" y="635" width="15.3" height="1.5" fill="#1a8a90" opacity="0.8"/><rect x="453.7" y="640" width="15.3" height="1.5" fill="#1a7a80" opacity="0.8"/><rect x="453.2" y="417.5" width="1.8" height="9" fill="#c8c020" opacity="0.75"/><rect x="453.2" y="638" width="1.8" height="11" fill="#30b8c0" opacity="0.6"/><rect x="470.0" y="584.5" width="21.4" height="3" fill="#cac41a"/><rect x="470.0" y="583" width="21.4" height="1.5" fill="#8a8412" opacity="0.8"/><rect x="470.0" y="587.5" width="21.4" height="1.5" fill="#6a6410" opacity="0.8"/><rect x="470.0" y="477.0" width="21.4" height="3.5" fill="#34c4ca"/><rect x="470.0" y="475.5" width="21.4" height="1.5" fill="#1a8a90" opacity="0.8"/><rect x="470.0" y="480.5" width="21.4" height="1.5" fill="#1a7a80" opacity="0.8"/><rect x="469.5" y="586" width="1.8" height="11" fill="#b8b020" opacity="0.6"/><rect x="469.5" y="478.5" width="1.8" height="11" fill="#30b8c0" opacity="0.6"/><rect x="492.4" y="425.0" width="7.6" height="3" fill="#cac41a"/><rect x="492.4" y="423.5" width="7.6" height="1.5" fill="#8a8412" opacity="0.8"/><rect x="492.4" y="428.0" width="7.6" height="1.5" fill="#6a6410" opacity="0.8"/><rect x="492.4" y="636.5" width="7.6" height="3.5" fill="#34c4ca"/><rect x="492.4" y="635" width="7.6" height="1.5" fill="#1a8a90" opacity="0.8"/><rect x="492.4" y="640" width="7.6" height="1.5" fill="#1a7a80" opacity="0.8"/><rect x="491.9" y="417.5" width="1.8" height="9" fill="#c8c020" opacity="0.75"/><rect x="491.9" y="638" width="1.8" height="11" fill="#30b8c0" opacity="0.6"/><rect x="501.0" y="584.5" width="6.6" height="3" fill="#cac41a"/><rect x="501.0" y="583" width="6.6" height="1.5" fill="#8a8412" opacity="0.8"/><rect x="501.0" y="587.5" width="6.6" height="1.5" fill="#6a6410" opacity="0.8"/><rect x="501.0" y="477.0" width="6.6" height="3.5" fill="#34c4ca"/><rect x="501.0" y="475.5" width="6.6" height="1.5" fill="#1a8a90" opacity="0.8"/><rect x="501.0" y="480.5" width="6.6" height="1.5" fill="#1a7a80" opacity="0.8"/><rect x="500.5" y="586" width="1.8" height="11" fill="#b8b020" opacity="0.6"/><rect x="500.5" y="478.5" width="1.8" height="11" fill="#30b8c0" opacity="0.6"/><rect x="508.6" y="425.0" width="14.4" height="3" fill="#cac41a"/><rect x="508.6" y="423.5" width="14.4" height="1.5" fill="#8a8412" opacity="0.8"/><rect x="508.6" y="428.0" width="14.4" height="1.5" fill="#6a6410" opacity="0.8"/><rect x="508.6" y="636.5" width="14.4" height="3.5" fill="#34c4ca"/><rect x="508.6" y="635" width="14.4" height="1.5" fill="#1a8a90" opacity="0.8"/><rect x="508.6" y="640" width="14.4" height="1.5" fill="#1a7a80" opacity="0.8"/><rect x="508.1" y="417.5" width="1.8" height="9" fill="#c8c020" opacity="0.75"/><rect x="508.1" y="638" width="1.8" height="11" fill="#30b8c0" opacity="0.6"/><rect x="524.0" y="584.5" width="7.3" height="3" fill="#cac41a"/><rect x="524.0" y="583" width="7.3" height="1.5" fill="#8a8412" opacity="0.8"/><rect x="524.0" y="587.5" width="7.3" height="1.5" fill="#6a6410" opacity="0.8"/><rect x="524.0" y="477.0" width="7.3" height="3.5" fill="#34c4ca"/><rect x="524.0" y="475.5" width="7.3" height="1.5" fill="#1a8a90" opacity="0.8"/><rect x="524.0" y="480.5" width="7.3" height="1.5" fill="#1a7a80" opacity="0.8"/><rect x="523.5" y="586" width="1.8" height="11" fill="#b8b020" opacity="0.6"/><rect x="523.5" y="478.5" width="1.8" height="11" fill="#30b8c0" opacity="0.6"/><rect x="532.3" y="425.0" width="13.3" height="3" fill="#cac41a"/><rect x="532.3" y="423.5" width="13.3" height="1.5" fill="#8a8412" opacity="0.8"/><rect x="532.3" y="428.0" width="13.3" height="1.5" fill="#6a6410" opacity="0.8"/><rect x="532.3" y="636.5" width="13.3" height="3.5" fill="#34c4ca"/><rect x="532.3" y="635" width="13.3" height="1.5" fill="#1a8a90" opacity="0.8"/><rect x="532.3" y="640" width="13.3" height="1.5" fill="#1a7a80" opacity="0.8"/><rect x="531.8" y="417.5" width="1.8" height="9" fill="#c8c020" opacity="0.75"/><rect x="531.8" y="638" width="1.8" height="11" fill="#30b8c0" opacity="0.6"/><rect x="546.6" y="584.5" width="14.4" height="3" fill="#cac41a"/><rect x="546.6" y="583" width="14.4" height="1.5" fill="#8a8412" opacity="0.8"/><rect x="546.6" y="587.5" width="14.4" height="1.5" fill="#6a6410" opacity="0.8"/><rect x="546.6" y="477.0" width="14.4" height="3.5" fill="#34c4ca"/><rect x="546.6" y="475.5" width="14.4" height="1.5" fill="#1a8a90" opacity="0.8"/><rect x="546.6" y="480.5" width="14.4" height="1.5" fill="#1a7a80" opacity="0.8"/><rect x="546.1" y="586" width="1.8" height="11" fill="#b8b020" opacity="0.6"/><rect x="546.1" y="478.5" width="1.8" height="11" fill="#30b8c0" opacity="0.6"/><rect x="562.0" y="425.0" width="7.4" height="3" fill="#cac41a"/><rect x="562.0" y="423.5" width="7.4" height="1.5" fill="#8a8412" opacity="0.8"/><rect x="562.0" y="428.0" width="7.4" height="1.5" fill="#6a6410" opacity="0.8"/><rect x="562.0" y="636.5" width="7.4" height="3.5" fill="#34c4ca"/><rect x="562.0" y="635" width="7.4" height="1.5" fill="#1a8a90" opacity="0.8"/><rect x="562.0" y="640" width="7.4" height="1.5" fill="#1a7a80" opacity="0.8"/><rect x="561.5" y="417.5" width="1.8" height="9" fill="#c8c020" opacity="0.75"/><rect x="561.5" y="638" width="1.8" height="11" fill="#30b8c0" opacity="0.6"/><rect x="570.4" y="584.5" width="6.6" height="3" fill="#cac41a"/><rect x="570.4" y="583" width="6.6" height="1.5" fill="#8a8412" opacity="0.8"/><rect x="570.4" y="587.5" width="6.6" height="1.5" fill="#6a6410" opacity="0.8"/><rect x="570.4" y="477.0" width="6.6" height="3.5" fill="#34c4ca"/><rect x="570.4" y="475.5" width="6.6" height="1.5" fill="#1a8a90" opacity="0.8"/><rect x="570.4" y="480.5" width="6.6" height="1.5" fill="#1a7a80" opacity="0.8"/><rect x="569.9" y="586" width="1.8" height="11" fill="#b8b020" opacity="0.6"/><rect x="569.9" y="478.5" width="1.8" height="11" fill="#30b8c0" opacity="0.6"/><rect x="578.0" y="425.0" width="6.6" height="3" fill="#cac41a"/><rect x="578.0" y="423.5" width="6.6" height="1.5" fill="#8a8412" opacity="0.8"/><rect x="578.0" y="428.0" width="6.6" height="1.5" fill="#6a6410" opacity="0.8"/><rect x="578.0" y="636.5" width="6.6" height="3.5" fill="#34c4ca"/><rect x="578.0" y="635" width="6.6" height="1.5" fill="#1a8a90" opacity="0.8"/><rect x="578.0" y="640" width="6.6" height="1.5" fill="#1a7a80" opacity="0.8"/><rect x="577.5" y="417.5" width="1.8" height="9" fill="#c8c020" opacity="0.75"/><rect x="577.5" y="638" width="1.8" height="11" fill="#30b8c0" opacity="0.6"/><rect x="585.6" y="584.5" width="6.4" height="3" fill="#cac41a"/><rect x="585.6" y="583" width="6.4" height="1.5" fill="#8a8412" opacity="0.8"/><rect x="585.6" y="587.5" width="6.4" height="1.5" fill="#6a6410" opacity="0.8"/><rect x="585.6" y="477.0" width="6.4" height="3.5" fill="#34c4ca"/><rect x="585.6" y="475.5" width="6.4" height="1.5" fill="#1a8a90" opacity="0.8"/><rect x="585.6" y="480.5" width="6.4" height="1.5" fill="#1a7a80" opacity="0.8"/><rect x="585.1" y="586" width="1.8" height="11" fill="#b8b020" opacity="0.6"/><rect x="585.1" y="478.5" width="1.8" height="11" fill="#30b8c0" opacity="0.6"/><rect x="593.0" y="425.0" width="7.0" height="3" fill="#cac41a"/><rect x="593.0" y="423.5" width="7.0" height="1.5" fill="#8a8412" opacity="0.8"/><rect x="593.0" y="428.0" width="7.0" height="1.5" fill="#6a6410" opacity="0.8"/><rect x="593.0" y="636.5" width="7.0" height="3.5" fill="#34c4ca"/><rect x="593.0" y="635" width="7.0" height="1.5" fill="#1a8a90" opacity="0.8"/><rect x="593.0" y="640" width="7.0" height="1.5" fill="#1a7a80" opacity="0.8"/><rect x="592.5" y="417.5" width="1.8" height="9" fill="#c8c020" opacity="0.75"/><rect x="592.5" y="638" width="1.8" height="11" fill="#30b8c0" opacity="0.6"/><rect x="601.0" y="584.5" width="14.0" height="3" fill="#cac41a"/><rect x="601.0" y="583" width="14.0" height="1.5" fill="#8a8412" opacity="0.8"/><rect x="601.0" y="587.5" width="14.0" height="1.5" fill="#6a6410" opacity="0.8"/><rect x="601.0" y="477.0" width="14.0" height="3.5" fill="#34c4ca"/><rect x="601.0" y="475.5" width="14.0" height="1.5" fill="#1a8a90" opacity="0.8"/><rect x="601.0" y="480.5" width="14.0" height="1.5" fill="#1a7a80" opacity="0.8"/><rect x="600.5" y="586" width="1.8" height="11" fill="#b8b020" opacity="0.6"/><rect x="600.5" y="478.5" width="1.8" height="11" fill="#30b8c0" opacity="0.6"/><rect x="616.0" y="425.0" width="7.0" height="3" fill="#cac41a"/><rect x="616.0" y="423.5" width="7.0" height="1.5" fill="#8a8412" opacity="0.8"/><rect x="616.0" y="428.0" width="7.0" height="1.5" fill="#6a6410" opacity="0.8"/><rect x="616.0" y="636.5" width="7.0" height="3.5" fill="#34c4ca"/><rect x="616.0" y="635" width="7.0" height="1.5" fill="#1a8a90" opacity="0.8"/><rect x="616.0" y="640" width="7.0" height="1.5" fill="#1a7a80" opacity="0.8"/><rect x="615.5" y="417.5" width="1.8" height="9" fill="#c8c020" opacity="0.75"/><rect x="615.5" y="638" width="1.8" height="11" fill="#30b8c0" opacity="0.6"/><rect x="624.0" y="584.5" width="13.0" height="3" fill="#cac41a"/><rect x="624.0" y="583" width="13.0" height="1.5" fill="#8a8412" opacity="0.8"/><rect x="624.0" y="587.5" width="13.0" height="1.5" fill="#6a6410" opacity="0.8"/><rect x="624.0" y="477.0" width="13.0" height="3.5" fill="#34c4ca"/><rect x="624.0" y="475.5" width="13.0" height="1.5" fill="#1a8a90" opacity="0.8"/><rect x="624.0" y="480.5" width="13.0" height="1.5" fill="#1a7a80" opacity="0.8"/><rect x="623.5" y="586" width="1.8" height="11" fill="#b8b020" opacity="0.6"/><rect x="623.5" y="478.5" width="1.8" height="11" fill="#30b8c0" opacity="0.6"/><rect x="48.8" y="426.5" width="1" height="159.5" fill="#8a8a20" opacity="0.4"/><rect x="48.2" y="478.5" width="1" height="159.5" fill="#2a9aa0" opacity="0.45"/><rect x="79.0" y="426.5" width="1" height="159.5" fill="#8a8a20" opacity="0.4"/><rect x="78.4" y="478.5" width="1" height="159.5" fill="#2a9aa0" opacity="0.45"/><rect x="95.2" y="426.5" width="1" height="159.5" fill="#8a8a20" opacity="0.4"/><rect x="94.6" y="478.5" width="1" height="159.5" fill="#2a9aa0" opacity="0.45"/><rect x="118.6" y="426.5" width="1" height="159.5" fill="#8a8a20" opacity="0.4"/><rect x="118.0" y="478.5" width="1" height="159.5" fill="#2a9aa0" opacity="0.45"/><rect x="126.8" y="426.5" width="1" height="159.5" fill="#8a8a20" opacity="0.4"/><rect x="126.2" y="478.5" width="1" height="159.5" fill="#2a9aa0" opacity="0.45"/><rect x="134.2" y="426.5" width="1" height="159.5" fill="#8a8a20" opacity="0.4"/><rect x="133.6" y="478.5" width="1" height="159.5" fill="#2a9aa0" opacity="0.45"/><rect x="141.7" y="426.5" width="1" height="159.5" fill="#8a8a20" opacity="0.4"/><rect x="141.1" y="478.5" width="1" height="159.5" fill="#2a9aa0" opacity="0.45"/><rect x="157.0" y="426.5" width="1" height="159.5" fill="#8a8a20" opacity="0.4"/><rect x="156.4" y="478.5" width="1" height="159.5" fill="#2a9aa0" opacity="0.45"/><rect x="196.0" y="426.5" width="1" height="159.5" fill="#8a8a20" opacity="0.4"/><rect x="195.4" y="478.5" width="1" height="159.5" fill="#2a9aa0" opacity="0.45"/><rect x="204.0" y="426.5" width="1" height="159.5" fill="#8a8a20" opacity="0.4"/><rect x="203.4" y="478.5" width="1" height="159.5" fill="#2a9aa0" opacity="0.45"/><rect x="211.6" y="426.5" width="1" height="159.5" fill="#8a8a20" opacity="0.4"/><rect x="211.0" y="478.5" width="1" height="159.5" fill="#2a9aa0" opacity="0.45"/><rect x="220.4" y="426.5" width="1" height="159.5" fill="#8a8a20" opacity="0.4"/><rect x="219.8" y="478.5" width="1" height="159.5" fill="#2a9aa0" opacity="0.45"/><rect x="227.8" y="426.5" width="1" height="159.5" fill="#8a8a20" opacity="0.4"/><rect x="227.2" y="478.5" width="1" height="159.5" fill="#2a9aa0" opacity="0.45"/><rect x="235.6" y="426.5" width="1" height="159.5" fill="#8a8a20" opacity="0.4"/><rect x="235.0" y="478.5" width="1" height="159.5" fill="#2a9aa0" opacity="0.45"/><rect x="250.6" y="426.5" width="1" height="159.5" fill="#8a8a20" opacity="0.4"/><rect x="250.0" y="478.5" width="1" height="159.5" fill="#2a9aa0" opacity="0.45"/><rect x="258.4" y="426.5" width="1" height="159.5" fill="#8a8a20" opacity="0.4"/><rect x="257.8" y="478.5" width="1" height="159.5" fill="#2a9aa0" opacity="0.45"/><rect x="266.5" y="426.5" width="1" height="159.5" fill="#8a8a20" opacity="0.4"/><rect x="265.9" y="478.5" width="1" height="159.5" fill="#2a9aa0" opacity="0.45"/><rect x="274.6" y="426.5" width="1" height="159.5" fill="#8a8a20" opacity="0.4"/><rect x="274.0" y="478.5" width="1" height="159.5" fill="#2a9aa0" opacity="0.45"/><rect x="282.0" y="426.5" width="1" height="159.5" fill="#8a8a20" opacity="0.4"/><rect x="281.4" y="478.5" width="1" height="159.5" fill="#2a9aa0" opacity="0.45"/><rect x="290.0" y="426.5" width="1" height="159.5" fill="#8a8a20" opacity="0.4"/><rect x="289.4" y="478.5" width="1" height="159.5" fill="#2a9aa0" opacity="0.45"/><rect x="297.7" y="426.5" width="1" height="159.5" fill="#8a8a20" opacity="0.4"/><rect x="297.1" y="478.5" width="1" height="159.5" fill="#2a9aa0" opacity="0.45"/><rect x="313.0" y="426.5" width="1" height="159.5" fill="#8a8a20" opacity="0.4"/><rect x="312.4" y="478.5" width="1" height="159.5" fill="#2a9aa0" opacity="0.45"/><rect x="327.6" y="426.5" width="1" height="159.5" fill="#8a8a20" opacity="0.4"/><rect x="327.0" y="478.5" width="1" height="159.5" fill="#2a9aa0" opacity="0.45"/><rect x="336.0" y="426.5" width="1" height="159.5" fill="#8a8a20" opacity="0.4"/><rect x="335.4" y="478.5" width="1" height="159.5" fill="#2a9aa0" opacity="0.45"/><rect x="352.0" y="426.5" width="1" height="159.5" fill="#8a8a20" opacity="0.4"/><rect x="351.4" y="478.5" width="1" height="159.5" fill="#2a9aa0" opacity="0.45"/><rect x="374.7" y="426.5" width="1" height="159.5" fill="#8a8a20" opacity="0.4"/><rect x="374.1" y="478.5" width="1" height="159.5" fill="#2a9aa0" opacity="0.45"/><rect x="383.8" y="426.5" width="1" height="159.5" fill="#8a8a20" opacity="0.4"/><rect x="383.2" y="478.5" width="1" height="159.5" fill="#2a9aa0" opacity="0.45"/><rect x="391.0" y="426.5" width="1" height="159.5" fill="#8a8a20" opacity="0.4"/><rect x="390.4" y="478.5" width="1" height="159.5" fill="#2a9aa0" opacity="0.45"/><rect x="407.0" y="426.5" width="1" height="159.5" fill="#8a8a20" opacity="0.4"/><rect x="406.4" y="478.5" width="1" height="159.5" fill="#2a9aa0" opacity="0.45"/><rect x="414.4" y="426.5" width="1" height="159.5" fill="#8a8a20" opacity="0.4"/><rect x="413.8" y="478.5" width="1" height="159.5" fill="#2a9aa0" opacity="0.45"/><rect x="430.0" y="426.5" width="1" height="159.5" fill="#8a8a20" opacity="0.4"/><rect x="429.4" y="478.5" width="1" height="159.5" fill="#2a9aa0" opacity="0.45"/><rect x="438.0" y="426.5" width="1" height="159.5" fill="#8a8a20" opacity="0.4"/><rect x="437.4" y="478.5" width="1" height="159.5" fill="#2a9aa0" opacity="0.45"/><rect x="452.7" y="426.5" width="1" height="159.5" fill="#8a8a20" opacity="0.4"/><rect x="452.1" y="478.5" width="1" height="159.5" fill="#2a9aa0" opacity="0.45"/><rect x="469.0" y="426.5" width="1" height="159.5" fill="#8a8a20" opacity="0.4"/><rect x="468.4" y="478.5" width="1" height="159.5" fill="#2a9aa0" opacity="0.45"/><rect x="491.4" y="426.5" width="1" height="159.5" fill="#8a8a20" opacity="0.4"/><rect x="490.8" y="478.5" width="1" height="159.5" fill="#2a9aa0" opacity="0.45"/><rect x="500.0" y="426.5" width="1" height="159.5" fill="#8a8a20" opacity="0.4"/><rect x="499.4" y="478.5" width="1" height="159.5" fill="#2a9aa0" opacity="0.45"/><rect x="507.6" y="426.5" width="1" height="159.5" fill="#8a8a20" opacity="0.4"/><rect x="507.0" y="478.5" width="1" height="159.5" fill="#2a9aa0" opacity="0.45"/><rect x="523.0" y="426.5" width="1" height="159.5" fill="#8a8a20" opacity="0.4"/><rect x="522.4" y="478.5" width="1" height="159.5" fill="#2a9aa0" opacity="0.45"/><rect x="531.3" y="426.5" width="1" height="159.5" fill="#8a8a20" opacity="0.4"/><rect x="530.7" y="478.5" width="1" height="159.5" fill="#2a9aa0" opacity="0.45"/><rect x="545.6" y="426.5" width="1" height="159.5" fill="#8a8a20" opacity="0.4"/><rect x="545.0" y="478.5" width="1" height="159.5" fill="#2a9aa0" opacity="0.45"/><rect x="561.0" y="426.5" width="1" height="159.5" fill="#8a8a20" opacity="0.4"/><rect x="560.4" y="478.5" width="1" height="159.5" fill="#2a9aa0" opacity="0.45"/><rect x="569.4" y="426.5" width="1" height="159.5" fill="#8a8a20" opacity="0.4"/><rect x="568.8" y="478.5" width="1" height="159.5" fill="#2a9aa0" opacity="0.45"/><rect x="577.0" y="426.5" width="1" height="159.5" fill="#8a8a20" opacity="0.4"/><rect x="576.4" y="478.5" width="1" height="159.5" fill="#2a9aa0" opacity="0.45"/><rect x="584.6" y="426.5" width="1" height="159.5" fill="#8a8a20" opacity="0.4"/><rect x="584.0" y="478.5" width="1" height="159.5" fill="#2a9aa0" opacity="0.45"/><rect x="592.0" y="426.5" width="1" height="159.5" fill="#8a8a20" opacity="0.4"/><rect x="591.4" y="478.5" width="1" height="159.5" fill="#2a9aa0" opacity="0.45"/><rect x="600.0" y="426.5" width="1" height="159.5" fill="#8a8a20" opacity="0.4"/><rect x="599.4" y="478.5" width="1" height="159.5" fill="#2a9aa0" opacity="0.45"/><rect x="615.0" y="426.5" width="1" height="159.5" fill="#8a8a20" opacity="0.4"/><rect x="614.4" y="478.5" width="1" height="159.5" fill="#2a9aa0" opacity="0.45"/><rect x="623.0" y="426.5" width="1" height="159.5" fill="#8a8a20" opacity="0.4"/><rect x="622.4" y="478.5" width="1" height="159.5" fill="#2a9aa0" opacity="0.45"/><path d="M21.0 429.5H75.0L80.5 435.0V460.0L75.0 465.5H21.0L15.5 460.0V435.0z" fill="#000" stroke="#c23cc6" stroke-width="1.4"/><text x="48.0" y="453.0" font-size="14" fill="#c23cc6" text-anchor="middle" font-family="Liberation Sans"></text><text x="41" y="452" font-size="14" fill="#c23cc6" font-family="Liberation Sans">x03</text><path d="M86.0 429.5H205.5L211 435.0V460.0L205.5 465.5H86.0L80.5 460.0V435.0z" fill="#000" stroke="#c23cc6" stroke-width="1.4"/><text x="145.8" y="453.0" font-size="13.5" fill="#c23cc6" text-anchor="middle" font-family="Liberation Sans">Header CRC:0x5D4</text><path d="M216.5 429.5H239.5L245 435.0V460.0L239.5 465.5H216.5L211 460.0V435.0z" fill="#000" stroke="#e6e23c" stroke-width="1.4"/><text x="228.0" y="453.0" font-size="14" fill="#e6e23c" text-anchor="middle" font-family="Liberation Sans">0x0A</text><rect x="245" y="445.5" width="31" height="1.3" fill="#f0f0f0"/><rect x="245" y="448.8" width="31" height="1.3" fill="#f0f0f0"/><path d="M281.5 429.5H337.0L342.5 435.0V460.0L337.0 465.5H281.5L276 460.0V435.0z" fill="#000" stroke="#f0f0f0" stroke-width="1.4"/><text x="309.2" y="453.0" font-size="14" fill="#f0f0f0" text-anchor="middle" font-family="Liberation Sans">0x55</text><path d="M348.0 429.5H402.0L407.5 435.0V460.0L402.0 465.5H348.0L342.5 460.0V435.0z" fill="#000" stroke="#f0f0f0" stroke-width="1.4"/><text x="375.0" y="453.0" font-size="14" fill="#f0f0f0" text-anchor="middle" font-family="Liberation Sans">0x4E</text><rect x="407.5" y="445.5" width="32.5" height="1.3" fill="#f0f0f0"/><rect x="407.5" y="448.8" width="32.5" height="1.3" fill="#f0f0f0"/><path d="M445.5 429.5H500.5L506 435.0V460.0L500.5 465.5H445.5L440 460.0V435.0z" fill="#000" stroke="#f0f0f0" stroke-width="1.4"/><text x="473.0" y="453.0" font-size="14" fill="#f0f0f0" text-anchor="middle" font-family="Liberation Sans">0x49</text><path d="M511.5 429.5H566.5L572 435.0V460.0L566.5 465.5H511.5L506 460.0V435.0z" fill="#000" stroke="#f0f0f0" stroke-width="1.4"/><text x="539.0" y="453.0" font-size="14" fill="#f0f0f0" text-anchor="middle" font-family="Liberation Sans">0x2D</text><rect x="572" y="445.5" width="32" height="1.3" fill="#f0f0f0"/><rect x="572" y="448.8" width="32" height="1.3" fill="#f0f0f0"/><path d="M609.5 429.5H662.5L668 435.0V460.0L662.5 465.5H609.5L604 460.0V435.0z" fill="#000" stroke="#f0f0f0" stroke-width="1.4"/><text x="636.0" y="453.0" font-size="14" fill="#f0f0f0" text-anchor="middle" font-family="Liberation Sans"></text><text x="607" y="452.5" font-size="14" fill="#cfcfcf" font-family="Liberation Sans">0x54</text><rect x="0" y="400" width="15" height="100" fill="#000"/><path d="M15 440h20l5.5 7.5-5.5 7.5H15z" fill="#f8f8f8"/><text x="18" y="452" font-size="13" fill="#111" font-family="Liberation Sans">B1</text><rect x="35" y="447" width="5" height="1" fill="#222"/><text x="636" y="446.9" font-size="15" fill="#40dcd8" text-anchor="end" font-family="Liberation Sans">3.585V</text><text x="636" y="482.3" font-size="15" fill="#40dcd8" text-anchor="end" font-family="Liberation Sans">2.93V</text><text x="636" y="517.7" font-size="15" fill="#40dcd8" text-anchor="end" font-family="Liberation Sans">2.275V</text><text x="636" y="553.1" font-size="15" fill="#40dcd8" text-anchor="end" font-family="Liberation Sans">1.62V</text><text x="636" y="588.5" font-size="15" fill="#40dcd8" text-anchor="end" font-family="Liberation Sans">965mV</text><text x="636" y="623.9" font-size="15" fill="#40dcd8" text-anchor="end" font-family="Liberation Sans">310mV</text><text x="636" y="659.3" font-size="15" fill="#40dcd8" text-anchor="end" font-family="Liberation Sans">-345mV</text><text x="78.1" y="686" font-size="16" fill="#f4f4f4" text-anchor="middle" font-family="Liberation Sans">5.911µs</text><text x="202.3" y="686" font-size="16" fill="#f4f4f4" text-anchor="middle" font-family="Liberation Sans">8.932µs</text><text x="326.5" y="686" font-size="16" fill="#f4f4f4" text-anchor="middle" font-family="Liberation Sans">11.953µs</text><text x="450.7" y="686" font-size="16" fill="#f4f4f4" text-anchor="middle" font-family="Liberation Sans">14.974µs</text><text x="574.9" y="686" font-size="16" fill="#f4f4f4" text-anchor="middle" font-family="Liberation Sans">17.996µs</text></g></svg>
<div class="a" style="left:641px;top:55px;width:625px;height:636px;border:2px solid #64666e;background:#22242c"></div>
<div class="a" style="left:643px;top:57px;width:621px;height:33px;background:#363a45"></div>
<div class="t" style="left:651px;top:64px;font-size:16px;color:#f0f0f0">Bus1 FlexRay(28)</div>
<svg class="a" style="left:1180px;top:55px" width="86" height="36">
<circle cx="26" cy="17" r="13" fill="none" stroke="#f2f2f2" stroke-width="1.5"/>
<path d="M22 13.5q0-4.5 4.3-4.5t4.2 4.2q0 2.2-2.2 3.5t-2.2 3.5v1.3" fill="none" stroke="#f2f2f2" stroke-width="2.6" stroke-linecap="round"/><circle cx="26.1" cy="25.3" r="1.6" fill="#f2f2f2"/>
<circle cx="70" cy="17" r="13" fill="#484844" stroke="#111" stroke-width="1.5"/>
<path d="M63 10l14 14M77 10l-14 14" stroke="#f2f2f2" stroke-width="1.5"/></svg>
<div class="a" style="left:644px;top:98px;width:140px;height:36px;background:#17161e;border:1px solid #4a4b52"></div>
<div class="t" style="left:695px;top:108px;font-size:16px;color:#f0f0f0">Index</div>
<svg class="a" style="left:758px;top:110px" width="14" height="12"><path d="M1 1h12l-6 9z" fill="#8a8a8e"/></svg>
<div class="a" style="left:784px;top:98px;width:444px;height:36px;background:#17161e;border:1px solid #4a4b52;border-left:2px solid #4a4b52"></div>
<div class="a" style="left:1228px;top:98px;width:35px;height:36px;background:#33363f"></div>
<svg class="a" style="left:1228px;top:98px" width="35" height="36"><circle cx="17" cy="17" r="9" fill="none" stroke="#f0f0f0" stroke-width="1.6"/><path d="M23 23l5 5" stroke="#f0f0f0" stroke-width="1.8"/></svg>
<div class="a" style="left:644px;top:141.5px;width:577px;height:545px;background:#f0f0f0"></div><div class="a" style="left:645.5px;top:143px;width:45.5px;height:32px;background:#3d404b;overflow:hidden"><div class="t" style="left:0;width:100%;text-align:center;top:10px;font-size:12.5px;color:#ececec">Index</div></div><div class="a" style="left:693px;top:143px;width:70px;height:32px;background:#3d404b;overflow:hidden"><div class="t" style="left:0;width:100%;text-align:center;top:10px;font-size:12.5px;color:#ececec">Time</div></div><div class="a" style="left:765px;top:143px;width:46px;height:32px;background:#3d404b;overflow:hidden"><div class="t" style="left:0;width:100%;text-align:center;top:10px;font-size:12.5px;color:#ececec">Ind</div></div><div class="a" style="left:813px;top:143px;width:46px;height:32px;background:#3d404b;overflow:hidden"><div class="t" style="left:0;width:100%;text-align:center;top:10px;font-size:12.5px;color:#ececec">ID</div></div><div class="a" style="left:861px;top:143px;width:46px;height:32px;background:#3d404b;overflow:hidden"><div class="t" style="left:0;width:100%;text-align:center;top:10px;font-size:12.5px;color:#ececec">Len</div></div><div class="a" style="left:909px;top:143px;width:46px;height:32px;background:#3d404b;overflow:hidden"><div class="t" style="left:0;width:100%;text-align:center;top:10px;font-size:12.5px;color:#ececec">HCRC</div></div><div class="a" style="left:957px;top:143px;width:70px;height:32px;background:#3d404b;overflow:hidden"><div class="t" style="left:0;width:100%;text-align:center;top:10px;font-size:12.5px;color:#ececec">Cyc</div></div><div class="a" style="left:1029px;top:143px;width:95px;height:32px;background:#3d404b;overflow:hidden"><div class="t" style="left:0;width:100%;text-align:center;top:10px;font-size:12.5px;color:#ececec">Data</div></div><div class="a" style="left:1126px;top:143px;width:46px;height:32px;background:#3d404b;overflow:hidden"><div class="t" style="left:0;width:100%;text-align:center;top:10px;font-size:12.5px;color:#ececec">TCRC</div></div><div class="a" style="left:1174px;top:143px;width:46px;height:32px;background:#3d404b;overflow:hidden"><div class="t" style="left:0;width:100%;text-align:center;top:10px;font-size:12.5px;color:#ececec">DTS</div></div><div class="a" style="left:645.5px;top:177px;width:45.5px;height:32px;background:#4d94f4;overflow:hidden"><div class="t" style="left:0;width:100%;text-align:center;top:8px;font-size:12.5px;color:#e6eeff">1</div></div><div class="a" style="left:693px;top:177px;width:70px;height:32px;background:#4d94f4;overflow:hidden"><div class="t" style="left:0;width:100%;text-align:center;top:8px;font-size:12.5px;color:#e6eeff">-420.8µs</div></div><div class="a" style="left:765px;top:177px;width:46px;height:32px;background:#4d94f4;overflow:hidden"><div class="t" style="left:0;width:100%;text-align:center;top:8px;font-size:12.5px;color:#e6eeff">0x00</div></div><div class="a" style="left:813px;top:177px;width:46px;height:32px;background:#4d94f4;overflow:hidden"><div class="t" style="left:0;width:100%;text-align:center;top:8px;font-size:12.5px;color:#e6eeff">0x53D</div></div><div class="a" style="left:861px;top:177px;width:46px;height:32px;background:#4d94f4;overflow:hidden"><div class="t" style="left:0;width:100%;text-align:center;top:8px;font-size:12.5px;color:#e6eeff">0x03</div></div><div class="a" style="left:909px;top:177px;width:46px;height:32px;background:#4d94f4;overflow:hidden"><div class="t" style="left:0;width:100%;text-align:center;top:8px;font-size:12.5px;color:#e6eeff">0x5D4</div></div><div class="a" style="left:957px;top:177px;width:70px;height:32px;background:#4d94f4;overflow:hidden"><div class="t" style="left:0;width:100%;text-align:center;top:8px;font-size:12.5px;color:#e6eeff">0x0A</div></div><div class="a" style="left:1029px;top:177px;width:95px;height:32px;background:#4d94f4;overflow:hidden"><div class="t" style="left:0;width:100%;text-align:center;top:0.5px;font-size:12.5px;color:#e6eeff">00 00 00 2D 54</div><div class="t" style="left:0;width:100%;text-align:center;top:14.1px;font-size:12.5px;color:#e6eeff">21</div></div><div class="a" style="left:1126px;top:177px;width:46px;height:32px;background:#4d94f4;overflow:hidden"><div class="t" style="left:1px;top:0.5px;font-size:12.5px;color:#e6eeff">0x6AD8</div><div class="t" style="left:1px;top:14.5px;font-size:12.5px;color:#e6eeff">D4[err]</div></div><div class="a" style="left:1174px;top:177px;width:46px;height:32px;background:#4d94f4;overflow:hidden"><div class="t" style="left:0;width:100%;text-align:center;top:8px;font-size:12.5px;color:#e6eeff"></div></div><div class="a" style="left:645.5px;top:211px;width:45.5px;height:32px;background:#232733;overflow:hidden"><div class="t" style="left:0;width:100%;text-align:center;top:8px;font-size:12.5px;color:#ececec">2</div></div><div class="a" style="left:693px;top:211px;width:70px;height:32px;background:#232733;overflow:hidden"><div class="t" style="left:0;width:100%;text-align:center;top:8px;font-size:12.5px;color:#ececec">-420.8µs</div></div><div class="a" style="left:765px;top:211px;width:46px;height:32px;background:#232733;overflow:hidden"><div class="t" style="left:0;width:100%;text-align:center;top:8px;font-size:12.5px;color:#ececec">0x00</div></div><div class="a" style="left:813px;top:211px;width:46px;height:32px;background:#232733;overflow:hidden"><div class="t" style="left:0;width:100%;text-align:center;top:8px;font-size:12.5px;color:#ececec">0x53D</div></div><div class="a" style="left:861px;top:211px;width:46px;height:32px;background:#232733;overflow:hidden"><div class="t" style="left:0;width:100%;text-align:center;top:8px;font-size:12.5px;color:#ececec">0x03</div></div><div class="a" style="left:909px;top:211px;width:46px;height:32px;background:#232733;overflow:hidden"><div class="t" style="left:0;width:100%;text-align:center;top:8px;font-size:12.5px;color:#ececec">0x5D4</div></div><div class="a" style="left:957px;top:211px;width:70px;height:32px;background:#232733;overflow:hidden"><div class="t" style="left:0;width:100%;text-align:center;top:8px;font-size:12.5px;color:#ececec">0x0A</div></div><div class="a" style="left:1029px;top:211px;width:95px;height:32px;background:#232733;overflow:hidden"><div class="t" style="left:0;width:100%;text-align:center;top:-7.0px;font-size:12.5px;color:#ececec">00 00 00 2D 54</div><div class="t" style="left:0;width:100%;text-align:center;top:6.6px;font-size:12.5px;color:#ececec">21 55 4E 49 2D</div><div class="t" style="left:0;width:100%;text-align:center;top:20.2px;font-size:12.5px;color:#ececec">54 21</div></div><div class="a" style="left:1126px;top:211px;width:46px;height:32px;background:#232733;overflow:hidden"><div class="t" style="left:1px;top:0.5px;font-size:12.5px;color:#ececec">0x6AD8</div><div class="t" style="left:1px;top:14.5px;font-size:12.5px;color:#ececec">D4[err]</div></div><div class="a" style="left:1174px;top:211px;width:46px;height:32px;background:#232733;overflow:hidden"><div class="t" style="left:0;width:100%;text-align:center;top:8px;font-size:12.5px;color:#ececec"></div></div><div class="a" style="left:645.5px;top:245px;width:45.5px;height:32px;background:#40414d;overflow:hidden"><div class="t" style="left:0;width:100%;text-align:center;top:8px;font-size:12.5px;color:#ececec">3</div></div><div class="a" style="left:693px;top:245px;width:70px;height:32px;background:#40414d;overflow:hidden"><div class="t" style="left:0;width:100%;text-align:center;top:8px;font-size:12.5px;color:#ececec">-420.8µs</div></div><div class="a" style="left:765px;top:245px;width:46px;height:32px;background:#40414d;overflow:hidden"><div class="t" style="left:0;width:100%;text-align:center;top:8px;font-size:12.5px;color:#ececec">0x07</div></div><div class="a" style="left:813px;top:245px;width:46px;height:32px;background:#40414d;overflow:hidden"><div class="t" style="left:0;width:100%;text-align:center;top:8px;font-size:12.5px;color:#ececec">0x53D</div></div><div class="a" style="left:861px;top:245px;width:46px;height:32px;background:#40414d;overflow:hidden"><div class="t" style="left:0;width:100%;text-align:center;top:8px;font-size:12.5px;color:#ececec">0x03</div></div><div class="a" style="left:909px;top:245px;width:46px;height:32px;background:#40414d;overflow:hidden"><div class="t" style="left:0;width:100%;text-align:center;top:0.5px;font-size:12.5px;color:#ececec">0x5E8[</div><div class="t" style="left:0;width:100%;text-align:center;top:14.5px;font-size:12.5px;color:#ececec">err]</div></div><div class="a" style="left:957px;top:245px;width:70px;height:32px;background:#40414d;overflow:hidden"><div class="t" style="left:0;width:100%;text-align:center;top:8px;font-size:12.5px;color:#ececec">0x0A</div></div><div class="a" style="left:1029px;top:245px;width:95px;height:32px;background:#40414d;overflow:hidden"><div class="t" style="left:0;width:100%;text-align:center;top:0.5px;font-size:12.5px;color:#ececec">21 55 4E 49 2D</div><div class="t" style="left:0;width:100%;text-align:center;top:14.1px;font-size:12.5px;color:#ececec">54 21 55 4E 49</div></div><div class="a" style="left:1126px;top:245px;width:46px;height:32px;background:#40414d;overflow:hidden"><div class="t" style="left:1px;top:0.5px;font-size:12.5px;color:#ececec">0x8142</div><div class="t" style="left:1px;top:14.5px;font-size:12.5px;color:#ececec">DE[err]</div></div><div class="a" style="left:1174px;top:245px;width:46px;height:32px;background:#40414d;overflow:hidden"><div class="t" style="left:0;width:100%;text-align:center;top:8px;font-size:12.5px;color:#ececec"></div></div><div class="a" style="left:645.5px;top:279px;width:45.5px;height:32px;background:#232733;overflow:hidden"><div class="t" style="left:0;width:100%;text-align:center;top:8px;font-size:12.5px;color:#ececec">4</div></div><div class="a" style="left:693px;top:279px;width:70px;height:32px;background:#232733;overflow:hidden"><div class="t" style="left:0;width:100%;text-align:center;top:8px;font-size:12.5px;color:#ececec">-420.8µs</div></div><div class="a" style="left:765px;top:279px;width:46px;height:32px;background:#232733;overflow:hidden"><div class="t" style="left:0;width:100%;text-align:center;top:8px;font-size:12.5px;color:#ececec">0x05</div></div><div class="a" style="left:813px;top:279px;width:46px;height:32px;background:#232733;overflow:hidden"><div class="t" style="left:0;width:100%;text-align:center;top:8px;font-size:12.5px;color:#ececec">0x53D</div></div><div class="a" style="left:861px;top:279px;width:46px;height:32px;background:#232733;overflow:hidden"><div class="t" style="left:0;width:100%;text-align:center;top:8px;font-size:12.5px;color:#ececec">0x03</div></div><div class="a" style="left:909px;top:279px;width:46px;height:32px;background:#232733;overflow:hidden"><div class="t" style="left:0;width:100%;text-align:center;top:0.5px;font-size:12.5px;color:#ececec">0x5D4[</div><div class="t" style="left:0;width:100%;text-align:center;top:14.5px;font-size:12.5px;color:#ececec">err]</div></div><div class="a" style="left:957px;top:279px;width:70px;height:32px;background:#232733;overflow:hidden"><div class="t" style="left:0;width:100%;text-align:center;top:8px;font-size:12.5px;color:#ececec">0x0A</div></div><div class="a" style="left:1029px;top:279px;width:95px;height:32px;background:#232733;overflow:hidden"><div class="t" style="left:0;width:100%;text-align:center;top:-7.0px;font-size:12.5px;color:#ececec">21 55 4E 49 2D</div><div class="t" style="left:0;width:100%;text-align:center;top:6.6px;font-size:12.5px;color:#ececec">54 21 55 4E 49</div><div class="t" style="left:0;width:100%;text-align:center;top:20.2px;font-size:12.5px;color:#ececec">2D 54 21 55 4E</div></div><div class="a" style="left:1126px;top:279px;width:46px;height:32px;background:#232733;overflow:hidden"><div class="t" style="left:1px;top:0.5px;font-size:12.5px;color:#ececec">0x95D8</div><div class="t" style="left:1px;top:14.5px;font-size:12.5px;color:#ececec">6D[err]</div></div><div class="a" style="left:1174px;top:279px;width:46px;height:32px;background:#232733;overflow:hidden"><div class="t" style="left:0;width:100%;text-align:center;top:8px;font-size:12.5px;color:#ececec"></div></div><div class="a" style="left:645.5px;top:313px;width:45.5px;height:32px;background:#40414d;overflow:hidden"><div class="t" style="left:0;width:100%;text-align:center;top:8px;font-size:12.5px;color:#ececec">5</div></div><div class="a" style="left:693px;top:313px;width:70px;height:32px;background:#40414d;overflow:hidden"><div class="t" style="left:0;width:100%;text-align:center;top:8px;font-size:12.5px;color:#ececec">-420.8µs</div></div><div class="a" style="left:765px;top:313px;width:46px;height:32px;background:#40414d;overflow:hidden"><div class="t" style="left:0;width:100%;text-align:center;top:8px;font-size:12.5px;color:#ececec">0x04</div></div><div class="a" style="left:813px;top:313px;width:46px;height:32px;background:#40414d;overflow:hidden"><div class="t" style="left:0;width:100%;text-align:center;top:8px;font-size:12.5px;color:#ececec">0x53D</div></div><div class="a" style="left:861px;top:313px;width:46px;height:32px;background:#40414d;overflow:hidden"><div class="t" style="left:0;width:100%;text-align:center;top:8px;font-size:12.5px;color:#ececec">0x03</div></div><div class="a" style="left:909px;top:313px;width:46px;height:32px;background:#40414d;overflow:hidden"><div class="t" style="left:0;width:100%;text-align:center;top:8px;font-size:12.5px;color:#ececec">0x5D4</div></div><div class="a" style="left:957px;top:313px;width:70px;height:32px;background:#40414d;overflow:hidden"><div class="t" style="left:0;width:100%;text-align:center;top:8px;font-size:12.5px;color:#ececec">0x0A</div></div><div class="a" style="left:1029px;top:313px;width:95px;height:32px;background:#40414d;overflow:hidden"><div class="t" style="left:0;width:100%;text-align:center;top:0.5px;font-size:12.5px;color:#ececec">54 21 55 4E 49</div><div class="t" style="left:0;width:100%;text-align:center;top:14.1px;font-size:12.5px;color:#ececec">2D 54 21 55 4E</div><div class="t" style="left:0;width:100%;text-align:center;top:27.7px;font-size:12.5px;color:#ececec">49 2D 54 21 55</div></div><div class="a" style="left:1126px;top:313px;width:46px;height:32px;background:#40414d;overflow:hidden"><div class="t" style="left:1px;top:0.5px;font-size:12.5px;color:#ececec">0x6AD8</div><div class="t" style="left:1px;top:14.5px;font-size:12.5px;color:#ececec">D4[err]</div></div><div class="a" style="left:1174px;top:313px;width:46px;height:32px;background:#40414d;overflow:hidden"><div class="t" style="left:0;width:100%;text-align:center;top:8px;font-size:12.5px;color:#ececec"></div></div><div class="a" style="left:645.5px;top:347px;width:45.5px;height:32px;background:#232733;overflow:hidden"><div class="t" style="left:0;width:100%;text-align:center;top:8px;font-size:12.5px;color:#ececec">6</div></div><div class="a" style="left:693px;top:347px;width:70px;height:32px;background:#232733;overflow:hidden"><div class="t" style="left:0;width:100%;text-align:center;top:8px;font-size:12.5px;color:#ececec">-420.8µs</div></div><div class="a" style="left:765px;top:347px;width:46px;height:32px;background:#232733;overflow:hidden"><div class="t" style="left:0;width:100%;text-align:center;top:8px;font-size:12.5px;color:#ececec">0x0C</div></div><div class="a" style="left:813px;top:347px;width:46px;height:32px;background:#232733;overflow:hidden"><div class="t" style="left:0;width:100%;text-align:center;top:8px;font-size:12.5px;color:#ececec">0x53D</div></div><div class="a" style="left:861px;top:347px;width:46px;height:32px;background:#232733;overflow:hidden"><div class="t" style="left:0;width:100%;text-align:center;top:8px;font-size:12.5px;color:#ececec">0x03</div></div><div class="a" style="left:909px;top:347px;width:46px;height:32px;background:#232733;overflow:hidden"><div class="t" style="left:0;width:100%;text-align:center;top:8px;font-size:12.5px;color:#ececec">0x5D4</div></div><div class="a" style="left:957px;top:347px;width:70px;height:32px;background:#232733;overflow:hidden"><div class="t" style="left:0;width:100%;text-align:center;top:8px;font-size:12.5px;color:#ececec">0x0A</div></div><div class="a" style="left:1029px;top:347px;width:95px;height:32px;background:#232733;overflow:hidden"><div class="t" style="left:0;width:100%;text-align:center;top:0.5px;font-size:12.5px;color:#ececec">2D 54 21 55 4E</div><div class="t" style="left:0;width:100%;text-align:center;top:14.1px;font-size:12.5px;color:#ececec">49 2D 54 21 55</div></div><div class="a" style="left:1126px;top:347px;width:46px;height:32px;background:#232733;overflow:hidden"><div class="t" style="left:1px;top:0.5px;font-size:12.5px;color:#ececec">0x6AD8</div><div class="t" style="left:1px;top:14.5px;font-size:12.5px;color:#ececec">D4[err]</div></div><div class="a" style="left:1174px;top:347px;width:46px;height:32px;background:#232733;overflow:hidden"><div class="t" style="left:0;width:100%;text-align:center;top:8px;font-size:12.5px;color:#ececec"></div></div><div class="a" style="left:645.5px;top:381px;width:45.5px;height:32px;background:#40414d;overflow:hidden"><div class="t" style="left:0;width:100%;text-align:center;top:8px;font-size:12.5px;color:#ececec">7</div></div><div class="a" style="left:693px;top:381px;width:70px;height:32px;background:#40414d;overflow:hidden"><div class="t" style="left:0;width:100%;text-align:center;top:8px;font-size:12.5px;color:#ececec">-420.8µs</div></div><div class="a" style="left:765px;top:381px;width:46px;height:32px;background:#40414d;overflow:hidden"><div class="t" style="left:0;width:100%;text-align:center;top:8px;font-size:12.5px;color:#ececec">0x00</div></div><div class="a" style="left:813px;top:381px;width:46px;height:32px;background:#40414d;overflow:hidden"><div class="t" style="left:0;width:100%;text-align:center;top:8px;font-size:12.5px;color:#ececec">0x53D</div></div><div class="a" style="left:861px;top:381px;width:46px;height:32px;background:#40414d;overflow:hidden"><div class="t" style="left:0;width:100%;text-align:center;top:8px;font-size:12.5px;color:#ececec">0x03</div></div><div class="a" style="left:909px;top:381px;width:46px;height:32px;background:#40414d;overflow:hidden"><div class="t" style="left:0;width:100%;text-align:center;top:8px;font-size:12.5px;color:#ececec">0x5D4</div></div><div class="a" style="left:957px;top:381px;width:70px;height:32px;background:#40414d;overflow:hidden"><div class="t" style="left:0;width:100%;text-align:center;top:8px;font-size:12.5px;color:#ececec">0x0A</div></div><div class="a" style="left:1029px;top:381px;width:95px;height:32px;background:#40414d;overflow:hidden"><div class="t" style="left:0;width:100%;text-align:center;top:-7.0px;font-size:12.5px;color:#ececec">2D 54 21 55 4E</div><div class="t" style="left:0;width:100%;text-align:center;top:6.6px;font-size:12.5px;color:#ececec">49 2D 54 21 55</div><div class="t" style="left:0;width:100%;text-align:center;top:20.2px;font-size:12.5px;color:#ececec">4E 49 2D 54 21</div></div><div class="a" style="left:1126px;top:381px;width:46px;height:32px;background:#40414d;overflow:hidden"><div class="t" style="left:1px;top:0.5px;font-size:12.5px;color:#ececec">0x6AD8</div><div class="t" style="left:1px;top:14.5px;font-size:12.5px;color:#ececec">D4[err]</div></div><div class="a" style="left:1174px;top:381px;width:46px;height:32px;background:#40414d;overflow:hidden"><div class="t" style="left:0;width:100%;text-align:center;top:8px;font-size:12.5px;color:#ececec"></div></div><div class="a" style="left:645.5px;top:415px;width:45.5px;height:32px;background:#232733;overflow:hidden"><div class="t" style="left:0;width:100%;text-align:center;top:8px;font-size:12.5px;color:#ececec">8</div></div><div class="a" style="left:693px;top:415px;width:70px;height:32px;background:#232733;overflow:hidden"><div class="t" style="left:0;width:100%;text-align:center;top:8px;font-size:12.5px;color:#ececec">-420.8µs</div></div><div class="a" style="left:765px;top:415px;width:46px;height:32px;background:#232733;overflow:hidden"><div class="t" style="left:0;width:100%;text-align:center;top:8px;font-size:12.5px;color:#ececec">0x00</div></div><div class="a" style="left:813px;top:415px;width:46px;height:32px;background:#232733;overflow:hidden"><div class="t" style="left:0;width:100%;text-align:center;top:8px;font-size:12.5px;color:#ececec">0x53D</div></div><div class="a" style="left:861px;top:415px;width:46px;height:32px;background:#232733;overflow:hidden"><div class="t" style="left:0;width:100%;text-align:center;top:8px;font-size:12.5px;color:#ececec">0x03</div></div><div class="a" style="left:909px;top:415px;width:46px;height:32px;background:#232733;overflow:hidden"><div class="t" style="left:0;width:100%;text-align:center;top:8px;font-size:12.5px;color:#ececec">0x5D4</div></div><div class="a" style="left:957px;top:415px;width:70px;height:32px;background:#232733;overflow:hidden"><div class="t" style="left:0;width:100%;text-align:center;top:8px;font-size:12.5px;color:#ececec">0x0A</div></div><div class="a" style="left:1029px;top:415px;width:95px;height:32px;background:#232733;overflow:hidden"><div class="t" style="left:0;width:100%;text-align:center;top:0.5px;font-size:12.5px;color:#ececec">49 2D 54 21 55</div><div class="t" style="left:0;width:100%;text-align:center;top:14.1px;font-size:12.5px;color:#ececec">4E 49 2D 54 21</div></div><div class="a" style="left:1126px;top:415px;width:46px;height:32px;background:#232733;overflow:hidden"><div class="t" style="left:1px;top:0.5px;font-size:12.5px;color:#ececec">0x6AD8</div><div class="t" style="left:1px;top:14.5px;font-size:12.5px;color:#ececec">D4[err]</div></div><div class="a" style="left:1174px;top:415px;width:46px;height:32px;background:#232733;overflow:hidden"><div class="t" style="left:0;width:100%;text-align:center;top:8px;font-size:12.5px;color:#ececec"></div></div><div class="a" style="left:645.5px;top:449px;width:45.5px;height:32px;background:#40414d;overflow:hidden"><div class="t" style="left:0;width:100%;text-align:center;top:8px;font-size:12.5px;color:#ececec">9</div></div><div class="a" style="left:693px;top:449px;width:70px;height:32px;background:#40414d;overflow:hidden"><div class="t" style="left:0;width:100%;text-align:center;top:8px;font-size:12.5px;color:#ececec">-420.8µs</div></div><div class="a" style="left:765px;top:449px;width:46px;height:32px;background:#40414d;overflow:hidden"><div class="t" style="left:0;width:100%;text-align:center;top:8px;font-size:12.5px;color:#ececec">0x07</div></div><div class="a" style="left:813px;top:449px;width:46px;height:32px;background:#40414d;overflow:hidden"><div class="t" style="left:0;width:100%;text-align:center;top:8px;font-size:12.5px;color:#ececec">0x53D</div></div><div class="a" style="left:861px;top:449px;width:46px;height:32px;background:#40414d;overflow:hidden"><div class="t" style="left:0;width:100%;text-align:center;top:8px;font-size:12.5px;color:#ececec">0x03</div></div><div class="a" style="left:909px;top:449px;width:46px;height:32px;background:#40414d;overflow:hidden"><div class="t" style="left:0;width:100%;text-align:center;top:0.5px;font-size:12.5px;color:#ececec">0x5E8[</div><div class="t" style="left:0;width:100%;text-align:center;top:14.5px;font-size:12.5px;color:#ececec">err]</div></div><div class="a" style="left:957px;top:449px;width:70px;height:32px;background:#40414d;overflow:hidden"><div class="t" style="left:0;width:100%;text-align:center;top:8px;font-size:12.5px;color:#ececec">0x0A</div></div><div class="a" style="left:1029px;top:449px;width:95px;height:32px;background:#40414d;overflow:hidden"><div class="t" style="left:0;width:100%;text-align:center;top:-7.0px;font-size:12.5px;color:#ececec">49 2D 54 21 55</div><div class="t" style="left:0;width:100%;text-align:center;top:6.6px;font-size:12.5px;color:#ececec">4E 49 2D 54 21</div><div class="t" style="left:0;width:100%;text-align:center;top:20.2px;font-size:12.5px;color:#ececec">55 4E 49 2D 54</div></div><div class="a" style="left:1126px;top:449px;width:46px;height:32px;background:#40414d;overflow:hidden"><div class="t" style="left:1px;top:0.5px;font-size:12.5px;color:#ececec">0x8142</div><div class="t" style="left:1px;top:14.5px;font-size:12.5px;color:#ececec">DE[err]</div></div><div class="a" style="left:1174px;top:449px;width:46px;height:32px;background:#40414d;overflow:hidden"><div class="t" style="left:0;width:100%;text-align:center;top:8px;font-size:12.5px;color:#ececec"></div></div><div class="a" style="left:645.5px;top:483px;width:45.5px;height:32px;background:#232733;overflow:hidden"><div class="t" style="left:0;width:100%;text-align:center;top:8px;font-size:12.5px;color:#ececec">10</div></div><div class="a" style="left:693px;top:483px;width:70px;height:32px;background:#232733;overflow:hidden"><div class="t" style="left:0;width:100%;text-align:center;top:8px;font-size:12.5px;color:#ececec">-420.8µs</div></div><div class="a" style="left:765px;top:483px;width:46px;height:32px;background:#232733;overflow:hidden"><div class="t" style="left:0;width:100%;text-align:center;top:8px;font-size:12.5px;color:#ececec">0x05</div></div><div class="a" style="left:813px;top:483px;width:46px;height:32px;background:#232733;overflow:hidden"><div class="t" style="left:0;width:100%;text-align:center;top:8px;font-size:12.5px;color:#ececec">0x53D</div></div><div class="a" style="left:861px;top:483px;width:46px;height:32px;background:#232733;overflow:hidden"><div class="t" style="left:0;width:100%;text-align:center;top:8px;font-size:12.5px;color:#ececec">0x03</div></div><div class="a" style="left:909px;top:483px;width:46px;height:32px;background:#232733;overflow:hidden"><div class="t" style="left:0;width:100%;text-align:center;top:0.5px;font-size:12.5px;color:#ececec">0x5D4[</div><div class="t" style="left:0;width:100%;text-align:center;top:14.5px;font-size:12.5px;color:#ececec">err]</div></div><div class="a" style="left:957px;top:483px;width:70px;height:32px;background:#232733;overflow:hidden"><div class="t" style="left:0;width:100%;text-align:center;top:8px;font-size:12.5px;color:#ececec">0x0A</div></div><div class="a" style="left:1029px;top:483px;width:95px;height:32px;background:#232733;overflow:hidden"><div class="t" style="left:0;width:100%;text-align:center;top:0.5px;font-size:12.5px;color:#ececec">4E 49 2D 54 21</div><div class="t" style="left:0;width:100%;text-align:center;top:14.1px;font-size:12.5px;color:#ececec">55 4E 49 2D 54</div><div class="t" style="left:0;width:100%;text-align:center;top:27.7px;font-size:12.5px;color:#ececec">21 00 00 00 2D</div></div><div class="a" style="left:1126px;top:483px;width:46px;height:32px;background:#232733;overflow:hidden"><div class="t" style="left:1px;top:0.5px;font-size:12.5px;color:#ececec">0x95D8</div><div class="t" style="left:1px;top:14.5px;font-size:12.5px;color:#ececec">6D[err]</div></div><div class="a" style="left:1174px;top:483px;width:46px;height:32px;background:#232733;overflow:hidden"><div class="t" style="left:0;width:100%;text-align:center;top:8px;font-size:12.5px;color:#ececec"></div></div><div class="a" style="left:645.5px;top:517px;width:45.5px;height:32px;background:#40414d;overflow:hidden"><div class="t" style="left:0;width:100%;text-align:center;top:8px;font-size:12.5px;color:#ececec">11</div></div><div class="a" style="left:693px;top:517px;width:70px;height:32px;background:#40414d;overflow:hidden"><div class="t" style="left:0;width:100%;text-align:center;top:8px;font-size:12.5px;color:#ececec">-420.8µs</div></div><div class="a" style="left:765px;top:517px;width:46px;height:32px;background:#40414d;overflow:hidden"><div class="t" style="left:0;width:100%;text-align:center;top:8px;font-size:12.5px;color:#ececec">0x04</div></div><div class="a" style="left:813px;top:517px;width:46px;height:32px;background:#40414d;overflow:hidden"><div class="t" style="left:0;width:100%;text-align:center;top:8px;font-size:12.5px;color:#ececec">0x53D</div></div><div class="a" style="left:861px;top:517px;width:46px;height:32px;background:#40414d;overflow:hidden"><div class="t" style="left:0;width:100%;text-align:center;top:8px;font-size:12.5px;color:#ececec">0x03</div></div><div class="a" style="left:909px;top:517px;width:46px;height:32px;background:#40414d;overflow:hidden"><div class="t" style="left:0;width:100%;text-align:center;top:8px;font-size:12.5px;color:#ececec">0x5D4</div></div><div class="a" style="left:957px;top:517px;width:70px;height:32px;background:#40414d;overflow:hidden"><div class="t" style="left:0;width:100%;text-align:center;top:8px;font-size:12.5px;color:#ececec">0x0A</div></div><div class="a" style="left:1029px;top:517px;width:95px;height:32px;background:#40414d;overflow:hidden"><div class="t" style="left:0;width:100%;text-align:center;top:0.5px;font-size:12.5px;color:#ececec">55 4E 49 2D 54</div><div class="t" style="left:0;width:100%;text-align:center;top:14.1px;font-size:12.5px;color:#ececec">21 00 00 00 2D</div></div><div class="a" style="left:1126px;top:517px;width:46px;height:32px;background:#40414d;overflow:hidden"><div class="t" style="left:1px;top:0.5px;font-size:12.5px;color:#ececec">0x6AD8</div><div class="t" style="left:1px;top:14.5px;font-size:12.5px;color:#ececec">D4[err]</div></div><div class="a" style="left:1174px;top:517px;width:46px;height:32px;background:#40414d;overflow:hidden"><div class="t" style="left:0;width:100%;text-align:center;top:8px;font-size:12.5px;color:#ececec"></div></div><div class="a" style="left:645.5px;top:551px;width:45.5px;height:32px;background:#232733;overflow:hidden"><div class="t" style="left:0;width:100%;text-align:center;top:8px;font-size:12.5px;color:#ececec">12</div></div><div class="a" style="left:693px;top:551px;width:70px;height:32px;background:#232733;overflow:hidden"><div class="t" style="left:0;width:100%;text-align:center;top:8px;font-size:12.5px;color:#ececec">-420.8µs</div></div><div class="a" style="left:765px;top:551px;width:46px;height:32px;background:#232733;overflow:hidden"><div class="t" style="left:0;width:100%;text-align:center;top:8px;font-size:12.5px;color:#ececec">0x0C</div></div><div class="a" style="left:813px;top:551px;width:46px;height:32px;background:#232733;overflow:hidden"><div class="t" style="left:0;width:100%;text-align:center;top:8px;font-size:12.5px;color:#ececec">0x53D</div></div><div class="a" style="left:861px;top:551px;width:46px;height:32px;background:#232733;overflow:hidden"><div class="t" style="left:0;width:100%;text-align:center;top:8px;font-size:12.5px;color:#ececec">0x03</div></div><div class="a" style="left:909px;top:551px;width:46px;height:32px;background:#232733;overflow:hidden"><div class="t" style="left:0;width:100%;text-align:center;top:8px;font-size:12.5px;color:#ececec">0x5D4</div></div><div class="a" style="left:957px;top:551px;width:70px;height:32px;background:#232733;overflow:hidden"><div class="t" style="left:0;width:100%;text-align:center;top:8px;font-size:12.5px;color:#ececec">0x0A</div></div><div class="a" style="left:1029px;top:551px;width:95px;height:32px;background:#232733;overflow:hidden"><div class="t" style="left:0;width:100%;text-align:center;top:-7.0px;font-size:12.5px;color:#ececec">55 4E 49 2D 54</div><div class="t" style="left:0;width:100%;text-align:center;top:6.6px;font-size:12.5px;color:#ececec">21 00 00 00 2D</div><div class="t" style="left:0;width:100%;text-align:center;top:20.2px;font-size:12.5px;color:#ececec">54 21 55 4E 49</div></div><div class="a" style="left:1126px;top:551px;width:46px;height:32px;background:#232733;overflow:hidden"><div class="t" style="left:1px;top:0.5px;font-size:12.5px;color:#ececec">0x6AD8</div><div class="t" style="left:1px;top:14.5px;font-size:12.5px;color:#ececec">D4[err]</div></div><div class="a" style="left:1174px;top:551px;width:46px;height:32px;background:#232733;overflow:hidden"><div class="t" style="left:0;width:100%;text-align:center;top:8px;font-size:12.5px;color:#ececec"></div></div><div class="a" style="left:645.5px;top:585px;width:45.5px;height:32px;background:#40414d;overflow:hidden"><div class="t" style="left:0;width:100%;text-align:center;top:8px;font-size:12.5px;color:#ececec">13</div></div><div class="a" style="left:693px;top:585px;width:70px;height:32px;background:#40414d;overflow:hidden"><div class="t" style="left:0;width:100%;text-align:center;top:8px;font-size:12.5px;color:#ececec">-420.8µs</div></div><div class="a" style="left:765px;top:585px;width:46px;height:32px;background:#40414d;overflow:hidden"><div class="t" style="left:0;width:100%;text-align:center;top:8px;font-size:12.5px;color:#ececec">0x00</div></div><div class="a" style="left:813px;top:585px;width:46px;height:32px;background:#40414d;overflow:hidden"><div class="t" style="left:0;width:100%;text-align:center;top:8px;font-size:12.5px;color:#ececec">0x53D</div></div><div class="a" style="left:861px;top:585px;width:46px;height:32px;background:#40414d;overflow:hidden"><div class="t" style="left:0;width:100%;text-align:center;top:8px;font-size:12.5px;color:#ececec">0x03</div></div><div class="a" style="left:909px;top:585px;width:46px;height:32px;background:#40414d;overflow:hidden"><div class="t" style="left:0;width:100%;text-align:center;top:8px;font-size:12.5px;color:#ececec">0x5D4</div></div><div class="a" style="left:957px;top:585px;width:70px;height:32px;background:#40414d;overflow:hidden"><div class="t" style="left:0;width:100%;text-align:center;top:8px;font-size:12.5px;color:#ececec">0x0A</div></div><div class="a" style="left:1029px;top:585px;width:95px;height:32px;background:#40414d;overflow:hidden"><div class="t" style="left:0;width:100%;text-align:center;top:0.5px;font-size:12.5px;color:#ececec">21 00 00 00 2D</div><div class="t" style="left:0;width:100%;text-align:center;top:14.1px;font-size:12.5px;color:#ececec">54 21 55 4E 49</div></div><div class="a" style="left:1126px;top:585px;width:46px;height:32px;background:#40414d;overflow:hidden"><div class="t" style="left:1px;top:0.5px;font-size:12.5px;color:#ececec">0x6AD8</div><div class="t" style="left:1px;top:14.5px;font-size:12.5px;color:#ececec">D4[err]</div></div><div class="a" style="left:1174px;top:585px;width:46px;height:32px;background:#40414d;overflow:hidden"><div class="t" style="left:0;width:100%;text-align:center;top:8px;font-size:12.5px;color:#ececec"></div></div><div class="a" style="left:645.5px;top:619px;width:45.5px;height:32px;background:#232733;overflow:hidden"><div class="t" style="left:0;width:100%;text-align:center;top:8px;font-size:12.5px;color:#ececec">14</div></div><div class="a" style="left:693px;top:619px;width:70px;height:32px;background:#232733;overflow:hidden"><div class="t" style="left:0;width:100%;text-align:center;top:8px;font-size:12.5px;color:#ececec">-420.8µs</div></div><div class="a" style="left:765px;top:619px;width:46px;height:32px;background:#232733;overflow:hidden"><div class="t" style="left:0;width:100%;text-align:center;top:8px;font-size:12.5px;color:#ececec">0x00</div></div><div class="a" style="left:813px;top:619px;width:46px;height:32px;background:#232733;overflow:hidden"><div class="t" style="left:0;width:100%;text-align:center;top:8px;font-size:12.5px;color:#ececec">0x53D</div></div><div class="a" style="left:861px;top:619px;width:46px;height:32px;background:#232733;overflow:hidden"><div class="t" style="left:0;width:100%;text-align:center;top:8px;font-size:12.5px;color:#ececec">0x03</div></div><div class="a" style="left:909px;top:619px;width:46px;height:32px;background:#232733;overflow:hidden"><div class="t" style="left:0;width:100%;text-align:center;top:8px;font-size:12.5px;color:#ececec">0x5D4</div></div><div class="a" style="left:957px;top:619px;width:70px;height:32px;background:#232733;overflow:hidden"><div class="t" style="left:0;width:100%;text-align:center;top:8px;font-size:12.5px;color:#ececec">0x0A</div></div><div class="a" style="left:1029px;top:619px;width:95px;height:32px;background:#232733;overflow:hidden"><div class="t" style="left:0;width:100%;text-align:center;top:-7.0px;font-size:12.5px;color:#ececec">21 00 00 00 2D</div><div class="t" style="left:0;width:100%;text-align:center;top:6.6px;font-size:12.5px;color:#ececec">54 21 55 4E 49</div><div class="t" style="left:0;width:100%;text-align:center;top:20.2px;font-size:12.5px;color:#ececec">2D 54 21 55 4E</div></div><div class="a" style="left:1126px;top:619px;width:46px;height:32px;background:#232733;overflow:hidden"><div class="t" style="left:1px;top:0.5px;font-size:12.5px;color:#ececec">0x6AD8</div><div class="t" style="left:1px;top:14.5px;font-size:12.5px;color:#ececec">D4[err]</div></div><div class="a" style="left:1174px;top:619px;width:46px;height:32px;background:#232733;overflow:hidden"><div class="t" style="left:0;width:100%;text-align:center;top:8px;font-size:12.5px;color:#ececec"></div></div><div class="a" style="left:645.5px;top:653px;width:45.5px;height:32px;background:#40414d;overflow:hidden"><div class="t" style="left:0;width:100%;text-align:center;top:8px;font-size:12.5px;color:#ececec">15</div></div><div class="a" style="left:693px;top:653px;width:70px;height:32px;background:#40414d;overflow:hidden"><div class="t" style="left:0;width:100%;text-align:center;top:8px;font-size:12.5px;color:#ececec">-420.8µs</div></div><div class="a" style="left:765px;top:653px;width:46px;height:32px;background:#40414d;overflow:hidden"><div class="t" style="left:0;width:100%;text-align:center;top:8px;font-size:12.5px;color:#ececec">0x07</div></div><div class="a" style="left:813px;top:653px;width:46px;height:32px;background:#40414d;overflow:hidden"><div class="t" style="left:0;width:100%;text-align:center;top:8px;font-size:12.5px;color:#ececec">0x53D</div></div><div class="a" style="left:861px;top:653px;width:46px;height:32px;background:#40414d;overflow:hidden"><div class="t" style="left:0;width:100%;text-align:center;top:8px;font-size:12.5px;color:#ececec">0x03</div></div><div class="a" style="left:909px;top:653px;width:46px;height:32px;background:#40414d;overflow:hidden"><div class="t" style="left:0;width:100%;text-align:center;top:0.5px;font-size:12.5px;color:#ececec">0x5E8[</div><div class="t" style="left:0;width:100%;text-align:center;top:14.5px;font-size:12.5px;color:#ececec">err]</div></div><div class="a" style="left:957px;top:653px;width:70px;height:32px;background:#40414d;overflow:hidden"><div class="t" style="left:0;width:100%;text-align:center;top:8px;font-size:12.5px;color:#ececec">0x0A</div></div><div class="a" style="left:1029px;top:653px;width:95px;height:32px;background:#40414d;overflow:hidden"><div class="t" style="left:0;width:100%;text-align:center;top:0.5px;font-size:12.5px;color:#ececec">54 21 55 4E 49</div><div class="t" style="left:0;width:100%;text-align:center;top:14.1px;font-size:12.5px;color:#ececec">2D 54 21 55 4E</div><div class="t" style="left:0;width:100%;text-align:center;top:27.7px;font-size:12.5px;color:#ececec">49 2D 54 21 55</div></div><div class="a" style="left:1126px;top:653px;width:46px;height:32px;background:#40414d;overflow:hidden"><div class="t" style="left:1px;top:0.5px;font-size:12.5px;color:#ececec">0x8142</div><div class="t" style="left:1px;top:14.5px;font-size:12.5px;color:#ececec">DE[err]</div></div><div class="a" style="left:1174px;top:653px;width:46px;height:32px;background:#40414d;overflow:hidden"><div class="t" style="left:0;width:100%;text-align:center;top:8px;font-size:12.5px;color:#ececec"></div></div>
<div class="a" style="left:1221px;top:142px;width:36px;height:544px;background:#3a3d48"></div>
<div class="a" style="left:1221px;top:177px;width:36px;height:253px;background:#4d94f4"></div>
<div class="a" style="left:1221px;top:650px;width:36px;height:36px;background:#3e414b;border-top:1px solid #4c4f58"></div>
<svg class="a" style="left:1221px;top:142px" width="36" height="36"><path d="M10 22l8-8 8 8" fill="none" stroke="#f4f4f4" stroke-width="2.2"/></svg>
<svg class="a" style="left:1221px;top:650px" width="36" height="36"><path d="M10 14l8 8 8-8" fill="none" stroke="#f4f4f4" stroke-width="2.2"/></svg>
<div class="a" style="left:6px;top:708px;width:1268px;height:89px;background:#1b1921;border:1px solid #55555c;border-top-color:#2c2a32"></div>
<div class="a" style="left:8px;top:711px;width:56px;height:82px;background:linear-gradient(#5a5c66,#363a46)"></div>
<svg class="a" style="left:8px;top:711px" width="56" height="82"><circle cx="27" cy="40" r="10" fill="none" stroke="#eee" stroke-width="1.3"/><path d="M29 35l-5 5 5 5" fill="none" stroke="#eee" stroke-width="2"/></svg>
<div class="a" style="left:1114px;top:711px;width:55px;height:82px;background:linear-gradient(#5a5c66,#363a46)"></div>
<svg class="a" style="left:1114px;top:711px" width="55" height="82"><circle cx="28" cy="40" r="10" fill="none" stroke="#eee" stroke-width="1.3"/><path d="M26 35l5 5-5 5" fill="none" stroke="#eee" stroke-width="2"/></svg>
<div class="a" style="left:68px;top:711px;width:120px;height:82px;background:#3b3a33;border:1px solid #e8dc20"></div>
<div class="a" style="left:68px;top:711px;width:120px;height:7px;background:#f8ec18"></div>
<div class="t" style="left:76px;top:721px;font-size:16px;color:#f0f0f0">C1</div>
<div class="t" style="left:68px;width:115px;text-align:right;top:721px;font-size:14px;color:#f0f0f0">1.00V</div>
<div class="t" style="left:73px;top:738.5px;font-size:12.5px;color:#f0f0f0">1MΩ</div>
<div class="t" style="left:68px;width:115px;text-align:right;top:738px;font-size:14px;color:#f0f0f0">FULL</div>
<div class="t" style="left:68px;width:115px;text-align:right;top:756px;font-size:14px;color:#f0f0f0">1X</div>
<div class="t" style="left:68px;width:115px;text-align:right;top:774px;font-size:14px;color:#f0f0f0">0.00V</div>
<svg class="a" style="left:72px;top:755px" width="26" height="32"><path d="M2 5.5h17M2 10.5h17M6 2.5l-4 3M15 13.5l4-3" fill="none" stroke="#c4c4c8" stroke-width="1.8"/><rect x="3" y="21.5" width="17" height="3.5" fill="#4a8ee8"/><path d="M3 28h17" stroke="#4a8ee8" stroke-width="3" stroke-dasharray="2.6,1"/></svg>
<div class="a" style="left:192px;top:711px;width:120px;height:82px;background:#2f3434;border:1px solid #3cd8e0"></div>
<div class="a" style="left:192px;top:711px;width:120px;height:7px;background:#44e8f4"></div>
<div class="a" style="left:192px;top:788px;width:120px;height:5px;background:#44e8f4"></div>
<div class="t" style="left:200px;top:721px;font-size:16px;color:#f0f0f0">C2</div>
<div class="t" style="left:192px;width:115px;text-align:right;top:721px;font-size:14px;color:#f0f0f0">1.00V</div>
<div class="t" style="left:197px;top:738.5px;font-size:12.5px;color:#f0f0f0">1MΩ</div>
<div class="t" style="left:192px;width:115px;text-align:right;top:738px;font-size:14px;color:#f0f0f0">FULL</div>
<div class="t" style="left:192px;width:115px;text-align:right;top:756px;font-size:14px;color:#f0f0f0">1X</div>
<div class="t" style="left:192px;width:115px;text-align:right;top:774px;font-size:14px;color:#f0f0f0">0.00V</div>
<svg class="a" style="left:196px;top:755px" width="26" height="32"><path d="M2 5.5h17M2 10.5h17M6 2.5l-4 3M15 13.5l4-3" fill="none" stroke="#c4c4c8" stroke-width="1.8"/><rect x="3" y="21.5" width="17" height="3.5" fill="#4a8ee8"/><path d="M3 28h17" stroke="#4a8ee8" stroke-width="3" stroke-dasharray="2.6,1"/></svg>
<div class="a" style="left:316px;top:711px;width:76px;height:82px;background:#363843;border:1px solid #5a5c64"></div>
<div class="a" style="left:316px;top:711px;width:76px;height:7px;background:#686a72"></div>
<div class="t" style="left:324px;top:720px;font-size:16px;color:#f0f0f0">C3</div>
<div class="t" style="left:316px;width:76px;text-align:center;top:743px;font-size:18px;font-weight:bold;color:#f0f0f0">OFF</div>
<div class="a" style="left:396px;top:711px;width:76px;height:82px;background:#363843;border:1px solid #5a5c64"></div>
<div class="a" style="left:396px;top:711px;width:76px;height:7px;background:#686a72"></div>
<div class="t" style="left:404px;top:720px;font-size:16px;color:#f0f0f0">C4</div>
<div class="t" style="left:396px;width:76px;text-align:center;top:743px;font-size:18px;font-weight:bold;color:#f0f0f0">OFF</div>
<div class="a" style="left:476px;top:711px;width:120px;height:82px;background:#363843;border:1px solid #5a5c64"></div>
<div class="a" style="left:476px;top:711px;width:120px;height:7px;background:#686a72"></div>
<div class="t" style="left:484px;top:718px;font-size:15px;color:#f0f0f0">Digital</div>
<div class="t" style="left:570px;top:739px;font-size:14px;color:#f0f0f0">0</div>
<div class="t" style="left:484px;top:775px;font-size:13px;color:#f0f0f0">15</div>
<svg class="a" style="left:514px;top:739px" width="46" height="46"><rect x="0" y="0" width="8" height="8" fill="#6e7078"/><rect x="12" y="0" width="8" height="8" fill="#6e7078"/><rect x="24" y="0" width="8" height="8" fill="#6e7078"/><rect x="36" y="0" width="8" height="8" fill="#6e7078"/><rect x="0" y="12" width="8" height="8" fill="#6e7078"/><rect x="12" y="12" width="8" height="8" fill="#6e7078"/><rect x="24" y="12" width="8" height="8" fill="#6e7078"/><rect x="36" y="12" width="8" height="8" fill="#6e7078"/><rect x="0" y="24" width="8" height="8" fill="#6e7078"/><rect x="12" y="24" width="8" height="8" fill="#6e7078"/><rect x="24" y="24" width="8" height="8" fill="#6e7078"/><rect x="36" y="24" width="8" height="8" fill="#6e7078"/><rect x="0" y="36" width="8" height="8" fill="#6e7078"/><rect x="12" y="36" width="8" height="8" fill="#6e7078"/><rect x="24" y="36" width="8" height="8" fill="#6e7078"/><rect x="36" y="36" width="8" height="8" fill="#6e7078"/></svg>
<div class="a" style="left:1173px;top:711px;width:97px;height:82px;background:#2f333d"></div>
<svg class="a" style="left:1173px;top:711px" width="97" height="82"><g fill="none" stroke="#f2f2f2" stroke-width="1.4">
<rect x="16" y="8" width="11" height="8"/><rect x="13.5" y="16" width="17" height="18"/>
<circle cx="78" cy="26" r="12"/><ellipse cx="78" cy="26" rx="5.5" ry="12"/><path d="M66 26h24M68 20h20M68 32h20"/></g>
<rect x="18" y="10" width="2" height="2" fill="#f2f2f2"/><rect x="22" y="10" width="2" height="2" fill="#f2f2f2"/>
<circle cx="84" cy="32" r="6.5" fill="#2f333d" stroke="#f2f2f2" stroke-width="1.4"/><path d="M80 36l8-8" stroke="#f2f2f2" stroke-width="1.4"/></svg>
<div class="t" style="left:1173px;width:97px;text-align:center;top:755px;font-size:16px;color:#f0f0f0">9:52</div>
<div class="t" style="left:1173px;width:97px;text-align:center;top:775px;font-size:16px;color:#f0f0f0">2024/09/18</div>
</body></html>
